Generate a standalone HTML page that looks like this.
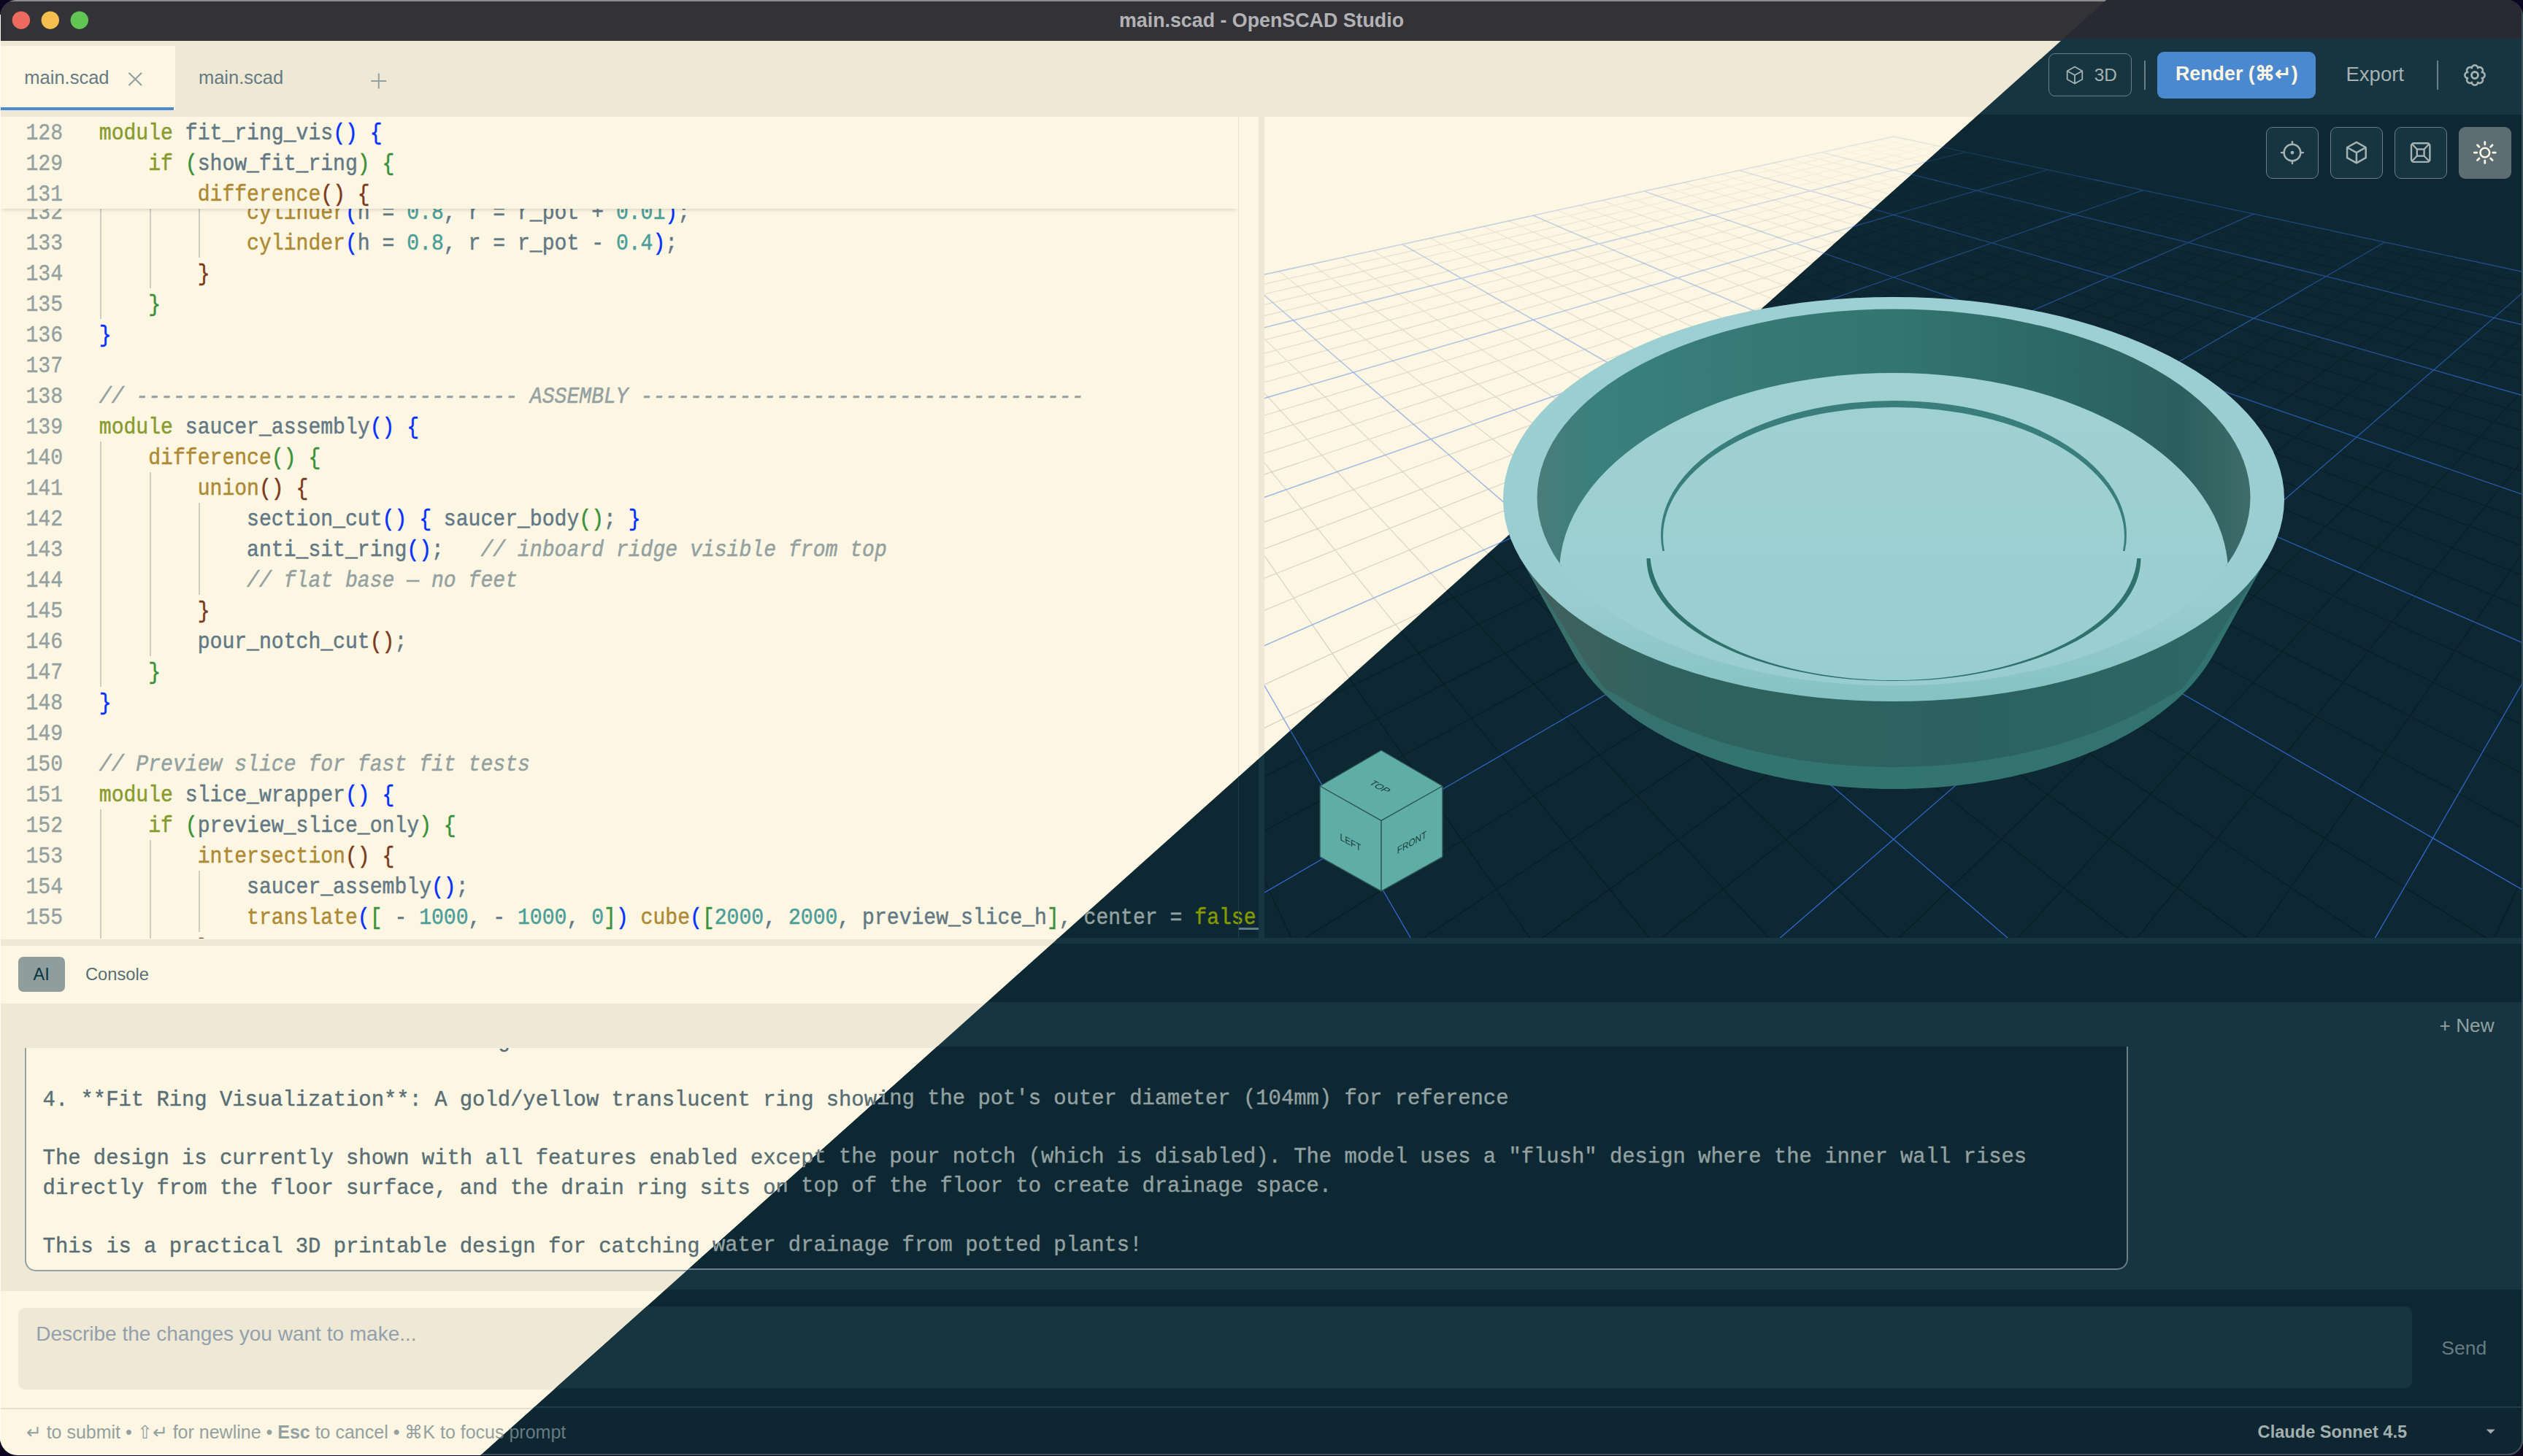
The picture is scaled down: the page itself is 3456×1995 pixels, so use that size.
<!DOCTYPE html><html><head><meta charset="utf-8"><style>
body{margin:0;width:3456px;height:1995px;background:#0c0620;overflow:hidden;position:relative}
.win{position:absolute;left:0;top:0;width:3456px;height:1993.5px;overflow:hidden;border-radius:22px 22px 21px 24px}
.ln{position:absolute;left:0;width:86px;text-align:right;font:400 28.1px/42px "Liberation Mono",monospace;white-space:pre;transform:translateY(3.5px) scaleY(1.13);transform-origin:0 28.5px;-webkit-text-stroke:0.35px currentColor}
.cl{position:absolute;left:135.8px;font:400 28.1px/42px "Liberation Mono",monospace;white-space:pre;transform:translateY(3.5px) scaleY(1.13);transform-origin:0 28.5px;-webkit-text-stroke:0.45px currentColor}
i{font-style:normal}
.light .ln{color:#93a1a1}.light .cl{color:#627985}.light .kw{color:#889b2e}.light .id{color:#627985}.light .fn{color:#ad8a33}.light .num{color:#4b9e99}.light .com{color:#93a1a1;font-style:italic}.light .op{color:#627985}.light .cst{color:#889b2e}.light .b0{color:#0431fa}.light .b1{color:#3a9139}.light .b2{color:#7b3a1c}.dark .ln{color:#586e75}.dark .cl{color:#93a1a1}.dark .kw{color:#889b2e}.dark .id{color:#93a1a1}.dark .fn{color:#ad8a33}.dark .num{color:#4b9e99}.dark .com{color:#657b83;font-style:italic}.dark .op{color:#93a1a1}.dark .cst{color:#859900}.dark .b0{color:#0431fa}.dark .b1{color:#319331}.dark .b2{color:#7b3814}</style></head><body><div class="win light"><div style="position:absolute;left:0px;top:0px;width:3456.0px;height:55.5px;background:#333337;"></div><div style="position:absolute;left:0px;top:0px;width:3456.0px;height:2.0px;background:#8d8d90;"></div><svg width="3456" height="1995" viewBox="0 0 3456 1995" style="position:absolute;left:0;top:0;overflow:visible"><circle cx="28.9" cy="27.7" r="12.2" fill="#ed6a5e"/><circle cx="68.8" cy="27.7" r="12.2" fill="#f4bf4f"/><circle cx="108.8" cy="27.7" r="12.2" fill="#61c554"/></svg><div style="position:absolute;left:0;width:3456px;top:12.7px;text-align:center;font:700 26.8px/30.8px 'Liberation Sans',sans-serif;color:#b2b2b6">main.scad - OpenSCAD Studio</div><div style="position:absolute;left:0px;top:55.5px;width:3456.0px;height:104.5px;background:#eee8d5;"></div><div style="position:absolute;left:0px;top:63.3px;width:239.7px;height:87.7px;background:#fdf6e3;"></div><div style="position:absolute;left:0px;top:147px;width:238.0px;height:4.0px;background:#4a8ad2;"></div><div style="position:absolute;left:33.3px;top:92.3px;font:400 25.5px/29.3px 'Liberation Sans',sans-serif;color:#657b83;white-space:pre;">main.scad</div><div style="position:absolute;left:271.9px;top:92.3px;font:400 25.5px/29.3px 'Liberation Sans',sans-serif;color:#657b83;white-space:pre;">main.scad</div><svg width="3456" height="1995" viewBox="0 0 3456 1995" style="position:absolute;left:0;top:0;overflow:visible"><path d="M176.5 99.8L194 117M194 99.8L176.5 117" stroke="#93a1a1" stroke-width="2.2"/><path d="M508.29999999999995 111H529.3M518.8 100.5V121.5" stroke="#93a1a1" stroke-width="2"/></svg><div style="position:absolute;left:2806.2px;top:73.2px;width:114.2px;height:59.2px;background:transparent;box-sizing:border-box;border:1.6px solid #93a1a1;border-radius:9px"></div><svg width="3456" height="1995" viewBox="0 0 3456 1995" style="position:absolute;left:0;top:0;overflow:visible"><path d="M2842.0 91.5L2852.3 97.2L2852.3 108.8L2842.0 114.5L2831.7 108.8L2831.7 97.2ZM2831.7 97.2L2842.0 103.0L2852.3 97.2M2842.0 103.0L2842.0 114.5" fill="none" stroke="#586e75" stroke-width="1.8" stroke-linejoin="round"/></svg><div style="position:absolute;left:2868.8px;top:89.1px;font:400 24.4px/28.0px 'Liberation Sans',sans-serif;color:#586e75;white-space:pre;">3D</div><div style="position:absolute;left:2937.2px;top:83.3px;width:2.0px;height:39.4px;background:#93a1a1;"></div><div style="position:absolute;left:2955.2px;top:71.2px;width:216.8px;height:63.6px;background:#4a89d0;border-radius:9px"></div><div style="position:absolute;left:2980px;top:86.3px;font:700 26.8px/30.8px 'Liberation Sans',sans-serif;color:#fdf6e3;white-space:pre;">Render (⌘↵)</div><div style="position:absolute;left:3213.5px;top:85.7px;font:400 27.5px/31.6px 'Liberation Sans',sans-serif;color:#586e75;white-space:pre;">Export</div><div style="position:absolute;left:3338px;top:83px;width:2.0px;height:39.6px;background:#93a1a1;"></div><svg width="3456" height="1995" viewBox="0 0 3456 1995" style="position:absolute;left:0;top:0;overflow:visible"><path d="M3403.60 103.00L3403.57 103.53L3403.47 104.06L3403.31 104.57L3403.08 105.07L3402.79 105.54L3402.43 105.98L3402.00 106.38L3401.49 106.73L3400.87 107.01L3399.79 107.06L3400.52 107.85L3400.77 108.49L3400.88 109.09L3400.90 109.68L3400.84 110.24L3400.71 110.78L3400.52 111.30L3400.27 111.77L3399.97 112.22L3399.62 112.62L3399.22 112.97L3398.77 113.27L3398.30 113.52L3397.78 113.71L3397.24 113.84L3396.68 113.90L3396.09 113.88L3395.49 113.77L3394.85 113.52L3394.06 112.79L3394.01 113.87L3393.73 114.49L3393.38 115.00L3392.98 115.43L3392.54 115.79L3392.07 116.08L3391.57 116.31L3391.06 116.47L3390.53 116.57L3390.00 116.60L3389.47 116.57L3388.94 116.47L3388.43 116.31L3387.93 116.08L3387.46 115.79L3387.02 115.43L3386.62 115.00L3386.27 114.49L3385.99 113.87L3385.94 112.79L3385.15 113.52L3384.51 113.77L3383.91 113.88L3383.32 113.90L3382.76 113.84L3382.22 113.71L3381.70 113.52L3381.23 113.27L3380.78 112.97L3380.38 112.62L3380.03 112.22L3379.73 111.77L3379.48 111.30L3379.29 110.78L3379.16 110.24L3379.10 109.68L3379.12 109.09L3379.23 108.49L3379.48 107.85L3380.21 107.06L3379.13 107.01L3378.51 106.73L3378.00 106.38L3377.57 105.98L3377.21 105.54L3376.92 105.07L3376.69 104.57L3376.53 104.06L3376.43 103.53L3376.40 103.00L3376.43 102.47L3376.53 101.94L3376.69 101.43L3376.92 100.93L3377.21 100.46L3377.57 100.02L3378.00 99.62L3378.51 99.27L3379.13 98.99L3380.21 98.94L3379.48 98.15L3379.23 97.51L3379.12 96.91L3379.10 96.32L3379.16 95.76L3379.29 95.22L3379.48 94.70L3379.73 94.23L3380.03 93.78L3380.38 93.38L3380.78 93.03L3381.23 92.73L3381.70 92.48L3382.22 92.29L3382.76 92.16L3383.32 92.10L3383.91 92.12L3384.51 92.23L3385.15 92.48L3385.94 93.21L3385.99 92.13L3386.27 91.51L3386.62 91.00L3387.02 90.57L3387.46 90.21L3387.93 89.92L3388.43 89.69L3388.94 89.53L3389.47 89.43L3390.00 89.40L3390.53 89.43L3391.06 89.53L3391.57 89.69L3392.07 89.92L3392.54 90.21L3392.98 90.57L3393.38 91.00L3393.73 91.51L3394.01 92.13L3394.06 93.21L3394.85 92.48L3395.49 92.23L3396.09 92.12L3396.68 92.10L3397.24 92.16L3397.78 92.29L3398.30 92.48L3398.77 92.73L3399.22 93.03L3399.62 93.38L3399.97 93.78L3400.27 94.23L3400.52 94.70L3400.71 95.22L3400.84 95.76L3400.90 96.32L3400.88 96.91L3400.77 97.51L3400.52 98.15L3399.79 98.94L3400.87 98.99L3401.49 99.27L3402.00 99.62L3402.43 100.02L3402.79 100.46L3403.08 100.93L3403.31 101.43L3403.47 101.94L3403.57 102.47Z" fill="none" stroke="#586e75" stroke-width="2.6" stroke-linejoin="round"/><circle cx="3390" cy="103" r="4.5" fill="none" stroke="#586e75" stroke-width="2.8"/></svg><div style="position:absolute;left:0px;top:160px;width:1724.0px;height:1128.0px;background:#fdf6e3;"></div><div style="position:absolute;left:0;top:160px;width:1721px;height:1126px;overflow:hidden"><div style="position:absolute;left:0;top:-160px;width:1696px;height:1995px"><div style="position:absolute;left:137.3px;top:143px;width:2px;height:294px;background:#cfccc1"></div><div style="position:absolute;left:204.8px;top:185px;width:2px;height:210px;background:#cfccc1"></div><div style="position:absolute;left:272.2px;top:269px;width:2px;height:84px;background:#cfccc1"></div><div style="position:absolute;left:137.3px;top:605px;width:2px;height:336px;background:#cfccc1"></div><div style="position:absolute;left:204.8px;top:647px;width:2px;height:252px;background:#cfccc1"></div><div style="position:absolute;left:272.2px;top:689px;width:2px;height:126px;background:#cfccc1"></div><div style="position:absolute;left:137.3px;top:1109px;width:2px;height:210px;background:#cfccc1"></div><div style="position:absolute;left:204.8px;top:1151px;width:2px;height:168px;background:#cfccc1"></div><div style="position:absolute;left:272.2px;top:1193px;width:2px;height:84px;background:#cfccc1"></div><div class="ln" style="top:269px">132</div><div class="cl" style="top:269px">            <i class="fn">cylinder</i><i class="b0">(</i><i class="id">h</i> <i class="op">=</i> <i class="num">0.8</i><i class="op">,</i> <i class="id">r</i> <i class="op">=</i> <i class="id">r_pot</i> <i class="op">+</i> <i class="num">0.01</i><i class="b0">)</i><i class="op">;</i></div><div class="ln" style="top:311px">133</div><div class="cl" style="top:311px">            <i class="fn">cylinder</i><i class="b0">(</i><i class="id">h</i> <i class="op">=</i> <i class="num">0.8</i><i class="op">,</i> <i class="id">r</i> <i class="op">=</i> <i class="id">r_pot</i> <i class="op">-</i> <i class="num">0.4</i><i class="b0">)</i><i class="op">;</i></div><div class="ln" style="top:353px">134</div><div class="cl" style="top:353px">        <i class="b2">}</i></div><div class="ln" style="top:395px">135</div><div class="cl" style="top:395px">    <i class="b1">}</i></div><div class="ln" style="top:437px">136</div><div class="cl" style="top:437px"><i class="b0">}</i></div><div class="ln" style="top:479px">137</div><div class="cl" style="top:479px"></div><div class="ln" style="top:521px">138</div><div class="cl" style="top:521px"><i class="com">// ------------------------------- ASSEMBLY ------------------------------------</i></div><div class="ln" style="top:563px">139</div><div class="cl" style="top:563px"><i class="kw">module</i> <i class="id">saucer_assembly</i><i class="b0">(</i><i class="b0">)</i> <i class="b0">{</i></div><div class="ln" style="top:605px">140</div><div class="cl" style="top:605px">    <i class="fn">difference</i><i class="b1">(</i><i class="b1">)</i> <i class="b1">{</i></div><div class="ln" style="top:647px">141</div><div class="cl" style="top:647px">        <i class="fn">union</i><i class="b2">(</i><i class="b2">)</i> <i class="b2">{</i></div><div class="ln" style="top:689px">142</div><div class="cl" style="top:689px">            <i class="id">section_cut</i><i class="b0">(</i><i class="b0">)</i> <i class="b0">{</i> <i class="id">saucer_body</i><i class="b1">(</i><i class="b1">)</i><i class="op">;</i> <i class="b0">}</i></div><div class="ln" style="top:731px">143</div><div class="cl" style="top:731px">            <i class="id">anti_sit_ring</i><i class="b0">(</i><i class="b0">)</i><i class="op">;</i>   <i class="com">// inboard ridge visible from top</i></div><div class="ln" style="top:773px">144</div><div class="cl" style="top:773px">            <i class="com">// flat base — no feet</i></div><div class="ln" style="top:815px">145</div><div class="cl" style="top:815px">        <i class="b2">}</i></div><div class="ln" style="top:857px">146</div><div class="cl" style="top:857px">        <i class="id">pour_notch_cut</i><i class="b2">(</i><i class="b2">)</i><i class="op">;</i></div><div class="ln" style="top:899px">147</div><div class="cl" style="top:899px">    <i class="b1">}</i></div><div class="ln" style="top:941px">148</div><div class="cl" style="top:941px"><i class="b0">}</i></div><div class="ln" style="top:983px">149</div><div class="cl" style="top:983px"></div><div class="ln" style="top:1025px">150</div><div class="cl" style="top:1025px"><i class="com">// Preview slice for fast fit tests</i></div><div class="ln" style="top:1067px">151</div><div class="cl" style="top:1067px"><i class="kw">module</i> <i class="id">slice_wrapper</i><i class="b0">(</i><i class="b0">)</i> <i class="b0">{</i></div><div class="ln" style="top:1109px">152</div><div class="cl" style="top:1109px">    <i class="kw">if</i> <i class="b1">(</i><i class="id">preview_slice_only</i><i class="b1">)</i> <i class="b1">{</i></div><div class="ln" style="top:1151px">153</div><div class="cl" style="top:1151px">        <i class="fn">intersection</i><i class="b2">(</i><i class="b2">)</i> <i class="b2">{</i></div><div class="ln" style="top:1193px">154</div><div class="cl" style="top:1193px">            <i class="id">saucer_assembly</i><i class="b0">(</i><i class="b0">)</i><i class="op">;</i></div><div class="ln" style="top:1235px">155</div><div class="cl" style="top:1235px">            <i class="fn">translate</i><i class="b0">(</i><i class="b1">[</i> <i class="op">-</i> <i class="num">1000</i><i class="op">,</i> <i class="op">-</i> <i class="num">1000</i><i class="op">,</i> <i class="num">0</i><i class="b1">]</i><i class="b0">)</i> <i class="fn">cube</i><i class="b0">(</i><i class="b1">[</i><i class="num">2000</i><i class="op">,</i> <i class="num">2000</i><i class="op">,</i> <i class="id">preview_slice_h</i><i class="b1">]</i><i class="op">,</i> <i class="id">center</i> <i class="op">=</i> <i class="cst">false</i><i class="b0">)</i><i class="op">;</i></div><div class="ln" style="top:1277px">156</div><div class="cl" style="top:1277px">        <i class="b2">}</i></div><div style="position:absolute;left:0;top:160px;width:1696px;height:126px;background:#fdf6e3;box-shadow:0 5px 5px -3px rgba(0,0,0,0.13)"></div><div class="ln" style="top:160px">128</div><div class="cl" style="top:160px"><i class="kw">module</i> <i class="id">fit_ring_vis</i><i class="b0">(</i><i class="b0">)</i> <i class="b0">{</i></div><div class="ln" style="top:202px">129</div><div class="cl" style="top:202px">    <i class="kw">if</i> <i class="b1">(</i><i class="id">show_fit_ring</i><i class="b1">)</i> <i class="b1">{</i></div><div class="ln" style="top:244px">131</div><div class="cl" style="top:244px">        <i class="fn">difference</i><i class="b2">(</i><i class="b2">)</i> <i class="b2">{</i></div></div></div><div style="position:absolute;left:1695.8px;top:160px;width:1.4px;height:1126.0px;background:#e9e2cf;"></div><div style="position:absolute;left:1697px;top:1270.5px;width:27.0px;height:3.1px;background:#93a1a1;"></div><div style="position:absolute;left:1724px;top:160px;width:8.0px;height:1128.0px;background:#eee8d5;"></div><div style="position:absolute;left:1732px;top:160px;width:1724.0px;height:1127.0px;background:#fdf6e3;"></div><svg class="grid" width="1724" height="1125" viewBox="1732 160 1724 1125" style="position:absolute;left:1732px;top:160px"><path d="M6721.1 1173.6L7542.4 1364.7M-1537.2 1192.2L-2360.2 1387.2M6863.5 1244.2L7758.1 1458.2M-1679.9 1263.5L-2576.4 1481.8M6402.0 1208.8L7200.0 1411.0M7200.0 1411.0L8281.5 1685.1M-1217.6 1226.0L-2017.1 1432.1M-2017.1 1432.1L-3101.0 1711.4M6530.8 1283.4L7400.7 1510.5M7400.7 1510.5L8603.2 1824.6M-1346.6 1301.2L-2218.2 1532.6M-2218.2 1532.6L-3423.6 1852.5M5964.1 1175.3L6674.6 1366.6M6674.6 1366.6L7628.9 1623.7M7628.9 1623.7L8978.3 1987.2M-779.0 1190.5L-1490.7 1385.2M-1490.7 1385.2L-2446.9 1646.9M-2446.9 1646.9L-3799.7 2017.1M6065.7 1246.0L6836.3 1460.3M6836.3 1460.3L7890.7 1753.5M7890.7 1753.5L9421.2 2179.1M-880.8 1261.7L-1652.7 1479.7M-1652.7 1479.7L-2709.3 1778.1M-2709.3 1778.1L-4243.9 2211.4M5625.1 1210.6L6305.9 1413.1M6305.9 1413.1L7228.7 1687.5M7228.7 1687.5L8550.1 2080.5M8550.1 2080.5L10599.8 2690.1M-439.5 1224.3L-1121.4 1430.0M-1121.4 1430.0L-2045.9 1708.9M-2045.9 1708.9L-3370.5 2108.6M-3370.5 2108.6L-5426.4 2728.9M5710.8 1285.2L6449.2 1512.7M6449.2 1512.7L7470.0 1827.2M7470.0 1827.2L8973.5 2290.4M8973.5 2290.4L11408.1 3040.5M-525.4 1299.4L-1264.9 1530.4M-1264.9 1530.4L-2287.7 1849.9M-2287.7 1849.9L-3794.9 2320.7M-3794.9 2320.7L-6237.8 3083.9M5206.9 1177.0L5806.6 1368.6M5806.6 1368.6L6612.1 1626.0M6612.1 1626.0L7751.2 1990.0M7751.2 1990.0L9485.2 2544.2M9485.2 2544.2L12445.2 3490.1M-20.8 1188.8L-621.4 1383.2M-621.4 1383.2L-1428.1 1644.5M-1428.1 1644.5L-2569.6 2014.2M-2569.6 2014.2L-4308.2 2577.3M-4308.2 2577.3L-7279.1 3539.5M5267.8 1247.8L5914.3 1462.4M5914.3 1462.4L6799.0 1756.0M6799.0 1756.0L8083.2 2182.3M8083.2 2182.3L10116.5 2857.2M10116.5 2857.2L12026.4 3491.2M-81.8 1259.9L-729.2 1477.6M-729.2 1477.6L-1615.4 1775.5M-1615.4 1775.5L-2902.4 2208.3M-2902.4 2208.3L-4941.5 2893.9M-4941.5 2893.9L-6858.5 3538.5M4848.0 1212.3L5411.7 1415.1M5411.7 1415.1L6175.7 1689.9M6175.7 1689.9L7269.8 2083.5M7269.8 2083.5L8967.0 2694.0M8967.0 2694.0L11188.7 3493.2M338.4 1222.5L-225.9 1428.0M-225.9 1428.0L-991.1 1706.5M-991.1 1706.5L-2087.2 2105.5M-2087.2 2105.5L-3788.5 2724.9M-3788.5 2724.9L-6017.6 3536.4M4890.7 1287.1L5497.5 1514.9M5497.5 1514.9L6336.4 1829.8M6336.4 1829.8L7572.0 2293.7M7572.0 2293.7L9573.1 3045.0M9573.1 3045.0L10769.8 3494.3M295.6 1297.5L-311.9 1528.2M-311.9 1528.2L-1152.0 1847.2M-1152.0 1847.2L-2390.1 2317.4M-2390.1 2317.4L-4396.5 3079.4M-4396.5 3079.4L-5597.2 3535.3M4449.6 1178.7L4938.5 1370.6M4938.5 1370.6L5595.1 1628.4M5595.1 1628.4L6523.7 1992.9M6523.7 1992.9L7937.4 2547.9M7937.4 2547.9L10350.8 3495.3M737.2 1187.0L247.8 1381.3M247.8 1381.3L-409.6 1642.2M-409.6 1642.2L-1339.7 2011.3M-1339.7 2011.3L-2756.4 2573.6M-2756.4 2573.6L-5176.8 3534.2M4469.7 1249.6L4992.2 1464.5M4992.2 1464.5L5707.1 1758.6M5707.1 1758.6L6744.9 2185.5M6744.9 2185.5L8388.1 2861.4M8388.1 2861.4L9931.8 3496.4M717.0 1258.1L194.0 1475.5M194.0 1475.5L-521.8 1773.0M-521.8 1773.0L-1561.3 2205.1M-1561.3 2205.1L-3208.2 2889.7M-3208.2 2889.7L-4756.4 3533.2M4070.8 1214.1L4517.3 1417.2M4517.3 1417.2L5122.5 1692.4M5122.5 1692.4L5989.1 2086.5M5989.1 2086.5L7333.6 2698.0M7333.6 2698.0L9093.8 3498.5M1116.2 1220.8L669.4 1425.9M669.4 1425.9L63.6 1704.1M63.6 1704.1L-804.3 2102.5M-804.3 2102.5L-2151.3 2720.9M-2151.3 2720.9L-3915.8 3531.1M4070.5 1288.9L4545.7 1517.1M4545.7 1517.1L5202.6 1832.5M5202.6 1832.5L6170.2 2297.1M6170.2 2297.1L7737.4 3049.5M7737.4 3049.5L8674.7 3499.5M1116.5 1295.6L641.0 1526.0M641.0 1526.0L-16.6 1844.6M-16.6 1844.6L-985.7 2314.1M-985.7 2314.1L-2556.0 3074.8M-2556.0 3074.8L-3495.6 3530.0M3692.2 1180.4L4070.2 1372.6M4070.2 1372.6L4577.9 1630.7M4577.9 1630.7L5295.9 1995.8M5295.9 1995.8L6389.1 2551.6M6389.1 2551.6L8255.5 3500.6M1495.0 1185.3L1116.8 1379.3M1116.8 1379.3L608.7 1639.9M608.7 1639.9L-110.2 2008.5M-110.2 2008.5L-1205.0 2569.9M-1205.0 2569.9L-3075.4 3529.0M3671.5 1251.4L4069.8 1466.6M4069.8 1466.6L4614.9 1761.1M4614.9 1761.1L5406.2 2188.6M5406.2 2188.6L6659.2 2865.6M6659.2 2865.6L7836.3 3501.6M1515.7 1256.3L1117.1 1473.4M1117.1 1473.4L571.6 1770.5M571.6 1770.5L-220.6 2201.9M-220.6 2201.9L-1475.6 2885.4M-1475.6 2885.4L-2655.3 3527.9M3293.5 1215.8L3622.7 1419.2M3622.7 1419.2L4069.0 1694.8M4069.0 1694.8L4708.1 2089.6M4708.1 2089.6L5699.7 2701.9M5699.7 2701.9L6997.9 3503.7M1893.9 1219.0L1564.5 1423.9M1564.5 1423.9L1118.0 1701.6M1118.0 1701.6L478.2 2099.5M478.2 2099.5L-514.6 2717.0M-514.6 2717.0L-1815.1 3525.8M3250.1 1290.8L3593.6 1519.3M3593.6 1519.3L4068.4 1835.1M4068.4 1835.1L4768.0 2300.4M4768.0 2300.4L5901.0 3054.1M5901.0 3054.1L6578.6 3504.8M1937.3 1293.8L1593.6 1523.8M1593.6 1523.8L1118.5 1842.0M1118.5 1842.0L418.3 2310.7M418.3 2310.7L-716.2 3070.3M-716.2 3070.3L-1395.0 3524.8M2934.7 1182.1L3201.8 1374.5M3201.8 1374.5L3560.5 1633.1M3560.5 1633.1L4067.8 1998.7M4067.8 1998.7L4840.3 2555.4M4840.3 2555.4L6159.3 3505.8M2252.8 1183.6L1985.6 1377.3M1985.6 1377.3L1626.7 1637.5M1626.7 1637.5L1119.0 2005.6M1119.0 2005.6L345.8 2566.2M345.8 2566.2L-975.0 3523.7M2873.2 1253.2L3147.3 1468.7M3147.3 1468.7L3522.5 1763.6M3522.5 1763.6L4067.1 2191.8M4067.1 2191.8L4929.6 2869.8M4929.6 2869.8L5739.9 3506.9M2314.3 1254.5L2040.1 1471.2M2040.1 1471.2L1664.7 1767.9M1664.7 1767.9L1119.7 2198.8M1119.7 2198.8L256.4 2881.2M256.4 2881.2L-555.1 3522.7M2516.0 1217.6L2728.0 1421.2M2728.0 1421.2L3015.3 1697.2M3015.3 1697.2L3426.7 2092.6M3426.7 2092.6L4065.1 2705.9M4065.1 2705.9L4901.1 3509.0M2671.5 1217.2L2459.5 1421.8M2459.5 1421.8L2172.1 1699.2M2172.1 1699.2L1760.4 2096.5M1760.4 2096.5L1121.6 2713.0M1121.6 2713.0L284.8 3520.6M2429.6 1292.7L2641.3 1521.4M2641.3 1521.4L2934.1 1837.7M2934.1 1837.7L3365.3 2303.7M3365.3 2303.7L4063.8 3058.6M4063.8 3058.6L4481.6 3510.1M2757.9 1291.9L2546.1 1521.7M2546.1 1521.7L2253.3 1839.3M2253.3 1839.3L1821.9 2307.4M1821.9 2307.4L1122.8 3065.8M1122.8 3065.8L704.6 3519.5M2177.0 1183.8L2333.1 1376.5M2333.1 1376.5L2542.8 1635.4M2542.8 1635.4L2839.4 2001.5M2839.4 2001.5L3291.0 2559.1M3291.0 2559.1L4062.1 3511.1M3010.4 1181.9L2854.3 1375.3M2854.3 1375.3L2644.6 1635.2M2644.6 1635.2L2347.9 2002.7M2347.9 2002.7L1896.1 2562.4M1896.1 2562.4L1124.4 3518.5M2074.7 1255.0L2224.6 1470.8M2224.6 1470.8L2429.8 1766.2M2429.8 1766.2L2727.6 2195.0M2727.6 2195.0L3199.3 2874.0M3199.3 2874.0L3642.5 3512.2M3112.7 1252.7L2962.8 1469.1M2962.8 1469.1L2757.6 1765.4M2757.6 1765.4L2459.7 2195.6M2459.7 2195.6L1987.7 2877.0M1987.7 2877.0L1544.2 3517.4M1738.4 1219.4L1833.0 1423.3M1833.0 1423.3L1961.3 1699.7M1961.3 1699.7L2145.0 2095.6M2145.0 2095.6L2430.1 2709.9M2430.1 2709.9L2803.3 3514.3M3448.9 1215.5L3354.3 1419.8M3354.3 1419.8L3226.0 1696.8M3226.0 1696.8L3042.3 2093.5M3042.3 2093.5L2757.1 2709.1M2757.1 2709.1L2383.7 3515.3M1609.0 1294.5L1688.9 1523.6M1688.9 1523.6L1799.4 1840.4M1799.4 1840.4L1962.2 2307.1M1962.2 2307.1L2225.9 3063.1M2225.9 3063.1L2383.7 3515.3M3578.3 1290.1L3498.4 1519.5M3498.4 1519.5L3387.8 1836.7M3387.8 1836.7L3225.0 2304.1M3225.0 2304.1L2961.2 3061.3M2961.2 3061.3L2803.3 3514.3M1419.3 1185.5L1464.4 1378.5M1464.4 1378.5L1524.9 1637.7M1524.9 1637.7L1610.6 2004.4M1610.6 2004.4L1741.1 2562.8M1741.1 2562.8L1964.0 3516.4M3768.0 1180.2L3722.8 1373.4M3722.8 1373.4L3662.2 1632.8M3662.2 1632.8L3576.5 1999.8M3576.5 1999.8L3445.9 2558.7M3445.9 2558.7L3222.9 3513.2M1276.1 1256.8L1301.7 1472.9M1301.7 1472.9L1336.8 1768.7M1336.8 1768.7L1387.8 2198.1M1387.8 2198.1L1468.4 2878.3M1468.4 2878.3L1544.2 3517.4M3911.0 1250.9L3885.4 1467.0M3885.4 1467.0L3850.2 1762.9M3850.2 1762.9L3799.2 2192.4M3799.2 2192.4L3718.5 2872.8M3718.5 2872.8L3642.5 3512.2M960.7 1221.1L937.9 1425.3M937.9 1425.3L907.1 1702.1M907.1 1702.1L862.9 2098.6M862.9 2098.6L794.4 2713.8M794.4 2713.8L704.6 3519.5M4226.3 1213.7L4248.9 1417.8M4248.9 1417.8L4279.7 1694.3M4279.7 1694.3L4323.7 2090.5M4323.7 2090.5L4392.1 2705.1M4392.1 2705.1L4481.6 3510.1M788.2 1296.4L736.2 1525.8M736.2 1525.8L664.5 1843.0M664.5 1843.0L558.7 2310.4M558.7 2310.4L387.3 3067.6M387.3 3067.6L284.8 3520.6M4398.6 1288.2L4450.5 1517.3M4450.5 1517.3L4522.1 1834.1M4522.1 1834.1L4627.7 2300.7M4627.7 2300.7L4798.8 3056.8M4798.8 3056.8L4901.1 3509.0M661.4 1187.2L595.4 1380.5M595.4 1380.5L506.9 1640.1M506.9 1640.1L381.6 2007.3M381.6 2007.3L190.8 2566.5M190.8 2566.5L-135.1 3521.6M4525.4 1178.5L4591.2 1371.4M4591.2 1371.4L4679.6 1630.5M4679.6 1630.5L4804.7 1996.9M4804.7 1996.9L4995.2 2555.0M4995.2 2555.0L5320.5 3507.9" stroke="#d3cdbf" stroke-opacity="0.95" stroke-width="1.35" fill="none"/><path d="M5466.6 829.2L5918.8 929.0M5918.8 929.0L6475.8 1051.9M6475.8 1051.9L7178.8 1207.1M-280.8 842.0L-733.6 943.8M-733.6 943.8L-1291.5 1069.3M-1291.5 1069.3L-1995.8 1227.8M5521.0 867.1L5998.7 975.3M5998.7 975.3L6592.5 1109.8M6592.5 1109.8L7350.6 1281.5M-335.2 880.1L-813.6 990.5M-813.6 990.5L-1408.4 1127.8M-1408.4 1127.8L-2167.9 1303.1M5579.8 908.0L6085.8 1025.7M6085.8 1025.7L6721.1 1173.6M-394.1 921.3L-900.9 1041.4M-900.9 1041.4L-1537.2 1192.2M5209.1 848.4L5643.6 952.4M5643.6 952.4L6181.2 1081.0M6181.2 1081.0L6863.5 1244.2M-22.9 860.0L-458.0 966.0M-458.0 966.0L-996.4 1097.1M-996.4 1097.1L-1679.9 1263.5M4908.9 830.5L5303.2 930.4M5303.2 930.4L5789.0 1053.5M5789.0 1053.5L6402.0 1208.8M277.6 840.7L-117.2 942.5M-117.2 942.5L-603.6 1067.8M-603.6 1067.8L-1217.6 1226.0M4941.5 868.3L5356.4 976.7M5356.4 976.7L5872.3 1111.4M5872.3 1111.4L6530.8 1283.4M244.9 878.8L-170.5 989.1M-170.5 989.1L-687.0 1126.2M-687.0 1126.2L-1346.6 1301.2M4976.7 909.3L5414.5 1027.2M5414.5 1027.2L5964.1 1175.3M209.7 919.9L-228.6 1039.9M-228.6 1039.9L-779.0 1190.5M4640.7 849.7L5014.9 953.8M5014.9 953.8L5478.0 1082.5M5478.0 1082.5L6065.7 1246.0M546.0 858.8L171.4 964.6M171.4 964.6L-292.3 1095.5M-292.3 1095.5L-880.8 1261.7M4351.2 831.7L4687.6 931.8M4687.6 931.8L5102.0 1055.0M5102.0 1055.0L5625.1 1210.6M835.8 839.5L499.0 941.1M499.0 941.1L84.2 1066.3M84.2 1066.3L-439.5 1224.3M4361.9 869.6L4714.1 978.1M4714.1 978.1L5151.9 1113.0M5151.9 1113.0L5710.8 1285.2M825.0 877.5L472.5 987.6M472.5 987.6L34.2 1124.5M34.2 1124.5L-525.4 1299.4M4373.6 910.7L4743.0 1028.7M4743.0 1028.7L5206.9 1177.0M813.3 918.6L443.5 1038.4M443.5 1038.4L-20.8 1188.8M4072.2 850.9L4386.2 955.2M4386.2 955.2L4774.7 1084.1M4774.7 1084.1L5267.8 1247.8M1115.0 857.5L800.7 963.2M800.7 963.2L411.8 1093.9M411.8 1093.9L-81.8 1259.9M3793.3 832.9L4071.9 933.1M4071.9 933.1L4415.0 1056.6M4415.0 1056.6L4848.0 1212.3M1394.0 838.3L1115.2 939.7M1115.2 939.7L771.9 1064.7M771.9 1064.7L338.4 1222.5M3782.3 870.9L4071.7 979.6M4071.7 979.6L4431.4 1114.6M4431.4 1114.6L4890.7 1287.1M1405.0 876.2L1115.4 986.2M1115.4 986.2L755.4 1122.9M755.4 1122.9L295.6 1297.5M3770.3 912.0L4071.5 1030.2M4071.5 1030.2L4449.6 1178.7M1417.0 917.2L1115.6 1036.9M1115.6 1036.9L737.2 1187.0M3503.6 852.2L3757.4 956.6M3757.4 956.6L4071.3 1085.7M4071.3 1085.7L4469.7 1249.6M1683.8 856.2L1429.9 961.8M1429.9 961.8L1115.8 1092.3M1115.8 1092.3L717.0 1258.1M3235.5 834.2L3456.1 934.5M3456.1 934.5L3727.8 1058.1M3727.8 1058.1L4070.8 1214.1M1952.1 837.0L1731.4 938.3M1731.4 938.3L1459.5 1063.2M1459.5 1063.2L1116.2 1220.8M3202.6 872.2L3429.2 981.0M3429.2 981.0L3710.9 1116.3M3710.9 1116.3L4070.5 1288.9M1984.9 874.9L1758.2 984.7M1758.2 984.7L1476.4 1121.3M1476.4 1121.3L1116.5 1295.6M3167.0 913.3L3399.9 1031.7M3399.9 1031.7L3692.2 1180.4M2020.5 915.9L1787.6 1035.3M1787.6 1035.3L1495.0 1185.3M2935.0 853.5L3128.4 958.0M3128.4 958.0L3367.8 1087.3M3367.8 1087.3L3671.5 1251.4M2252.6 855.0L2059.1 960.4M2059.1 960.4L1819.6 1090.8M1819.6 1090.8L1515.7 1256.3M2677.5 835.4L2840.2 935.9M2840.2 935.9L3040.5 1059.6M3040.5 1059.6L3293.5 1215.8M2510.1 835.8L2347.4 937.0M2347.4 937.0L2147.0 1061.6M2147.0 1061.6L1893.9 1219.0M2622.8 873.5L2786.6 982.4M2786.6 982.4L2990.2 1117.9M2990.2 1117.9L3250.1 1290.8M2564.8 873.6L2401.0 983.3M2401.0 983.3L2197.3 1119.7M2197.3 1119.7L1937.3 1293.8M2563.6 914.7L2728.1 1033.2M2728.1 1033.2L2934.7 1182.1M2624.0 914.6L2459.4 1033.8M2459.4 1033.8L2252.8 1183.6M2366.3 854.7L2499.4 959.4M2499.4 959.4L2664.1 1088.9M2664.1 1088.9L2873.2 1253.2M2821.3 853.7L2688.1 959.0M2688.1 959.0L2523.4 1089.2M2523.4 1089.2L2314.3 1254.5M2119.5 836.6L2224.2 937.3M2224.2 937.3L2353.2 1061.2M2353.2 1061.2L2516.0 1217.6M3068.1 834.5L2963.4 935.6M2963.4 935.6L2834.4 1060.1M2834.4 1060.1L2671.5 1217.2M2042.9 874.8L2143.9 983.9M2143.9 983.9L2269.4 1119.5M2269.4 1119.5L2429.6 1292.7M3144.6 872.3L3043.6 981.9M3043.6 981.9L2918.1 1118.0M2918.1 1118.0L2757.9 1291.9M1960.2 916.0L2056.3 1034.7M2056.3 1034.7L2177.0 1183.8M3227.3 913.2L3131.2 1032.3M3131.2 1032.3L3010.4 1181.9M1797.6 856.0L1870.3 960.8M1870.3 960.8L1960.4 1090.4M1960.4 1090.4L2074.7 1255.0M3389.9 852.4L3317.1 957.5M3317.1 957.5L3227.1 1087.6M3227.1 1087.6L3112.7 1252.7M1561.4 837.9L1608.1 938.6M1608.1 938.6L1665.7 1062.7M1665.7 1062.7L1738.4 1219.4M3626.0 833.3L3579.2 934.2M3579.2 934.2L3521.6 1058.6M3521.6 1058.6L3448.9 1215.5M1463.0 876.1L1501.1 985.3M1501.1 985.3L1548.5 1121.1M1548.5 1121.1L1609.0 1294.5M3724.3 871.1L3686.2 980.4M3686.2 980.4L3638.8 1116.4M3638.8 1116.4L3578.3 1290.1M1356.6 917.4L1384.4 1036.3M1384.4 1036.3L1419.3 1185.5M3830.7 911.9L3802.9 1030.8M3802.9 1030.8L3768.0 1180.2M1228.7 857.2L1241.2 962.2M1241.2 962.2L1256.6 1092.0M1256.6 1092.0L1276.1 1256.8M3958.5 851.2L3946.0 956.1M3946.0 956.1L3930.6 1086.0M3930.6 1086.0L3911.0 1250.9M1003.2 839.1L992.0 940.0M992.0 940.0L978.2 1064.3M978.2 1064.3L960.7 1221.1M4183.8 832.1L4195.0 932.9M4195.0 932.9L4208.8 1057.0M4208.8 1057.0L4226.3 1213.7M883.0 877.4L858.3 986.8M858.3 986.8L827.5 1122.7M827.5 1122.7L788.2 1296.4M4304.0 869.8L4328.7 979.0M4328.7 979.0L4359.4 1114.8M4359.4 1114.8L4398.6 1288.2M753.0 918.7L712.4 1037.8M712.4 1037.8L661.4 1187.2M4433.9 910.5L4474.4 1029.3M4474.4 1029.3L4525.4 1178.5" stroke="#d3cdbf" stroke-opacity="0.86" stroke-width="1.35" fill="none"/><path d="M4777.0 677.0L5092.1 746.6M5092.1 746.6L5466.6 829.2M409.7 686.7L94.2 757.6M94.2 757.6L-280.8 842.0M4521.1 640.6L4799.9 703.7M4799.9 703.7L5128.3 778.1M5128.3 778.1L5521.0 867.1M665.7 649.0L386.7 713.4M386.7 713.4L57.9 789.3M57.9 789.3L-335.2 880.1M4535.0 664.8L4824.4 732.2M4824.4 732.2L5167.2 812.0M5167.2 812.0L5579.8 908.0M651.8 673.4L362.2 742.0M362.2 742.0L19.0 823.4M19.0 823.4L-394.1 921.3M4293.8 629.4L4549.8 690.7M4549.8 690.7L4850.6 762.7M4850.6 762.7L5209.1 848.4M893.3 636.9L637.0 699.3M637.0 699.3L335.9 772.6M335.9 772.6L-22.9 860.0M4307.6 678.1L4582.4 747.7M4582.4 747.7L4908.9 830.5M879.5 685.6L604.4 756.5M604.4 756.5L277.6 840.7M4073.0 641.5L4315.1 704.8M4315.1 704.8L4600.4 779.3M4600.4 779.3L4941.5 868.3M1114.2 648.0L871.9 712.4M871.9 712.4L586.3 788.2M586.3 788.2L244.9 878.8M4072.9 665.9L4323.2 733.3M4323.2 733.3L4619.8 813.2M4619.8 813.2L4976.7 909.3M1114.3 672.4L863.8 740.9M863.8 740.9L566.9 822.2M566.9 822.2L209.7 919.9M3852.3 630.4L4072.8 691.7M4072.8 691.7L4331.9 763.8M4331.9 763.8L4640.7 849.7M1335.0 635.9L1114.4 698.3M1114.4 698.3L855.1 771.5M855.1 771.5L546.0 858.8M3838.1 679.1L4072.6 748.8M4072.6 748.8L4351.2 831.7M1349.2 684.6L1114.6 755.4M1114.6 755.4L835.8 839.5M3624.8 642.5L3830.3 705.9M3830.3 705.9L4072.4 780.5M4072.4 780.5L4361.9 869.6M1562.6 647.1L1357.0 711.3M1357.0 711.3L1114.7 787.0M1114.7 787.0L825.0 877.5M3610.7 666.9L3822.0 734.4M3822.0 734.4L4072.3 814.4M4072.3 814.4L4373.6 910.7M1576.7 671.4L1365.3 739.8M1365.3 739.8L1114.8 820.9M1114.8 820.9L813.3 918.6M3410.8 631.4L3595.7 692.8M3595.7 692.8L3813.1 764.9M3813.1 764.9L4072.2 850.9M1776.8 635.0L1591.7 697.2M1591.7 697.2L1374.2 770.3M1374.2 770.3L1115.0 857.5M3368.6 680.1L3562.7 750.0M3562.7 750.0L3793.3 832.9M1818.9 683.6L1624.7 754.3M1624.7 754.3L1394.0 838.3M3176.6 643.5L3345.5 706.9M3345.5 706.9L3544.4 781.6M3544.4 781.6L3782.3 870.9M2011.0 646.1L1842.1 710.2M1842.1 710.2L1643.0 785.8M1643.0 785.8L1405.0 876.2M3148.5 667.9L3320.7 735.5M3320.7 735.5L3524.8 815.6M3524.8 815.6L3770.3 912.0M2039.1 670.3L1866.8 738.7M1866.8 738.7L1662.6 819.7M1662.6 819.7L1417.0 917.2M2969.2 632.4L3118.7 693.8M3118.7 693.8L3294.3 766.1M3294.3 766.1L3503.6 852.2M2218.4 634.0L2068.9 696.2M2068.9 696.2L1893.2 769.2M1893.2 769.2L1683.8 856.2M2899.1 681.2L3052.8 751.1M3052.8 751.1L3235.5 834.2M2288.6 682.5L2134.8 753.1M2134.8 753.1L1952.1 837.0M2728.3 644.5L2860.5 708.0M2860.5 708.0L3016.3 782.8M3016.3 782.8L3202.6 872.2M2459.3 645.1L2327.1 709.2M2327.1 709.2L2171.3 784.7M2171.3 784.7L1984.9 874.9M2686.3 668.9L2819.4 736.6M2819.4 736.6L2977.2 816.8M2977.2 816.8L3167.0 913.3M2501.4 669.3L2368.2 737.6M2368.2 737.6L2210.4 818.5M2210.4 818.5L2020.5 915.9M2527.6 633.3L2641.5 694.9M2641.5 694.9L2775.4 767.2M2775.4 767.2L2935.0 853.5M2660.1 633.0L2546.1 695.1M2546.1 695.1L2412.2 768.0M2412.2 768.0L2252.6 855.0M2429.5 682.2L2542.8 752.2M2542.8 752.2L2677.5 835.4M2758.2 681.5L2644.8 752.0M2644.8 752.0L2510.1 835.8M2280.0 645.5L2375.6 709.1M2375.6 709.1L2488.2 784.0M2488.2 784.0L2622.8 873.5M2907.6 644.1L2812.0 708.1M2812.0 708.1L2699.4 783.5M2699.4 783.5L2564.8 873.6M2224.0 669.9L2318.1 737.7M2318.1 737.7L2429.5 818.0M2429.5 818.0L2563.6 914.7M2963.6 668.3L2869.6 736.5M2869.6 736.5L2758.1 817.3M2758.1 817.3L2624.0 914.6M2085.9 634.3L2164.4 695.9M2164.4 695.9L2256.5 768.4M2256.5 768.4L2366.3 854.7M3101.7 632.1L3023.2 694.1M3023.2 694.1L2931.1 766.9M2931.1 766.9L2821.3 853.7M1959.8 683.2L2032.8 753.4M2032.8 753.4L2119.5 836.6M3227.7 680.5L3154.8 750.9M3154.8 750.9L3068.1 834.5M1831.7 646.5L1890.6 710.1M1890.6 710.1L1960.0 785.1M1960.0 785.1L2042.9 874.8M3355.9 643.1L3297.0 707.0M3297.0 707.0L3227.6 782.3M3227.6 782.3L3144.6 872.3M1761.6 670.9L1816.6 738.8M1816.6 738.8L1881.8 819.2M1881.8 819.2L1960.2 916.0M3425.9 667.3L3370.9 735.4M3370.9 735.4L3305.7 816.1M3305.7 816.1L3227.3 913.2M1644.2 635.3L1687.1 697.0M1687.1 697.0L1737.5 769.5M1737.5 769.5L1797.6 856.0M3543.2 631.1L3500.3 693.0M3500.3 693.0L3450.0 765.7M3450.0 765.7L3389.9 852.4M1490.1 684.3L1522.7 754.5M1522.7 754.5L1561.4 837.9M3697.3 679.4L3664.7 749.7M3664.7 749.7L3626.0 833.3M1383.3 647.5L1405.5 711.2M1405.5 711.2L1431.7 786.3M1431.7 786.3L1463.0 876.1M3804.1 642.1L3781.8 706.0M3781.8 706.0L3755.6 781.2M3755.6 781.2L3724.3 871.1M1299.3 672.0L1315.1 739.9M1315.1 739.9L1334.0 820.5M1334.0 820.5L1356.6 917.4M3888.0 666.3L3872.1 734.3M3872.1 734.3L3853.3 814.9M3853.3 814.9L3830.7 911.9M1202.5 636.2L1209.8 698.0M1209.8 698.0L1218.5 770.7M1218.5 770.7L1228.7 857.2M3984.7 630.1L3977.4 692.0M3977.4 692.0L3968.8 764.6M3968.8 764.6L3958.5 851.2M1020.4 685.3L1012.6 755.6M1012.6 755.6L1003.2 839.1M4166.7 678.4L4174.5 748.6M4174.5 748.6L4183.8 832.1M934.8 648.4L920.4 712.3M920.4 712.3L903.4 787.5M903.4 787.5L883.0 877.4M4252.2 641.2L4266.7 704.9M4266.7 704.9L4283.6 780.0M4283.6 780.0L4304.0 869.8M836.8 673.0L813.6 741.0M813.6 741.0L786.1 821.7M786.1 821.7L753.0 918.7M4350.2 665.3L4373.3 733.2M4373.3 733.2L4400.8 813.7M4400.8 813.7L4433.9 910.5" stroke="#d3cdbf" stroke-opacity="0.77" stroke-width="1.35" fill="none"/><path d="M4073.4 521.8L4275.9 566.5M4275.9 566.5L4508.0 617.7M4508.0 617.7L4777.0 677.0M1113.8 528.3L911.2 573.8M911.2 573.8L678.8 626.1M678.8 626.1L409.7 686.7M3890.9 497.8L4073.4 539.1M4073.4 539.1L4281.5 586.3M4281.5 586.3L4521.1 640.6M1296.4 503.5L1113.8 545.6M1113.8 545.6L905.5 593.7M905.5 593.7L665.7 649.0M3886.2 513.9L4073.3 557.4M4073.3 557.4L4287.5 607.2M4287.5 607.2L4535.0 664.8M1301.1 519.5L1113.9 563.9M1113.9 563.9L899.6 614.7M899.6 614.7L651.8 673.4M3881.3 530.8L4073.2 576.7M4073.2 576.7L4293.8 629.4M1306.0 536.4L1114.0 583.2M1114.0 583.2L893.3 636.9M3694.1 522.6L3870.6 567.4M3870.6 567.4L4073.1 618.7M4073.1 618.7L4307.6 678.1M1493.3 527.4L1316.7 573.0M1316.7 573.0L1114.1 625.2M1114.1 625.2L879.5 685.6M3525.5 498.6L3684.1 540.0M3684.1 540.0L3864.9 587.2M3864.9 587.2L4073.0 641.5M1661.9 502.7L1503.4 544.8M1503.4 544.8L1322.5 592.8M1322.5 592.8L1114.2 648.0M3511.6 514.7L3673.5 558.3M3673.5 558.3L3858.7 608.2M3858.7 608.2L4072.9 665.9M1675.9 518.7L1513.9 563.0M1513.9 563.0L1328.6 613.7M1328.6 613.7L1114.3 672.4M3497.0 531.6L3662.3 577.6M3662.3 577.6L3852.3 630.4M1690.5 535.6L1525.1 582.3M1525.1 582.3L1335.0 635.9M3314.7 523.5L3465.3 568.3M3465.3 568.3L3638.0 619.6M3638.0 619.6L3838.1 679.1M1872.8 526.6L1722.2 572.1M1722.2 572.1L1549.4 624.2M1549.4 624.2L1349.2 684.6M3160.2 499.4L3294.7 540.8M3294.7 540.8L3448.2 588.1M3448.2 588.1L3624.8 642.5M2027.4 501.9L1892.8 543.9M1892.8 543.9L1739.3 591.9M1739.3 591.9L1562.6 647.1M3137.0 515.5L3273.6 559.2M3273.6 559.2L3430.0 609.1M3430.0 609.1L3610.7 666.9M2050.6 517.9L1913.9 562.1M1913.9 562.1L1757.5 612.8M1757.5 612.8L1576.7 671.4M3112.7 532.5L3251.4 578.5M3251.4 578.5L3410.8 631.4M2074.9 534.7L1936.2 581.4M1936.2 581.4L1776.8 635.0M2935.3 524.3L3060.0 569.1M3060.0 569.1L3203.0 620.6M3203.0 620.6L3368.6 680.1M2252.3 525.8L2127.6 571.2M2127.6 571.2L1984.6 623.2M1984.6 623.2L1818.9 683.6M2794.8 500.2L2905.4 541.7M2905.4 541.7L3031.4 589.0M3031.4 589.0L3176.6 643.5M2392.9 501.1L2282.3 543.1M2282.3 543.1L2156.2 590.9M2156.2 590.9L2011.0 646.1M2762.4 516.3L2873.8 560.0M2873.8 560.0L3001.2 610.1M3001.2 610.1L3148.5 667.9M2425.2 517.1L2313.9 561.3M2313.9 561.3L2186.4 611.9M2186.4 611.9L2039.1 670.3M2728.4 533.3L2840.4 579.4M2840.4 579.4L2969.2 632.4M2459.3 533.9L2347.2 580.5M2347.2 580.5L2218.4 634.0M2555.9 525.1L2654.6 570.0M2654.6 570.0L2767.9 621.5M2767.9 621.5L2899.1 681.2M2631.8 524.9L2533.0 570.3M2533.0 570.3L2419.8 622.3M2419.8 622.3L2288.6 682.5M2429.4 501.0L2516.0 542.5M2516.0 542.5L2614.7 589.9M2614.7 589.9L2728.3 644.5M2758.3 500.3L2671.7 542.2M2671.7 542.2L2573.0 590.0M2573.0 590.0L2459.3 645.1M2387.8 517.1L2473.9 560.9M2473.9 560.9L2572.4 611.0M2572.4 611.0L2686.3 668.9M2799.9 516.2L2713.8 560.4M2713.8 560.4L2615.3 610.9M2615.3 610.9L2501.4 669.3M2344.0 534.1L2429.4 580.3M2429.4 580.3L2527.6 633.3M2843.7 533.0L2758.2 579.6M2758.2 579.6L2660.1 633.0M2176.4 525.9L2249.2 570.9M2249.2 570.9L2332.7 622.5M2332.7 622.5L2429.5 682.2M3011.2 524.1L2938.4 569.4M2938.4 569.4L2854.9 621.3M2854.9 621.3L2758.2 681.5M2064.0 501.8L2126.5 543.4M2126.5 543.4L2197.9 590.9M2197.9 590.9L2280.0 645.5M3123.7 499.5L3061.1 541.3M3061.1 541.3L2989.8 589.1M2989.8 589.1L2907.6 644.1M2013.1 518.0L2073.9 561.8M2073.9 561.8L2143.5 611.9M2143.5 611.9L2224.0 669.9M3174.5 515.4L3113.7 559.5M3113.7 559.5L3044.1 610.0M3044.1 610.0L2963.6 668.3M1959.6 535.0L2018.4 581.2M2018.4 581.2L2085.9 634.3M3228.0 532.2L3169.2 578.7M3169.2 578.7L3101.7 632.1M1796.9 526.8L1843.8 571.8M1843.8 571.8L1897.6 623.4M1897.6 623.4L1959.8 683.2M3390.6 523.3L3343.7 568.5M3343.7 568.5L3290.0 620.4M3290.0 620.4L3227.7 680.5M1698.5 502.6L1737.1 544.2M1737.1 544.2L1781.0 591.8M1781.0 591.8L1831.7 646.5M3489.0 498.7L3450.5 540.5M3450.5 540.5L3406.5 588.2M3406.5 588.2L3355.9 643.1M1638.4 518.8L1673.9 562.7M1673.9 562.7L1714.6 612.9M1714.6 612.9L1761.6 670.9M3549.1 514.6L3513.6 558.6M3513.6 558.6L3472.9 609.0M3472.9 609.0L3425.9 667.3M1575.2 535.8L1607.3 582.1M1607.3 582.1L1644.2 635.3M3612.3 531.4L3580.1 577.8M3580.1 577.8L3543.2 631.1M1417.4 527.6L1438.3 572.7M1438.3 572.7L1462.3 624.4M1462.3 624.4L1490.1 684.3M3770.0 522.5L3749.0 567.6M3749.0 567.6L3725.0 619.4M3725.0 619.4L3697.3 679.4M1333.0 503.4L1347.6 545.1M1347.6 545.1L1364.2 592.7M1364.2 592.7L1383.3 647.5M3854.3 497.9L3839.8 539.6M3839.8 539.6L3823.2 587.3M3823.2 587.3L3804.1 642.1M1263.7 519.6L1273.9 563.5M1273.9 563.5L1285.7 613.8M1285.7 613.8L1299.3 672.0M3923.6 513.8L3913.4 557.8M3913.4 557.8L3901.6 608.1M3901.6 608.1L3888.0 666.3M1190.7 536.7L1196.2 583.0M1196.2 583.0L1202.5 636.2M3996.5 530.5L3991.0 576.9M3991.0 576.9L3984.7 630.1M1037.9 528.4L1032.8 573.6M1032.8 573.6L1027.1 625.3M1027.1 625.3L1020.4 685.3M4149.3 521.6L4154.3 566.7M4154.3 566.7L4160.1 618.5M4160.1 618.5L4166.7 678.4M958.0 545.9L947.2 593.6M947.2 593.6L934.8 648.4M4229.1 538.8L4239.8 586.4M4239.8 586.4L4252.2 641.2M873.9 564.4L856.7 614.8M856.7 614.8L836.8 673.0M4313.2 556.9L4330.3 607.1M4330.3 607.1L4350.2 665.3" stroke="#d3cdbf" stroke-opacity="0.67" stroke-width="1.35" fill="none"/><path d="M3596.5 416.6L3737.4 447.7M3737.4 447.7L3895.3 482.5M3895.3 482.5L4073.4 521.8M1591.0 420.9L1450.0 452.6M1450.0 452.6L1292.0 488.2M1292.0 488.2L1113.8 528.3M3585.9 428.7L3729.6 461.3M3729.6 461.3L3890.9 497.8M1601.5 433.0L1457.9 466.2M1457.9 466.2L1296.4 503.5M3444.1 411.0L3575.0 441.4M3575.0 441.4L3721.3 475.5M3721.3 475.5L3886.2 513.9M1743.4 414.7L1612.5 445.7M1612.5 445.7L1466.1 480.4M1466.1 480.4L1301.1 519.5M3430.4 422.9L3563.5 454.7M3563.5 454.7L3712.7 490.4M3712.7 490.4L3881.3 530.8M1757.1 426.6L1624.0 459.0M1624.0 459.0L1474.7 495.3M1474.7 495.3L1306.0 536.4M3278.2 417.2L3401.1 448.4M3401.1 448.4L3538.8 483.3M3538.8 483.3L3694.1 522.6M1909.4 420.2L1786.4 451.9M1786.4 451.9L1648.7 487.4M1648.7 487.4L1493.3 527.4M3260.7 429.4L3385.4 462.0M3385.4 462.0L3525.5 498.6M1926.9 432.3L1802.1 465.5M1802.1 465.5L1661.9 502.7M3129.2 411.7L3242.4 442.2M3242.4 442.2L3369.0 476.3M3369.0 476.3L3511.6 514.7M2058.4 414.0L1945.2 445.0M1945.2 445.0L1818.5 479.7M1818.5 479.7L1675.9 518.7M3108.7 423.6L3223.3 455.5M3223.3 455.5L3351.8 491.2M3351.8 491.2L3497.0 531.6M2079.0 425.9L1964.3 458.2M1964.3 458.2L1835.8 494.5M1835.8 494.5L1690.5 535.6M2959.9 417.9L3064.8 449.1M3064.8 449.1L3182.2 484.1M3182.2 484.1L3314.7 523.5M2227.8 419.5L2122.9 451.2M2122.9 451.2L2005.4 486.6M2005.4 486.6L1872.8 526.6M2935.4 430.1L3041.3 462.8M3041.3 462.8L3160.2 499.4M2252.3 431.6L2146.4 464.7M2146.4 464.7L2027.4 501.9M2814.3 412.4L2909.8 442.9M2909.8 442.9L3016.7 477.0M3016.7 477.0L3137.0 515.5M2373.4 413.3L2277.9 444.3M2277.9 444.3L2171.0 478.9M2171.0 478.9L2050.6 517.9M2786.9 424.3L2883.0 456.2M2883.0 456.2L2990.9 492.0M2990.9 492.0L3112.7 532.5M2400.8 425.2L2304.6 457.5M2304.6 457.5L2196.8 493.8M2196.8 493.8L2074.9 534.7M2641.6 418.6L2728.4 449.8M2728.4 449.8L2825.6 484.8M2825.6 484.8L2935.3 524.3M2546.1 418.8L2459.3 450.4M2459.3 450.4L2362.0 485.8M2362.0 485.8L2252.3 525.8M2610.1 430.8L2697.1 463.5M2697.1 463.5L2794.8 500.2M2577.6 430.9L2490.6 464.0M2490.6 464.0L2392.9 501.1M2499.4 413.1L2577.2 443.6M2577.2 443.6L2664.3 477.8M2664.3 477.8L2762.4 516.3M2688.3 412.6L2610.5 443.5M2610.5 443.5L2523.4 478.1M2523.4 478.1L2425.2 517.1M2465.1 425.0L2542.8 457.0M2542.8 457.0L2629.9 492.8M2629.9 492.8L2728.4 533.3M2722.6 424.5L2644.9 456.7M2644.9 456.7L2557.7 493.0M2557.7 493.0L2459.3 533.9M2323.3 419.3L2392.0 450.6M2392.0 450.6L2469.0 485.6M2469.0 485.6L2555.9 525.1M2864.4 418.1L2795.7 449.7M2795.7 449.7L2718.7 485.1M2718.7 485.1L2631.8 524.9M2284.8 431.6L2352.9 464.3M2352.9 464.3L2429.4 501.0M2902.9 430.2L2834.8 463.2M2834.8 463.2L2758.3 500.3M2184.4 413.7L2244.6 444.3M2244.6 444.3L2311.9 478.6M2311.9 478.6L2387.8 517.1M3003.3 412.0L2943.1 442.8M2943.1 442.8L2875.7 477.3M2875.7 477.3L2799.9 516.2M2143.3 425.7L2202.5 457.7M2202.5 457.7L2269.0 493.6M2269.0 493.6L2344.0 534.1M3044.3 423.8L2985.1 456.0M2985.1 456.0L2918.7 492.2M2918.7 492.2L2843.7 533.0M2004.9 420.0L2055.6 451.3M2055.6 451.3L2112.4 486.4M2112.4 486.4L2176.4 525.9M3182.7 417.4L3132.0 449.0M3132.0 449.0L3075.3 484.3M3075.3 484.3L3011.2 524.1M1959.4 432.3L2008.7 465.0M2008.7 465.0L2064.0 501.8M3228.2 429.5L3178.9 462.5M3178.9 462.5L3123.7 499.5M1869.4 414.4L1911.9 445.1M1911.9 445.1L1959.5 479.3M1959.5 479.3L2013.1 518.0M3318.2 411.3L3275.7 442.1M3275.7 442.1L3228.1 476.6M3228.1 476.6L3174.5 515.4M1821.5 426.4L1862.3 458.5M1862.3 458.5L1908.0 494.4M1908.0 494.4L1959.6 535.0M3366.1 423.1L3325.3 455.3M3325.3 455.3L3279.6 491.4M3279.6 491.4L3228.0 532.2M1686.5 420.7L1719.2 452.0M1719.2 452.0L1755.7 487.2M1755.7 487.2L1796.9 526.8M3501.0 416.8L3468.4 448.2M3468.4 448.2L3431.8 483.5M3431.8 483.5L3390.6 523.3M1634.1 433.0L1664.4 465.8M1664.4 465.8L1698.5 502.6M3553.4 428.8L3523.1 461.7M3523.1 461.7L3489.0 498.7M1554.4 415.1L1579.3 445.8M1579.3 445.8L1607.1 480.1M1607.1 480.1L1638.4 518.8M3633.1 410.6L3608.2 441.4M3608.2 441.4L3580.4 475.8M3580.4 475.8L3549.1 514.6M1499.7 427.1L1521.9 459.2M1521.9 459.2L1546.9 495.2M1546.9 495.2L1575.2 535.8M3687.8 422.4L3665.5 454.5M3665.5 454.5L3640.5 490.6M3640.5 490.6L3612.3 531.4M1382.7 452.8L1399.0 487.9M1399.0 487.9L1417.4 527.6M3804.7 447.5L3788.4 482.7M3788.4 482.7L3770.0 522.5M1320.1 466.5L1333.0 503.4M3867.2 461.0L3854.3 497.9M1254.6 480.9L1263.7 519.6M3932.7 475.0L3923.6 513.8M1185.9 496.0L1190.7 536.7M4001.4 489.8L3996.5 530.5" stroke="#d3cdbf" stroke-opacity="0.58" stroke-width="1.35" fill="none"/><path d="M3251.8 340.5L3355.6 363.4M3355.6 363.4L3469.9 388.6M3469.9 388.6L3596.5 416.6M1935.8 343.3L1832.0 366.7M1832.0 366.7L1717.7 392.4M1717.7 392.4L1591.0 420.9M3236.3 349.5L3341.3 373.3M3341.3 373.3L3457.3 399.6M3457.3 399.6L3585.9 428.7M1951.3 352.3L1846.3 376.5M1846.3 376.5L1730.3 403.3M1730.3 403.3L1601.5 433.0M3220.2 358.9L3326.5 383.6M3326.5 383.6L3444.1 411.0M1967.5 361.6L1861.1 386.8M1861.1 386.8L1743.4 414.7M3105.8 345.3L3203.4 368.6M3203.4 368.6L3311.1 394.4M3311.1 394.4L3430.4 422.9M2081.9 347.5L1984.2 371.3M1984.2 371.3L1876.5 397.5M1876.5 397.5L1757.1 426.6M2977.7 341.1L3068.1 364.0M3068.1 364.0L3167.8 389.3M3167.8 389.3L3278.2 417.2M2210.0 342.8L2119.5 366.1M2119.5 366.1L2019.8 391.8M2019.8 391.8L1909.4 420.2M2957.0 350.1L3048.2 373.9M3048.2 373.9L3148.9 400.2M3148.9 400.2L3260.7 429.4M2230.7 351.7L2139.5 375.9M2139.5 375.9L2038.7 402.7M2038.7 402.7L1926.9 432.3M2935.5 359.5L3027.5 384.3M3027.5 384.3L3129.2 411.7M2252.2 361.0L2160.2 386.2M2160.2 386.2L2058.4 414.0M2829.1 345.9L2913.1 369.2M2913.1 369.2L3005.9 395.0M3005.9 395.0L3108.7 423.6M2358.6 346.9L2274.5 370.6M2274.5 370.6L2181.8 396.8M2181.8 396.8L2079.0 425.9M2703.5 341.7L2780.7 364.6M2780.7 364.6L2865.7 389.9M2865.7 389.9L2959.9 417.9M2484.2 342.2L2407.0 365.4M2407.0 365.4L2321.9 391.1M2321.9 391.1L2227.8 419.5M2677.7 350.7L2755.1 374.6M2755.1 374.6L2840.6 400.9M2840.6 400.9L2935.4 430.1M2510.1 351.1L2432.6 375.3M2432.6 375.3L2347.1 402.0M2347.1 402.0L2252.3 431.6M2650.8 360.1L2728.4 384.9M2728.4 384.9L2814.3 412.4M2536.9 360.4L2459.3 385.5M2459.3 385.5L2373.4 413.3M2552.3 346.5L2622.9 369.9M2622.9 369.9L2700.7 395.7M2700.7 395.7L2786.9 424.3M2635.4 346.3L2564.8 370.0M2564.8 370.0L2487.0 396.2M2487.0 396.2L2400.8 425.2M2429.4 342.3L2493.2 365.3M2493.2 365.3L2563.6 390.6M2563.6 390.6L2641.6 418.6M2758.4 341.6L2694.5 364.8M2694.5 364.8L2624.1 390.5M2624.1 390.5L2546.1 418.8M2398.3 351.3L2461.9 375.2M2461.9 375.2L2532.2 401.6M2532.2 401.6L2610.1 430.8M2789.4 350.5L2725.8 374.6M2725.8 374.6L2655.5 401.3M2655.5 401.3L2577.6 430.9M2366.1 360.7L2429.4 385.6M2429.4 385.6L2499.4 413.1M2821.6 359.7L2758.3 384.9M2758.3 384.9L2688.3 412.6M2275.6 347.1L2332.6 370.5M2332.6 370.5L2395.5 396.4M2395.5 396.4L2465.1 425.0M2912.1 345.7L2855.1 369.4M2855.1 369.4L2792.2 395.5M2792.2 395.5L2722.6 424.5M2155.2 342.9L2205.8 365.9M2205.8 365.9L2261.5 391.2M2261.5 391.2L2323.3 419.3M3032.5 341.0L2981.9 364.2M2981.9 364.2L2926.2 389.8M2926.2 389.8L2864.4 418.1M2119.0 351.9L2168.8 375.9M2168.8 375.9L2223.8 402.3M2223.8 402.3L2284.8 431.6M3068.7 349.9L3018.9 374.0M3018.9 374.0L2963.9 400.6M2963.9 400.6L2902.9 430.2M2081.4 361.3L2130.3 386.2M2130.3 386.2L2184.4 413.7M3106.3 359.1L3057.4 384.2M3057.4 384.2L3003.3 412.0M1998.9 347.7L2042.3 371.1M2042.3 371.1L2090.2 397.0M2090.2 397.0L2143.3 425.7M3188.8 345.1L3145.3 368.7M3145.3 368.7L3097.4 394.8M3097.4 394.8L3044.3 423.8M1881.0 343.5L1918.3 366.5M1918.3 366.5L1959.4 391.9M1959.4 391.9L2004.9 420.0M3306.6 340.4L3269.3 363.6M3269.3 363.6L3228.2 389.1M3228.2 389.1L3182.7 417.4M1839.6 352.5L1875.6 376.5M1875.6 376.5L1915.3 402.9M1915.3 402.9L1959.4 432.3M3348.0 349.3L3312.0 373.4M3312.0 373.4L3272.3 400.0M3272.3 400.0L3228.2 429.5M1796.6 362.0L1831.2 386.9M1831.2 386.9L1869.4 414.4M3390.9 358.5L3356.4 383.6M3356.4 383.6L3318.2 411.3M1752.0 371.8L1785.0 397.7M1785.0 397.7L1821.5 426.4M3435.6 368.1L3402.6 394.2M3402.6 394.2L3366.1 423.1M1657.2 392.5L1686.5 420.7M3530.3 388.5L3501.0 416.8M1606.9 403.6L1634.1 433.0M3580.6 399.3L3553.4 428.8" stroke="#d3cdbf" stroke-opacity="0.49" stroke-width="1.35" fill="none"/><path d="M3070.7 300.5L3157.2 319.6M3157.2 319.6L3251.8 340.5M2117.0 302.6L2030.4 322.1M2030.4 322.1L1935.8 343.3M2973.2 289.9L3053.3 308.1M3053.3 308.1L3140.7 327.9M3140.7 327.9L3236.3 349.5M2214.5 291.6L2134.3 310.1M2134.3 310.1L2047.0 330.2M2047.0 330.2L1951.3 352.3M2954.7 297.1L3035.4 315.9M3035.4 315.9L3123.6 336.4M3123.6 336.4L3220.2 358.9M2233.0 298.7L2152.3 317.8M2152.3 317.8L2064.1 338.7M2064.1 338.7L1967.5 361.6M2935.5 304.5L3016.9 324.0M3016.9 324.0L3105.8 345.3M2252.2 306.0L2170.8 325.8M2170.8 325.8L2081.9 347.5M2819.7 301.1L2895.2 320.2M2895.2 320.2L2977.7 341.1M2368.0 302.0L2292.5 321.5M2292.5 321.5L2210.0 342.8M2728.5 290.4L2798.1 308.6M2798.1 308.6L2874.0 328.4M2874.0 328.4L2957.0 350.1M2459.3 291.0L2389.6 309.5M2389.6 309.5L2313.7 329.7M2313.7 329.7L2230.7 351.7M2705.8 297.6L2775.7 316.5M2775.7 316.5L2851.9 337.0M2851.9 337.0L2935.5 359.5M2481.9 298.1L2412.0 317.2M2412.0 317.2L2335.8 338.1M2335.8 338.1L2252.2 361.0M2682.4 305.1L2752.5 324.6M2752.5 324.6L2829.1 345.9M2505.3 305.5L2435.2 325.3M2435.2 325.3L2358.6 346.9M2568.8 301.6L2633.2 320.8M2633.2 320.8L2703.5 341.7M2619.0 301.5L2554.6 320.9M2554.6 320.9L2484.2 342.2M2483.7 291.0L2542.8 309.2M2542.8 309.2L2607.2 329.0M2607.2 329.0L2677.7 350.7M2704.0 290.5L2644.9 309.0M2644.9 309.0L2580.5 329.1M2580.5 329.1L2510.1 351.1M2457.0 298.2L2515.9 317.0M2515.9 317.0L2580.3 337.6M2580.3 337.6L2650.8 360.1M2730.7 297.6L2671.8 316.7M2671.8 316.7L2607.4 337.5M2607.4 337.5L2536.9 360.4M2429.3 305.6L2488.1 325.1M2488.1 325.1L2552.3 346.5M2758.4 304.9L2699.6 324.7M2699.6 324.7L2635.4 346.3M2317.8 302.1L2371.1 321.3M2371.1 321.3L2429.4 342.3M2869.9 301.0L2816.6 320.4M2816.6 320.4L2758.4 341.6M2239.0 291.5L2287.5 309.7M2287.5 309.7L2340.4 329.6M2340.4 329.6L2398.3 351.3M2948.7 290.0L2900.2 308.4M2900.2 308.4L2847.3 328.5M2847.3 328.5L2789.4 350.5M2208.1 298.7L2256.2 317.6M2256.2 317.6L2308.6 338.2M2308.6 338.2L2366.1 360.7M2979.6 297.1L2931.5 316.1M2931.5 316.1L2879.1 336.9M2879.1 336.9L2821.6 359.7M2176.2 306.2L2223.7 325.7M2223.7 325.7L2275.6 347.1M3011.5 304.4L2964.0 324.1M2964.0 324.1L2912.1 345.7M2066.8 302.7L2109.0 321.9M2109.0 321.9L2155.2 342.9M3120.8 300.4L3078.6 319.8M3078.6 319.8L3032.5 341.0M2032.2 310.3L2073.6 330.2M2073.6 330.2L2119.0 351.9M3155.4 307.9L3114.0 327.9M3114.0 327.9L3068.7 349.9M1996.4 318.1L2036.9 338.8M2036.9 338.8L2081.4 361.3M3191.3 315.6L3150.7 336.3M3150.7 336.3L3106.3 359.1M1959.3 326.3L1998.9 347.7M3228.3 323.5L3188.8 345.1" stroke="#d3cdbf" stroke-opacity="0.40" stroke-width="1.35" fill="none"/><path d="M2849.9 251.8L2917.8 266.8M2917.8 266.8L2991.1 283.0M2991.1 283.0L3070.7 300.5M2337.8 252.9L2269.9 268.2M2269.9 268.2L2196.6 284.7M2196.6 284.7L2117.0 302.6M2831.2 257.8L2899.4 273.2M2899.4 273.2L2973.2 289.9M2356.5 258.8L2288.3 274.5M2288.3 274.5L2214.5 291.6M2748.6 249.1L2812.0 263.9M2812.0 263.9L2880.4 279.8M2880.4 279.8L2954.7 297.1M2439.2 249.8L2375.8 264.8M2375.8 264.8L2307.3 281.1M2307.3 281.1L2233.0 298.7M2728.5 255.0L2792.1 270.2M2792.1 270.2L2860.9 286.7M2860.9 286.7L2935.5 304.5M2459.2 255.6L2395.7 271.1M2395.7 271.1L2326.8 287.8M2326.8 287.8L2252.2 306.0M2627.3 252.3L2686.4 267.3M2686.4 267.3L2750.4 283.5M2750.4 283.5L2819.7 301.1M2560.5 252.4L2501.3 267.7M2501.3 267.7L2437.4 284.2M2437.4 284.2L2368.0 302.0M2605.2 258.3L2664.4 273.7M2664.4 273.7L2728.5 290.4M2582.6 258.3L2523.4 274.0M2523.4 274.0L2459.3 291.0M2527.6 249.6L2582.4 264.4M2582.4 264.4L2641.6 280.3M2641.6 280.3L2705.8 297.6M2660.2 249.3L2605.3 264.3M2605.3 264.3L2546.1 280.6M2546.1 280.6L2481.9 298.1M2504.1 255.5L2558.9 270.7M2558.9 270.7L2618.1 287.2M2618.1 287.2L2682.4 305.1M2683.6 255.1L2628.8 270.6M2628.8 270.6L2569.6 287.3M2569.6 287.3L2505.3 305.5M2404.6 252.8L2455.0 267.8M2455.0 267.8L2509.6 284.0M2509.6 284.0L2568.8 301.6M2783.1 252.0L2732.7 267.2M2732.7 267.2L2678.1 283.6M2678.1 283.6L2619.0 301.5M2379.1 258.7L2429.3 274.2M2429.3 274.2L2483.7 291.0M2808.6 257.8L2758.4 273.5M2758.4 273.5L2704.0 290.5M2306.5 250.1L2352.8 264.9M2352.8 264.9L2402.8 280.9M2402.8 280.9L2457.0 298.2M2881.2 248.9L2834.9 263.8M2834.9 263.8L2784.9 280.0M2784.9 280.0L2730.7 297.6M2279.7 256.0L2325.7 271.2M2325.7 271.2L2375.4 287.7M2375.4 287.7L2429.3 305.6M2908.0 254.6L2862.0 270.1M2862.0 270.1L2812.3 286.8M2812.3 286.8L2758.4 304.9M2223.7 268.3L2268.8 284.5M2268.8 284.5L2317.8 302.1M2964.0 266.7L2918.9 283.1M2918.9 283.1L2869.9 301.0M2194.3 274.7L2239.0 291.5M2993.4 273.0L2948.7 290.0M2164.0 281.4L2208.1 298.7M3023.7 279.5L2979.6 297.1M2132.6 288.2L2176.2 306.2M3055.0 286.3L3011.5 304.4" stroke="#d3cdbf" stroke-opacity="0.30" stroke-width="1.35" fill="none"/><path d="M2673.9 213.0L2728.5 225.0M2728.5 225.0L2787.0 237.9M2787.0 237.9L2849.9 251.8M2513.8 213.3L2459.2 225.6M2459.2 225.6L2400.7 238.8M2400.7 238.8L2337.8 252.9M2654.7 217.8L2709.4 230.2M2709.4 230.2L2768.1 243.5M2768.1 243.5L2831.2 257.8M2533.0 218.0L2478.3 230.7M2478.3 230.7L2419.6 244.2M2419.6 244.2L2356.5 258.8M2583.9 210.8L2635.0 222.7M2635.0 222.7L2689.8 235.5M2689.8 235.5L2748.6 249.1M2603.8 210.8L2552.7 222.9M2552.7 222.9L2498.0 235.9M2498.0 235.9L2439.2 249.8M2563.6 215.6L2614.7 227.8M2614.7 227.8L2669.5 240.9M2669.5 240.9L2728.5 255.0M2624.1 215.4L2573.0 227.9M2573.0 227.9L2518.2 241.2M2518.2 241.2L2459.2 255.6M2473.8 213.4L2521.4 225.5M2521.4 225.5L2572.4 238.4M2572.4 238.4L2627.3 252.3M2714.0 212.9L2666.4 225.2M2666.4 225.2L2615.3 238.3M2615.3 238.3L2560.5 252.4M2451.9 218.2L2499.3 230.6M2499.3 230.6L2550.3 243.9M2550.3 243.9L2605.2 258.3M2735.9 217.6L2688.4 230.2M2688.4 230.2L2637.4 243.7M2637.4 243.7L2582.6 258.3M2429.3 223.2L2476.7 235.9M2476.7 235.9L2527.6 249.6M2758.4 222.5L2711.1 235.4M2711.1 235.4L2660.2 249.3M2406.1 228.2L2453.3 241.4M2453.3 241.4L2504.1 255.5M2781.6 227.4L2734.4 240.8M2734.4 240.8L2683.6 255.1M2357.8 238.9L2404.6 252.8M2829.9 237.8L2783.1 252.0M2332.5 244.4L2379.1 258.7M2855.2 243.3L2808.6 257.8" stroke="#d3cdbf" stroke-opacity="0.21" stroke-width="1.35" fill="none"/><path d="M2575.1 191.2L2622.9 201.7M2622.9 201.7L2673.9 213.0M2612.6 191.1L2564.8 201.8M2564.8 201.8L2513.8 213.3M2555.9 195.4L2603.7 206.2M2603.7 206.2L2654.7 217.8M2631.9 195.2L2584.1 206.3M2584.1 206.3L2533.0 218.0M2536.2 199.7L2583.9 210.8M2651.6 199.5L2603.8 210.8M2515.9 204.2L2563.6 215.6M2671.8 203.8L2624.1 215.4" stroke="#d3cdbf" stroke-opacity="0.12" stroke-width="1.35" fill="none"/><path d="M6286.1 1141.7L7022.2 1322.9M7022.2 1322.9L8002.4 1564.1M-1101.5 1158.3L-1838.9 1343.0M-1838.9 1343.0L-2821.3 1589.0M5547.9 1143.4L6179.0 1324.8M6179.0 1324.8L7019.5 1566.4M7019.5 1566.4L8194.2 1904.0M8194.2 1904.0L9951.9 2409.2M-362.2 1156.7L-994.3 1341.1M-994.3 1341.1L-1836.3 1586.7M-1836.3 1586.7L-3013.6 1930.2M-3013.6 1930.2L-4776.3 2444.4M4809.5 1145.0L5335.7 1326.7M5335.7 1326.7L6036.3 1568.6M6036.3 1568.6L7015.7 1906.8M7015.7 1906.8L8481.2 2412.8M8481.2 2412.8L10914.5 3252.9M10914.5 3252.9L11607.6 3492.2M376.9 1155.0L-149.8 1339.1M-149.8 1339.1L-851.5 1584.4M-851.5 1584.4L-1832.5 1927.4M-1832.5 1927.4L-3301.4 2440.9M-3301.4 2440.9L-5742.3 3294.2M-5742.3 3294.2L-6438.0 3537.4M4071.1 1146.7L4492.2 1328.6M4492.2 1328.6L5053.0 1570.9M5053.0 1570.9L5836.9 1909.5M5836.9 1909.5L7010.0 2416.3M7010.0 2416.3L8957.9 3257.7M8957.9 3257.7L9512.8 3497.4M1116.0 1153.3L694.5 1337.2M694.5 1337.2L133.1 1582.2M133.1 1582.2L-651.8 1924.7M-651.8 1924.7L-1827.0 2437.4M-1827.0 2437.4L-3779.6 3289.3M-3779.6 3289.3L-4336.1 3532.1M3332.5 1148.4L3648.5 1330.5M3648.5 1330.5L4069.4 1573.1M4069.4 1573.1L4657.8 1912.3M4657.8 1912.3L5538.3 2419.8M5538.3 2419.8L7000.6 3262.6M7000.6 3262.6L7417.1 3502.7M1854.9 1151.7L1538.7 1335.3M1538.7 1335.3L1117.5 1579.9M1117.5 1579.9L528.6 1921.9M528.6 1921.9L-353.0 2433.9M-353.0 2433.9L-1817.7 3284.5M-1817.7 3284.5L-2235.1 3526.9M2593.8 1150.0L2804.7 1332.4M2804.7 1332.4L3085.7 1575.4M3085.7 1575.4L3478.4 1915.0M3478.4 1915.0L4066.2 2423.3M4066.2 2423.3L5042.4 3267.5M5042.4 3267.5L5320.5 3507.9M2593.8 1150.0L2382.8 1333.4M2382.8 1333.4L2101.7 1577.7M2101.7 1577.7L1708.8 1919.1M1708.8 1919.1L1120.6 2430.3M1120.6 2430.3L143.4 3279.6M143.4 3279.6L-135.1 3521.6M1854.9 1151.7L1960.8 1334.4M1960.8 1334.4L2101.7 1577.7M2101.7 1577.7L2298.7 1917.8M2298.7 1917.8L2593.6 2426.8M2593.6 2426.8L3083.4 3272.3M3083.4 3272.3L3222.9 3513.2M3332.5 1148.4L3226.6 1331.5M3226.6 1331.5L3085.7 1575.4M3085.7 1575.4L2888.6 1916.4M2888.6 1916.4L2593.6 2426.8M2593.6 2426.8L2103.6 3274.7M2103.6 3274.7L1964.0 3516.4M1116.0 1153.3L1116.7 1336.3M1116.7 1336.3L1117.5 1579.9M1117.5 1579.9L1118.7 1920.5M1118.7 1920.5L1120.6 2430.3M1120.6 2430.3L1123.6 3277.2M1123.6 3277.2L1124.4 3518.5M4071.1 1146.7L4070.4 1329.6M4070.4 1329.6L4069.4 1573.1M4069.4 1573.1L4068.1 1913.6M4068.1 1913.6L4066.2 2423.3M4066.2 2423.3L4063.0 3269.9M4063.0 3269.9L4062.1 3511.1" stroke="#88a9e0" stroke-opacity="1.00" stroke-width="1.6" fill="none"/><path d="M5845.3 886.5L6369.5 999.2M6369.5 999.2L7024.2 1140.0M-660.0 900.9L-1185.0 1016.1M-1185.0 1016.1L-1840.9 1160.0M5254.3 887.8L5713.1 1000.7M5713.1 1000.7L6286.1 1141.7M-68.2 899.6L-527.6 1014.6M-527.6 1014.6L-1101.5 1158.3M4663.2 889.1L5056.5 1002.1M5056.5 1002.1L5547.9 1143.4M523.5 898.3L129.7 1013.2M129.7 1013.2L-362.2 1156.7M4072.0 890.4L4399.9 1003.6M4399.9 1003.6L4809.5 1145.0M1115.1 897.0L786.9 1011.7M786.9 1011.7L376.9 1155.0M3480.8 891.7L3743.2 1005.1M3743.2 1005.1L4071.1 1146.7M1706.6 895.7L1444.0 1010.2M1444.0 1010.2L1116.0 1153.3M2889.5 893.0L3086.4 1006.5M3086.4 1006.5L3332.5 1148.4M2298.1 894.3L2101.1 1008.8M2101.1 1008.8L1854.9 1151.7M2298.1 894.3L2429.6 1008.0M2429.6 1008.0L2593.8 1150.0M2889.5 893.0L2758.0 1007.3M2758.0 1007.3L2593.8 1150.0M1706.6 895.7L1772.6 1009.5M1772.6 1009.5L1854.9 1151.7M3480.8 891.7L3414.8 1005.8M3414.8 1005.8L3332.5 1148.4M1115.1 897.0L1115.5 1011.0M1115.5 1011.0L1116.0 1153.3M4072.0 890.4L4071.6 1004.3M4071.6 1004.3L4071.1 1146.7" stroke="#88a9e0" stroke-opacity="0.91" stroke-width="1.6" fill="none"/><path d="M4755.4 652.0L5058.3 717.2M5058.3 717.2L5416.1 794.1M5416.1 794.1L5845.3 886.5M431.2 661.5L128.0 728.0M128.0 728.0L-230.2 806.6M-230.2 806.6L-660.0 900.9M4300.4 653.0L4565.5 718.3M4565.5 718.3L4878.7 795.3M4878.7 795.3L5254.3 887.8M886.6 660.5L621.3 727.0M621.3 727.0L307.8 805.4M307.8 805.4L-68.2 899.6M3845.4 654.0L4072.7 719.3M4072.7 719.3L4341.2 796.5M4341.2 796.5L4663.2 889.1M1341.9 659.5L1114.5 725.9M1114.5 725.9L845.8 804.3M845.8 804.3L523.5 898.3M3390.3 655.0L3579.8 720.4M3579.8 720.4L3803.6 797.7M3803.6 797.7L4072.0 890.4M1797.2 658.5L1607.6 724.8M1607.6 724.8L1383.7 803.1M1383.7 803.1L1115.1 897.0M2935.2 656.0L3086.8 721.5M3086.8 721.5L3265.9 798.9M3265.9 798.9L3480.8 891.7M2252.4 657.5L2100.8 723.7M2100.8 723.7L1921.6 801.9M1921.6 801.9L1706.6 895.7M2480.0 657.0L2593.8 722.6M2593.8 722.6L2728.2 800.1M2728.2 800.1L2889.5 893.0M2707.6 656.5L2593.8 722.6M2593.8 722.6L2459.4 800.7M2459.4 800.7L2298.1 894.3M2024.8 658.0L2100.8 723.7M2100.8 723.7L2190.5 801.3M2190.5 801.3L2298.1 894.3M3162.8 655.5L3086.8 721.5M3086.8 721.5L2997.1 799.5M2997.1 799.5L2889.5 893.0M1569.6 659.0L1607.6 724.8M1607.6 724.8L1652.6 802.5M1652.6 802.5L1706.6 895.7M3617.9 654.5L3579.8 720.4M3579.8 720.4L3534.8 798.3M3534.8 798.3L3480.8 891.7M1114.2 660.0L1114.5 725.9M1114.5 725.9L1114.8 803.7M1114.8 803.7L1115.1 897.0M4072.9 653.5L4072.7 719.3M4072.7 719.3L4072.4 797.1M4072.4 797.1L4072.0 890.4" stroke="#88a9e0" stroke-opacity="0.82" stroke-width="1.6" fill="none"/><path d="M4073.5 505.3L4270.6 547.7M4270.6 547.7L4495.7 596.2M4495.7 596.2L4755.4 652.0M1113.7 511.8L916.5 555.1M916.5 555.1L691.2 604.5M691.2 604.5L431.2 661.5M3703.6 506.1L3876.1 548.6M3876.1 548.6L4073.1 597.1M4073.1 597.1L4300.4 653.0M1483.8 511.0L1311.2 554.2M1311.2 554.2L1114.0 603.6M1114.0 603.6L886.6 660.5M3333.7 506.9L3481.6 549.4M3481.6 549.4L3650.5 598.0M3650.5 598.0L3845.4 654.0M1853.8 510.2L1705.9 553.3M1705.9 553.3L1536.9 602.6M1536.9 602.6L1341.9 659.5M2963.8 507.8L3087.1 550.3M3087.1 550.3L3227.9 598.9M3227.9 598.9L3390.3 655.0M2223.9 509.4L2100.6 552.5M2100.6 552.5L1959.7 601.7M1959.7 601.7L1797.2 658.5M2593.8 508.6L2692.5 551.2M2692.5 551.2L2805.2 599.9M2805.2 599.9L2935.2 656.0M2593.8 508.6L2495.2 551.6M2495.2 551.6L2382.5 600.8M2382.5 600.8L2252.4 657.5M2223.9 509.4L2297.9 552.0M2297.9 552.0L2382.5 600.8M2382.5 600.8L2480.0 657.0M2963.8 507.8L2889.8 550.7M2889.8 550.7L2805.2 599.9M2805.2 599.9L2707.6 656.5M1853.8 510.2L1903.2 552.9M1903.2 552.9L1959.7 601.7M1959.7 601.7L2024.8 658.0M3333.7 506.9L3284.3 549.9M3284.3 549.9L3227.9 598.9M3227.9 598.9L3162.8 655.5M1483.8 511.0L1508.6 553.8M1508.6 553.8L1536.9 602.6M1536.9 602.6L1569.6 659.0M3703.6 506.1L3678.8 549.0M3678.8 549.0L3650.5 598.0M3650.5 598.0L3617.9 654.5M1113.7 511.8L1113.9 554.6M1113.9 554.6L1114.0 603.6M1114.0 603.6L1114.2 660.0M4073.5 505.3L4073.3 548.2M4073.3 548.2L4073.1 597.1M4073.1 597.1L4072.9 653.5" stroke="#88a9e0" stroke-opacity="0.73" stroke-width="1.6" fill="none"/><path d="M3744.9 434.7L3899.6 467.9M3899.6 467.9L4073.5 505.3M1442.5 439.7L1287.8 473.6M1287.8 473.6L1113.7 511.8M3416.1 435.4L3551.4 468.7M3551.4 468.7L3703.6 506.1M1771.5 438.9L1636.1 472.8M1636.1 472.8L1483.8 511.0M3087.2 436.1L3203.2 469.4M3203.2 469.4L3333.7 506.9M2100.4 438.2L1984.4 472.1M1984.4 472.1L1853.8 510.2M2758.3 436.8L2855.0 470.2M2855.0 470.2L2963.8 507.8M2429.4 437.5L2332.7 471.3M2332.7 471.3L2223.9 509.4M2429.4 437.5L2506.8 471.0M2506.8 471.0L2593.8 508.6M2758.3 436.8L2680.9 470.6M2680.9 470.6L2593.8 508.6M2100.4 438.2L2158.5 471.7M2158.5 471.7L2223.9 509.4M3087.2 436.1L3029.1 469.8M3029.1 469.8L2963.8 507.8M1771.5 438.9L1810.2 472.5M1810.2 472.5L1853.8 510.2M3416.1 435.4L3377.3 469.1M3377.3 469.1L3333.7 506.9M1442.5 439.7L1461.9 473.2M1461.9 473.2L1483.8 511.0M3744.9 434.7L3725.5 468.3M3725.5 468.3L3703.6 506.1" stroke="#88a9e0" stroke-opacity="0.64" stroke-width="1.6" fill="none"/><path d="M3369.3 353.8L3482.0 378.1M3482.0 378.1L3606.6 404.9M3606.6 404.9L3744.9 434.7M1818.3 357.2L1705.6 381.9M1705.6 381.9L1580.9 409.3M1580.9 409.3L1442.5 439.7M3087.3 354.5L3186.0 378.7M3186.0 378.7L3295.0 405.6M3295.0 405.6L3416.1 435.4M2100.3 356.6L2001.7 381.3M2001.7 381.3L1892.6 408.6M1892.6 408.6L1771.5 438.9M2805.3 355.1L2889.9 379.4M2889.9 379.4L2983.4 406.2M2983.4 406.2L3087.2 436.1M2382.4 356.0L2297.8 380.7M2297.8 380.7L2204.3 407.9M2204.3 407.9L2100.4 438.2M2523.4 355.7L2593.9 380.0M2593.9 380.0L2671.8 406.9M2671.8 406.9L2758.3 436.8M2664.4 355.4L2593.9 380.0M2593.9 380.0L2515.9 407.3M2515.9 407.3L2429.4 437.5M2241.4 356.3L2297.8 380.7M2297.8 380.7L2360.1 407.6M2360.1 407.6L2429.4 437.5M2946.3 354.8L2889.9 379.4M2889.9 379.4L2827.6 406.6M2827.6 406.6L2758.3 436.8M1959.3 356.9L2001.7 381.3M2001.7 381.3L2048.5 408.3M2048.5 408.3L2100.4 438.2M3228.3 354.2L3186.0 378.7M3186.0 378.7L3139.2 405.9M3139.2 405.9L3087.2 436.1M1705.6 381.9L1736.8 408.9M1736.8 408.9L1771.5 438.9M3482.0 378.1L3450.8 405.2M3450.8 405.2L3416.1 435.4" stroke="#88a9e0" stroke-opacity="0.56" stroke-width="1.6" fill="none"/><path d="M3087.4 293.2L3173.2 311.7M3173.2 311.7L3266.8 331.8M3266.8 331.8L3369.3 353.8M2100.3 295.3L2014.5 314.2M2014.5 314.2L1920.8 334.7M1920.8 334.7L1818.3 357.2M2840.6 293.8L2915.7 312.2M2915.7 312.2L2997.6 332.4M2997.6 332.4L3087.3 354.5M2347.1 294.8L2272.0 313.6M2272.0 313.6L2190.1 334.1M2190.1 334.1L2100.3 356.6M2593.9 294.3L2658.2 312.8M2658.2 312.8L2728.5 333.0M2728.5 333.0L2805.3 355.1M2593.9 294.3L2529.5 313.1M2529.5 313.1L2459.3 333.6M2459.3 333.6L2382.4 356.0M2347.1 294.8L2400.7 313.3M2400.7 313.3L2459.3 333.6M2459.3 333.6L2523.4 355.7M2840.6 293.8L2787.0 312.5M2787.0 312.5L2728.5 333.0M2728.5 333.0L2664.4 355.4M2100.3 295.3L2143.2 313.9M2143.2 313.9L2190.1 334.1M2190.1 334.1L2241.4 356.3M3087.4 293.2L3044.5 312.0M3044.5 312.0L2997.6 332.4M2997.6 332.4L2946.3 354.8M1920.8 334.7L1959.3 356.9M3266.8 331.8L3228.3 354.2" stroke="#88a9e0" stroke-opacity="0.47" stroke-width="1.6" fill="none"/><path d="M2868.1 246.0L2935.6 260.6M2935.6 260.6L3008.5 276.2M3008.5 276.2L3087.4 293.2M2319.6 247.2L2252.1 262.0M2252.1 262.0L2179.2 278.0M2179.2 278.0L2100.3 295.3M2648.7 246.5L2707.8 261.1M2707.8 261.1L2771.6 276.7M2771.6 276.7L2840.6 293.8M2539.0 246.8L2480.0 261.5M2480.0 261.5L2416.2 277.5M2416.2 277.5L2347.1 294.8M2429.3 247.0L2480.0 261.5M2480.0 261.5L2534.6 277.3M2534.6 277.3L2593.9 294.3M2758.4 246.3L2707.8 261.1M2707.8 261.1L2653.1 277.0M2653.1 277.0L2593.9 294.3M2252.1 262.0L2297.7 277.8M2297.7 277.8L2347.1 294.8M2935.6 260.6L2890.0 276.5M2890.0 276.5L2840.6 293.8" stroke="#88a9e0" stroke-opacity="0.38" stroke-width="1.6" fill="none"/><path d="M2747.1 220.0L2805.4 232.6M2805.4 232.6L2868.1 246.0M2440.7 220.7L2382.3 233.5M2382.3 233.5L2319.6 247.2M2542.8 220.5L2593.9 233.0M2593.9 233.0L2648.7 246.5M2644.9 220.2L2593.9 233.0M2593.9 233.0L2539.0 246.8M2382.3 233.5L2429.3 247.0M2805.4 232.6L2758.4 246.3" stroke="#88a9e0" stroke-opacity="0.29" stroke-width="1.6" fill="none"/><path d="M2593.9 187.1L2641.7 197.3M2641.7 197.3L2692.6 208.3M2692.6 208.3L2747.1 220.0M2593.9 187.1L2546.1 197.5M2546.1 197.5L2495.1 208.7M2495.1 208.7L2440.7 220.7M2495.1 208.7L2542.8 220.5M2692.6 208.3L2644.9 220.2" stroke="#88a9e0" stroke-opacity="0.20" stroke-width="1.6" fill="none"/></svg><div style="position:absolute;left:3104.2px;top:173.5px;width:71.5px;height:71.0px;background:#eee8d5;box-sizing:border-box;border:1.6px solid #93a1a1;border-radius:9px"></div><div style="position:absolute;left:3192.2px;top:173.5px;width:71.5px;height:71.0px;background:#eee8d5;box-sizing:border-box;border:1.6px solid #93a1a1;border-radius:9px"></div><div style="position:absolute;left:3280.3px;top:173.5px;width:71.5px;height:71.0px;background:#eee8d5;box-sizing:border-box;border:1.6px solid #93a1a1;border-radius:9px"></div><div style="position:absolute;left:3368.0px;top:173.5px;width:71.9px;height:71.0px;background:#5c6e74;border-radius:9px"></div><svg width="3456" height="1995" viewBox="0 0 3456 1995" style="position:absolute;left:0;top:0;overflow:visible"><circle cx="3139.95" cy="209.1" r="11.4" fill="none" stroke="#586e75" stroke-width="2.4"/><circle cx="3139.95" cy="209.1" r="2.4" fill="#586e75"/><path d="M3139.95 194.1V198.1M3139.95 220.1V224.1M3124.95 209.1H3128.95M3150.95 209.1H3154.95" stroke="#586e75" stroke-width="2.4" stroke-linecap="round"/><path d="M3227.9 194.9L3240.7 202.0L3240.7 216.2L3227.9 223.3L3215.1 216.2L3215.1 202.0ZM3215.1 202.0L3227.9 209.1L3240.7 202.0M3227.9 209.1L3227.9 223.3" fill="none" stroke="#586e75" stroke-width="2.5" stroke-linejoin="round"/><rect x="3303.0" y="196.29999999999998" width="25.4" height="25.6" rx="3.5" fill="none" stroke="#586e75" stroke-width="2.4"/><rect x="3310.7999999999997" y="204.5" width="9.8" height="9.2" fill="none" stroke="#586e75" stroke-width="2.4"/><path d="M3303.7 197.1L3310.7999999999997 204.5M3327.7 197.1L3320.6 204.5M3303.7 221.1L3310.7999999999997 213.7M3327.7 221.1L3320.6 213.7" stroke="#586e75" stroke-width="2.2"/><circle cx="3403.8" cy="209.1" r="6.4" fill="none" stroke="#fdf6e3" stroke-width="2.6"/><path d="M3414.8 209.1L3418.3 209.1M3411.6 216.9L3414.1 219.4M3403.8 220.1L3403.8 223.6M3396.0 216.9L3393.5 219.4M3392.8 209.1L3389.3 209.1M3396.0 201.3L3393.5 198.8M3403.8 198.1L3403.8 194.6M3411.6 201.3L3414.1 198.8" stroke="#fdf6e3" stroke-width="2.8" stroke-linecap="round"/></svg><div style="position:absolute;left:0px;top:1286.6px;width:3456.0px;height:9.2px;background:#eee8d5;"></div><div style="position:absolute;left:0px;top:1295.8px;width:3456.0px;height:79.2px;background:#fdf6e3;"></div><div style="position:absolute;left:25px;top:1311px;width:63.8px;height:47.8px;background:#8f9d9d;border-radius:7px"></div><div style="position:absolute;left:45.6px;top:1322.0px;font:400 23.5px/27.0px 'Liberation Sans',sans-serif;color:#073642;white-space:pre;">AI</div><div style="position:absolute;left:117px;top:1321.9px;font:400 23.7px/27.2px 'Liberation Sans',sans-serif;color:#586e75;white-space:pre;">Console</div><div style="position:absolute;left:0px;top:1375px;width:3456.0px;height:394.0px;background:#eee8d5;"></div><div style="position:absolute;left:3341.6px;top:1389.8px;font:400 26.2px/30.1px 'Liberation Sans',sans-serif;color:#93a1a1;white-space:pre;">+ New</div><div style="position:absolute;left:0;top:1436px;width:3456px;height:333px;overflow:hidden"><div style="position:absolute;left:33.5px;top:-300px;width:2881px;height:605.7px;box-sizing:border-box;background:#fdf6e3;border:2px solid #93a1a1;border-radius:15px"></div><div style="position:absolute;left:58.6px;top:-28.5px;font:400 28.85px/40.2px 'Liberation Mono',monospace;color:#586e75;white-space:pre;-webkit-text-stroke:0.4px currentColor">                                    g</div><div style="position:absolute;left:58.6px;top:11.7px;font:400 28.85px/40.2px 'Liberation Mono',monospace;color:#586e75;white-space:pre;-webkit-text-stroke:0.4px currentColor"></div><div style="position:absolute;left:58.6px;top:51.9px;font:400 28.85px/40.2px 'Liberation Mono',monospace;color:#586e75;white-space:pre;-webkit-text-stroke:0.4px currentColor">4. **Fit Ring Visualization**: A gold/yellow translucent ring showing the pot&#x27;s outer diameter (104mm) for reference</div><div style="position:absolute;left:58.6px;top:92.1px;font:400 28.85px/40.2px 'Liberation Mono',monospace;color:#586e75;white-space:pre;-webkit-text-stroke:0.4px currentColor"></div><div style="position:absolute;left:58.6px;top:132.3px;font:400 28.85px/40.2px 'Liberation Mono',monospace;color:#586e75;white-space:pre;-webkit-text-stroke:0.4px currentColor">The design is currently shown with all features enabled except the pour notch (which is disabled). The model uses a &quot;flush&quot; design where the inner wall rises</div><div style="position:absolute;left:58.6px;top:172.5px;font:400 28.85px/40.2px 'Liberation Mono',monospace;color:#586e75;white-space:pre;-webkit-text-stroke:0.4px currentColor">directly from the floor surface, and the drain ring sits on top of the floor to create drainage space.</div><div style="position:absolute;left:58.6px;top:212.7px;font:400 28.85px/40.2px 'Liberation Mono',monospace;color:#586e75;white-space:pre;-webkit-text-stroke:0.4px currentColor"></div><div style="position:absolute;left:58.6px;top:252.9px;font:400 28.85px/40.2px 'Liberation Mono',monospace;color:#586e75;white-space:pre;-webkit-text-stroke:0.4px currentColor">This is a practical 3D printable design for catching water drainage from potted plants!</div></div><div style="position:absolute;left:0px;top:1769px;width:3456.0px;height:161.0px;background:#fdf6e3;"></div><div style="position:absolute;left:25px;top:1792px;width:3279.0px;height:112.0px;background:#eee8d5;border-radius:10px"></div><div style="position:absolute;left:49.2px;top:1812.1px;font:400 28px/32.2px 'Liberation Sans',sans-serif;color:#93a0ad;white-space:pre;">Describe the changes you want to make...</div><div style="position:absolute;left:3344.3px;top:1831.8px;font:400 26.5px/30.4px 'Liberation Sans',sans-serif;color:#93a1a1;white-space:pre;">Send</div><div style="position:absolute;left:0px;top:1930px;width:3456.0px;height:65.0px;background:#fdf6e3;"></div><div style="position:absolute;left:0px;top:1929px;width:3456.0px;height:2.0px;background:#e7e0cc;"></div><div style="position:absolute;left:35.7px;top:1948.4px;font:400 25px/28.7px 'Liberation Sans',sans-serif;color:#93a1a1;white-space:pre;">↵ to submit • ⇧↵ for newline • <b style="font-weight:700">Esc</b> to cancel • ⌘K to focus prompt</div><div style="position:absolute;left:3092.6px;top:1948.9px;font:700 23.6px/27.1px 'Liberation Sans',sans-serif;color:#657b83;white-space:pre;">Claude Sonnet 4.5</div><svg width="3456" height="1995" viewBox="0 0 3456 1995" style="position:absolute;left:0;top:0;overflow:visible"><path d="M3405.7 1958.5L3417.7 1958.5L3411.7 1964.5Z" fill="#a9a9a9"/></svg><div style="position:absolute;left:0px;top:20px;width:1.0px;height:1955.0px;background:#fefcf5;"></div></div><div class="win dark" style="clip-path:polygon(2885.5px 0,3456px 0,3456px 1995px,657px 1995px)"><div style="position:absolute;left:0px;top:0px;width:3456.0px;height:53.0px;background:#282933;"></div><div style="position:absolute;left:0px;top:0px;width:3456.0px;height:2.0px;background:#282933;"></div><svg width="3456" height="1995" viewBox="0 0 3456 1995" style="position:absolute;left:0;top:0;overflow:visible"><circle cx="28.9" cy="27.7" r="12.2" fill="#ed6a5e"/><circle cx="68.8" cy="27.7" r="12.2" fill="#f4bf4f"/><circle cx="108.8" cy="27.7" r="12.2" fill="#61c554"/></svg><div style="position:absolute;left:0;width:3456px;top:12.7px;text-align:center;font:700 26.8px/30.8px 'Liberation Sans',sans-serif;color:#b2b2b6">main.scad - OpenSCAD Studio</div><div style="position:absolute;left:0px;top:53px;width:3456.0px;height:104.0px;background:#173541;"></div><div style="position:absolute;left:0px;top:63.3px;width:239.7px;height:87.7px;background:#0e2833;"></div><div style="position:absolute;left:0px;top:147px;width:238.0px;height:4.0px;background:#4a8ad2;"></div><div style="position:absolute;left:33.3px;top:92.3px;font:400 25.5px/29.3px 'Liberation Sans',sans-serif;color:#93a1a1;white-space:pre;">main.scad</div><div style="position:absolute;left:271.9px;top:92.3px;font:400 25.5px/29.3px 'Liberation Sans',sans-serif;color:#93a1a1;white-space:pre;">main.scad</div><svg width="3456" height="1995" viewBox="0 0 3456 1995" style="position:absolute;left:0;top:0;overflow:visible"><path d="M176.5 99.8L194 117M194 99.8L176.5 117" stroke="#657b83" stroke-width="2.2"/><path d="M508.29999999999995 111H529.3M518.8 100.5V121.5" stroke="#657b83" stroke-width="2"/></svg><div style="position:absolute;left:2806.2px;top:73.2px;width:114.2px;height:59.2px;background:transparent;box-sizing:border-box;border:1.6px solid #6a7e84;border-radius:9px"></div><svg width="3456" height="1995" viewBox="0 0 3456 1995" style="position:absolute;left:0;top:0;overflow:visible"><path d="M2842.0 91.5L2852.3 97.2L2852.3 108.8L2842.0 114.5L2831.7 108.8L2831.7 97.2ZM2831.7 97.2L2842.0 103.0L2852.3 97.2M2842.0 103.0L2842.0 114.5" fill="none" stroke="#a5b2b2" stroke-width="1.8" stroke-linejoin="round"/></svg><div style="position:absolute;left:2868.8px;top:89.1px;font:400 24.4px/28.0px 'Liberation Sans',sans-serif;color:#a5b2b2;white-space:pre;">3D</div><div style="position:absolute;left:2937.2px;top:83.3px;width:2.0px;height:39.4px;background:#6a7e84;"></div><div style="position:absolute;left:2955.2px;top:71.2px;width:216.8px;height:63.6px;background:#4a89d0;border-radius:9px"></div><div style="position:absolute;left:2980px;top:86.3px;font:700 26.8px/30.8px 'Liberation Sans',sans-serif;color:#fdf6e3;white-space:pre;">Render (⌘↵)</div><div style="position:absolute;left:3213.5px;top:85.7px;font:400 27.5px/31.6px 'Liberation Sans',sans-serif;color:#a5b2b2;white-space:pre;">Export</div><div style="position:absolute;left:3338px;top:83px;width:2.0px;height:39.6px;background:#6a7e84;"></div><svg width="3456" height="1995" viewBox="0 0 3456 1995" style="position:absolute;left:0;top:0;overflow:visible"><path d="M3403.60 103.00L3403.57 103.53L3403.47 104.06L3403.31 104.57L3403.08 105.07L3402.79 105.54L3402.43 105.98L3402.00 106.38L3401.49 106.73L3400.87 107.01L3399.79 107.06L3400.52 107.85L3400.77 108.49L3400.88 109.09L3400.90 109.68L3400.84 110.24L3400.71 110.78L3400.52 111.30L3400.27 111.77L3399.97 112.22L3399.62 112.62L3399.22 112.97L3398.77 113.27L3398.30 113.52L3397.78 113.71L3397.24 113.84L3396.68 113.90L3396.09 113.88L3395.49 113.77L3394.85 113.52L3394.06 112.79L3394.01 113.87L3393.73 114.49L3393.38 115.00L3392.98 115.43L3392.54 115.79L3392.07 116.08L3391.57 116.31L3391.06 116.47L3390.53 116.57L3390.00 116.60L3389.47 116.57L3388.94 116.47L3388.43 116.31L3387.93 116.08L3387.46 115.79L3387.02 115.43L3386.62 115.00L3386.27 114.49L3385.99 113.87L3385.94 112.79L3385.15 113.52L3384.51 113.77L3383.91 113.88L3383.32 113.90L3382.76 113.84L3382.22 113.71L3381.70 113.52L3381.23 113.27L3380.78 112.97L3380.38 112.62L3380.03 112.22L3379.73 111.77L3379.48 111.30L3379.29 110.78L3379.16 110.24L3379.10 109.68L3379.12 109.09L3379.23 108.49L3379.48 107.85L3380.21 107.06L3379.13 107.01L3378.51 106.73L3378.00 106.38L3377.57 105.98L3377.21 105.54L3376.92 105.07L3376.69 104.57L3376.53 104.06L3376.43 103.53L3376.40 103.00L3376.43 102.47L3376.53 101.94L3376.69 101.43L3376.92 100.93L3377.21 100.46L3377.57 100.02L3378.00 99.62L3378.51 99.27L3379.13 98.99L3380.21 98.94L3379.48 98.15L3379.23 97.51L3379.12 96.91L3379.10 96.32L3379.16 95.76L3379.29 95.22L3379.48 94.70L3379.73 94.23L3380.03 93.78L3380.38 93.38L3380.78 93.03L3381.23 92.73L3381.70 92.48L3382.22 92.29L3382.76 92.16L3383.32 92.10L3383.91 92.12L3384.51 92.23L3385.15 92.48L3385.94 93.21L3385.99 92.13L3386.27 91.51L3386.62 91.00L3387.02 90.57L3387.46 90.21L3387.93 89.92L3388.43 89.69L3388.94 89.53L3389.47 89.43L3390.00 89.40L3390.53 89.43L3391.06 89.53L3391.57 89.69L3392.07 89.92L3392.54 90.21L3392.98 90.57L3393.38 91.00L3393.73 91.51L3394.01 92.13L3394.06 93.21L3394.85 92.48L3395.49 92.23L3396.09 92.12L3396.68 92.10L3397.24 92.16L3397.78 92.29L3398.30 92.48L3398.77 92.73L3399.22 93.03L3399.62 93.38L3399.97 93.78L3400.27 94.23L3400.52 94.70L3400.71 95.22L3400.84 95.76L3400.90 96.32L3400.88 96.91L3400.77 97.51L3400.52 98.15L3399.79 98.94L3400.87 98.99L3401.49 99.27L3402.00 99.62L3402.43 100.02L3402.79 100.46L3403.08 100.93L3403.31 101.43L3403.47 101.94L3403.57 102.47Z" fill="none" stroke="#a5b2b2" stroke-width="2.6" stroke-linejoin="round"/><circle cx="3390" cy="103" r="4.5" fill="none" stroke="#a5b2b2" stroke-width="2.8"/></svg><div style="position:absolute;left:0px;top:157px;width:1724.0px;height:1131.0px;background:#0e2833;"></div><div style="position:absolute;left:0;top:157px;width:1721px;height:1129px;overflow:hidden"><div style="position:absolute;left:0;top:-157px;width:1696px;height:1995px"><div style="position:absolute;left:137.3px;top:143px;width:2px;height:294px;background:#24404a"></div><div style="position:absolute;left:204.8px;top:185px;width:2px;height:210px;background:#24404a"></div><div style="position:absolute;left:272.2px;top:269px;width:2px;height:84px;background:#24404a"></div><div style="position:absolute;left:137.3px;top:605px;width:2px;height:336px;background:#24404a"></div><div style="position:absolute;left:204.8px;top:647px;width:2px;height:252px;background:#24404a"></div><div style="position:absolute;left:272.2px;top:689px;width:2px;height:126px;background:#24404a"></div><div style="position:absolute;left:137.3px;top:1109px;width:2px;height:210px;background:#24404a"></div><div style="position:absolute;left:204.8px;top:1151px;width:2px;height:168px;background:#24404a"></div><div style="position:absolute;left:272.2px;top:1193px;width:2px;height:84px;background:#24404a"></div><div class="ln" style="top:269px">132</div><div class="cl" style="top:269px">            <i class="fn">cylinder</i><i class="b0">(</i><i class="id">h</i> <i class="op">=</i> <i class="num">0.8</i><i class="op">,</i> <i class="id">r</i> <i class="op">=</i> <i class="id">r_pot</i> <i class="op">+</i> <i class="num">0.01</i><i class="b0">)</i><i class="op">;</i></div><div class="ln" style="top:311px">133</div><div class="cl" style="top:311px">            <i class="fn">cylinder</i><i class="b0">(</i><i class="id">h</i> <i class="op">=</i> <i class="num">0.8</i><i class="op">,</i> <i class="id">r</i> <i class="op">=</i> <i class="id">r_pot</i> <i class="op">-</i> <i class="num">0.4</i><i class="b0">)</i><i class="op">;</i></div><div class="ln" style="top:353px">134</div><div class="cl" style="top:353px">        <i class="b2">}</i></div><div class="ln" style="top:395px">135</div><div class="cl" style="top:395px">    <i class="b1">}</i></div><div class="ln" style="top:437px">136</div><div class="cl" style="top:437px"><i class="b0">}</i></div><div class="ln" style="top:479px">137</div><div class="cl" style="top:479px"></div><div class="ln" style="top:521px">138</div><div class="cl" style="top:521px"><i class="com">// ------------------------------- ASSEMBLY ------------------------------------</i></div><div class="ln" style="top:563px">139</div><div class="cl" style="top:563px"><i class="kw">module</i> <i class="id">saucer_assembly</i><i class="b0">(</i><i class="b0">)</i> <i class="b0">{</i></div><div class="ln" style="top:605px">140</div><div class="cl" style="top:605px">    <i class="fn">difference</i><i class="b1">(</i><i class="b1">)</i> <i class="b1">{</i></div><div class="ln" style="top:647px">141</div><div class="cl" style="top:647px">        <i class="fn">union</i><i class="b2">(</i><i class="b2">)</i> <i class="b2">{</i></div><div class="ln" style="top:689px">142</div><div class="cl" style="top:689px">            <i class="id">section_cut</i><i class="b0">(</i><i class="b0">)</i> <i class="b0">{</i> <i class="id">saucer_body</i><i class="b1">(</i><i class="b1">)</i><i class="op">;</i> <i class="b0">}</i></div><div class="ln" style="top:731px">143</div><div class="cl" style="top:731px">            <i class="id">anti_sit_ring</i><i class="b0">(</i><i class="b0">)</i><i class="op">;</i>   <i class="com">// inboard ridge visible from top</i></div><div class="ln" style="top:773px">144</div><div class="cl" style="top:773px">            <i class="com">// flat base — no feet</i></div><div class="ln" style="top:815px">145</div><div class="cl" style="top:815px">        <i class="b2">}</i></div><div class="ln" style="top:857px">146</div><div class="cl" style="top:857px">        <i class="id">pour_notch_cut</i><i class="b2">(</i><i class="b2">)</i><i class="op">;</i></div><div class="ln" style="top:899px">147</div><div class="cl" style="top:899px">    <i class="b1">}</i></div><div class="ln" style="top:941px">148</div><div class="cl" style="top:941px"><i class="b0">}</i></div><div class="ln" style="top:983px">149</div><div class="cl" style="top:983px"></div><div class="ln" style="top:1025px">150</div><div class="cl" style="top:1025px"><i class="com">// Preview slice for fast fit tests</i></div><div class="ln" style="top:1067px">151</div><div class="cl" style="top:1067px"><i class="kw">module</i> <i class="id">slice_wrapper</i><i class="b0">(</i><i class="b0">)</i> <i class="b0">{</i></div><div class="ln" style="top:1109px">152</div><div class="cl" style="top:1109px">    <i class="kw">if</i> <i class="b1">(</i><i class="id">preview_slice_only</i><i class="b1">)</i> <i class="b1">{</i></div><div class="ln" style="top:1151px">153</div><div class="cl" style="top:1151px">        <i class="fn">intersection</i><i class="b2">(</i><i class="b2">)</i> <i class="b2">{</i></div><div class="ln" style="top:1193px">154</div><div class="cl" style="top:1193px">            <i class="id">saucer_assembly</i><i class="b0">(</i><i class="b0">)</i><i class="op">;</i></div><div class="ln" style="top:1235px">155</div><div class="cl" style="top:1235px">            <i class="fn">translate</i><i class="b0">(</i><i class="b1">[</i> <i class="op">-</i> <i class="num">1000</i><i class="op">,</i> <i class="op">-</i> <i class="num">1000</i><i class="op">,</i> <i class="num">0</i><i class="b1">]</i><i class="b0">)</i> <i class="fn">cube</i><i class="b0">(</i><i class="b1">[</i><i class="num">2000</i><i class="op">,</i> <i class="num">2000</i><i class="op">,</i> <i class="id">preview_slice_h</i><i class="b1">]</i><i class="op">,</i> <i class="id">center</i> <i class="op">=</i> <i class="cst">false</i><i class="b0">)</i><i class="op">;</i></div><div class="ln" style="top:1277px">156</div><div class="cl" style="top:1277px">        <i class="b2">}</i></div><div style="position:absolute;left:0;top:160px;width:1696px;height:126px;background:#0e2833;box-shadow:0 5px 5px -3px rgba(0,0,0,0.4)"></div><div class="ln" style="top:160px">128</div><div class="cl" style="top:160px"><i class="kw">module</i> <i class="id">fit_ring_vis</i><i class="b0">(</i><i class="b0">)</i> <i class="b0">{</i></div><div class="ln" style="top:202px">129</div><div class="cl" style="top:202px">    <i class="kw">if</i> <i class="b1">(</i><i class="id">show_fit_ring</i><i class="b1">)</i> <i class="b1">{</i></div><div class="ln" style="top:244px">131</div><div class="cl" style="top:244px">        <i class="fn">difference</i><i class="b2">(</i><i class="b2">)</i> <i class="b2">{</i></div></div></div><div style="position:absolute;left:1695.8px;top:157px;width:1.4px;height:1129.0px;background:#1d3b46;"></div><div style="position:absolute;left:1697px;top:1270.5px;width:27.0px;height:3.1px;background:#657b83;"></div><div style="position:absolute;left:1724px;top:157px;width:8.0px;height:1131.0px;background:#173541;"></div><div style="position:absolute;left:1732px;top:157px;width:1724.0px;height:1130.0px;background:#0e2833;"></div><svg class="grid" width="1724" height="1128" viewBox="1732 157 1724 1128" style="position:absolute;left:1732px;top:157px"><path d="M6721.1 1173.6L7542.4 1364.7M-1537.2 1192.2L-2360.2 1387.2M6863.5 1244.2L7758.1 1458.2M-1679.9 1263.5L-2576.4 1481.8M6402.0 1208.8L7200.0 1411.0M7200.0 1411.0L8281.5 1685.1M-1217.6 1226.0L-2017.1 1432.1M-2017.1 1432.1L-3101.0 1711.4M6530.8 1283.4L7400.7 1510.5M7400.7 1510.5L8603.2 1824.6M-1346.6 1301.2L-2218.2 1532.6M-2218.2 1532.6L-3423.6 1852.5M5964.1 1175.3L6674.6 1366.6M6674.6 1366.6L7628.9 1623.7M7628.9 1623.7L8978.3 1987.2M-779.0 1190.5L-1490.7 1385.2M-1490.7 1385.2L-2446.9 1646.9M-2446.9 1646.9L-3799.7 2017.1M6065.7 1246.0L6836.3 1460.3M6836.3 1460.3L7890.7 1753.5M7890.7 1753.5L9421.2 2179.1M-880.8 1261.7L-1652.7 1479.7M-1652.7 1479.7L-2709.3 1778.1M-2709.3 1778.1L-4243.9 2211.4M5625.1 1210.6L6305.9 1413.1M6305.9 1413.1L7228.7 1687.5M7228.7 1687.5L8550.1 2080.5M8550.1 2080.5L10599.8 2690.1M-439.5 1224.3L-1121.4 1430.0M-1121.4 1430.0L-2045.9 1708.9M-2045.9 1708.9L-3370.5 2108.6M-3370.5 2108.6L-5426.4 2728.9M5710.8 1285.2L6449.2 1512.7M6449.2 1512.7L7470.0 1827.2M7470.0 1827.2L8973.5 2290.4M8973.5 2290.4L11408.1 3040.5M-525.4 1299.4L-1264.9 1530.4M-1264.9 1530.4L-2287.7 1849.9M-2287.7 1849.9L-3794.9 2320.7M-3794.9 2320.7L-6237.8 3083.9M5206.9 1177.0L5806.6 1368.6M5806.6 1368.6L6612.1 1626.0M6612.1 1626.0L7751.2 1990.0M7751.2 1990.0L9485.2 2544.2M9485.2 2544.2L12445.2 3490.1M-20.8 1188.8L-621.4 1383.2M-621.4 1383.2L-1428.1 1644.5M-1428.1 1644.5L-2569.6 2014.2M-2569.6 2014.2L-4308.2 2577.3M-4308.2 2577.3L-7279.1 3539.5M5267.8 1247.8L5914.3 1462.4M5914.3 1462.4L6799.0 1756.0M6799.0 1756.0L8083.2 2182.3M8083.2 2182.3L10116.5 2857.2M10116.5 2857.2L12026.4 3491.2M-81.8 1259.9L-729.2 1477.6M-729.2 1477.6L-1615.4 1775.5M-1615.4 1775.5L-2902.4 2208.3M-2902.4 2208.3L-4941.5 2893.9M-4941.5 2893.9L-6858.5 3538.5M4848.0 1212.3L5411.7 1415.1M5411.7 1415.1L6175.7 1689.9M6175.7 1689.9L7269.8 2083.5M7269.8 2083.5L8967.0 2694.0M8967.0 2694.0L11188.7 3493.2M338.4 1222.5L-225.9 1428.0M-225.9 1428.0L-991.1 1706.5M-991.1 1706.5L-2087.2 2105.5M-2087.2 2105.5L-3788.5 2724.9M-3788.5 2724.9L-6017.6 3536.4M4890.7 1287.1L5497.5 1514.9M5497.5 1514.9L6336.4 1829.8M6336.4 1829.8L7572.0 2293.7M7572.0 2293.7L9573.1 3045.0M9573.1 3045.0L10769.8 3494.3M295.6 1297.5L-311.9 1528.2M-311.9 1528.2L-1152.0 1847.2M-1152.0 1847.2L-2390.1 2317.4M-2390.1 2317.4L-4396.5 3079.4M-4396.5 3079.4L-5597.2 3535.3M4449.6 1178.7L4938.5 1370.6M4938.5 1370.6L5595.1 1628.4M5595.1 1628.4L6523.7 1992.9M6523.7 1992.9L7937.4 2547.9M7937.4 2547.9L10350.8 3495.3M737.2 1187.0L247.8 1381.3M247.8 1381.3L-409.6 1642.2M-409.6 1642.2L-1339.7 2011.3M-1339.7 2011.3L-2756.4 2573.6M-2756.4 2573.6L-5176.8 3534.2M4469.7 1249.6L4992.2 1464.5M4992.2 1464.5L5707.1 1758.6M5707.1 1758.6L6744.9 2185.5M6744.9 2185.5L8388.1 2861.4M8388.1 2861.4L9931.8 3496.4M717.0 1258.1L194.0 1475.5M194.0 1475.5L-521.8 1773.0M-521.8 1773.0L-1561.3 2205.1M-1561.3 2205.1L-3208.2 2889.7M-3208.2 2889.7L-4756.4 3533.2M4070.8 1214.1L4517.3 1417.2M4517.3 1417.2L5122.5 1692.4M5122.5 1692.4L5989.1 2086.5M5989.1 2086.5L7333.6 2698.0M7333.6 2698.0L9093.8 3498.5M1116.2 1220.8L669.4 1425.9M669.4 1425.9L63.6 1704.1M63.6 1704.1L-804.3 2102.5M-804.3 2102.5L-2151.3 2720.9M-2151.3 2720.9L-3915.8 3531.1M4070.5 1288.9L4545.7 1517.1M4545.7 1517.1L5202.6 1832.5M5202.6 1832.5L6170.2 2297.1M6170.2 2297.1L7737.4 3049.5M7737.4 3049.5L8674.7 3499.5M1116.5 1295.6L641.0 1526.0M641.0 1526.0L-16.6 1844.6M-16.6 1844.6L-985.7 2314.1M-985.7 2314.1L-2556.0 3074.8M-2556.0 3074.8L-3495.6 3530.0M3692.2 1180.4L4070.2 1372.6M4070.2 1372.6L4577.9 1630.7M4577.9 1630.7L5295.9 1995.8M5295.9 1995.8L6389.1 2551.6M6389.1 2551.6L8255.5 3500.6M1495.0 1185.3L1116.8 1379.3M1116.8 1379.3L608.7 1639.9M608.7 1639.9L-110.2 2008.5M-110.2 2008.5L-1205.0 2569.9M-1205.0 2569.9L-3075.4 3529.0M3671.5 1251.4L4069.8 1466.6M4069.8 1466.6L4614.9 1761.1M4614.9 1761.1L5406.2 2188.6M5406.2 2188.6L6659.2 2865.6M6659.2 2865.6L7836.3 3501.6M1515.7 1256.3L1117.1 1473.4M1117.1 1473.4L571.6 1770.5M571.6 1770.5L-220.6 2201.9M-220.6 2201.9L-1475.6 2885.4M-1475.6 2885.4L-2655.3 3527.9M3293.5 1215.8L3622.7 1419.2M3622.7 1419.2L4069.0 1694.8M4069.0 1694.8L4708.1 2089.6M4708.1 2089.6L5699.7 2701.9M5699.7 2701.9L6997.9 3503.7M1893.9 1219.0L1564.5 1423.9M1564.5 1423.9L1118.0 1701.6M1118.0 1701.6L478.2 2099.5M478.2 2099.5L-514.6 2717.0M-514.6 2717.0L-1815.1 3525.8M3250.1 1290.8L3593.6 1519.3M3593.6 1519.3L4068.4 1835.1M4068.4 1835.1L4768.0 2300.4M4768.0 2300.4L5901.0 3054.1M5901.0 3054.1L6578.6 3504.8M1937.3 1293.8L1593.6 1523.8M1593.6 1523.8L1118.5 1842.0M1118.5 1842.0L418.3 2310.7M418.3 2310.7L-716.2 3070.3M-716.2 3070.3L-1395.0 3524.8M2934.7 1182.1L3201.8 1374.5M3201.8 1374.5L3560.5 1633.1M3560.5 1633.1L4067.8 1998.7M4067.8 1998.7L4840.3 2555.4M4840.3 2555.4L6159.3 3505.8M2252.8 1183.6L1985.6 1377.3M1985.6 1377.3L1626.7 1637.5M1626.7 1637.5L1119.0 2005.6M1119.0 2005.6L345.8 2566.2M345.8 2566.2L-975.0 3523.7M2873.2 1253.2L3147.3 1468.7M3147.3 1468.7L3522.5 1763.6M3522.5 1763.6L4067.1 2191.8M4067.1 2191.8L4929.6 2869.8M4929.6 2869.8L5739.9 3506.9M2314.3 1254.5L2040.1 1471.2M2040.1 1471.2L1664.7 1767.9M1664.7 1767.9L1119.7 2198.8M1119.7 2198.8L256.4 2881.2M256.4 2881.2L-555.1 3522.7M2516.0 1217.6L2728.0 1421.2M2728.0 1421.2L3015.3 1697.2M3015.3 1697.2L3426.7 2092.6M3426.7 2092.6L4065.1 2705.9M4065.1 2705.9L4901.1 3509.0M2671.5 1217.2L2459.5 1421.8M2459.5 1421.8L2172.1 1699.2M2172.1 1699.2L1760.4 2096.5M1760.4 2096.5L1121.6 2713.0M1121.6 2713.0L284.8 3520.6M2429.6 1292.7L2641.3 1521.4M2641.3 1521.4L2934.1 1837.7M2934.1 1837.7L3365.3 2303.7M3365.3 2303.7L4063.8 3058.6M4063.8 3058.6L4481.6 3510.1M2757.9 1291.9L2546.1 1521.7M2546.1 1521.7L2253.3 1839.3M2253.3 1839.3L1821.9 2307.4M1821.9 2307.4L1122.8 3065.8M1122.8 3065.8L704.6 3519.5M2177.0 1183.8L2333.1 1376.5M2333.1 1376.5L2542.8 1635.4M2542.8 1635.4L2839.4 2001.5M2839.4 2001.5L3291.0 2559.1M3291.0 2559.1L4062.1 3511.1M3010.4 1181.9L2854.3 1375.3M2854.3 1375.3L2644.6 1635.2M2644.6 1635.2L2347.9 2002.7M2347.9 2002.7L1896.1 2562.4M1896.1 2562.4L1124.4 3518.5M2074.7 1255.0L2224.6 1470.8M2224.6 1470.8L2429.8 1766.2M2429.8 1766.2L2727.6 2195.0M2727.6 2195.0L3199.3 2874.0M3199.3 2874.0L3642.5 3512.2M3112.7 1252.7L2962.8 1469.1M2962.8 1469.1L2757.6 1765.4M2757.6 1765.4L2459.7 2195.6M2459.7 2195.6L1987.7 2877.0M1987.7 2877.0L1544.2 3517.4M1738.4 1219.4L1833.0 1423.3M1833.0 1423.3L1961.3 1699.7M1961.3 1699.7L2145.0 2095.6M2145.0 2095.6L2430.1 2709.9M2430.1 2709.9L2803.3 3514.3M3448.9 1215.5L3354.3 1419.8M3354.3 1419.8L3226.0 1696.8M3226.0 1696.8L3042.3 2093.5M3042.3 2093.5L2757.1 2709.1M2757.1 2709.1L2383.7 3515.3M1609.0 1294.5L1688.9 1523.6M1688.9 1523.6L1799.4 1840.4M1799.4 1840.4L1962.2 2307.1M1962.2 2307.1L2225.9 3063.1M2225.9 3063.1L2383.7 3515.3M3578.3 1290.1L3498.4 1519.5M3498.4 1519.5L3387.8 1836.7M3387.8 1836.7L3225.0 2304.1M3225.0 2304.1L2961.2 3061.3M2961.2 3061.3L2803.3 3514.3M1419.3 1185.5L1464.4 1378.5M1464.4 1378.5L1524.9 1637.7M1524.9 1637.7L1610.6 2004.4M1610.6 2004.4L1741.1 2562.8M1741.1 2562.8L1964.0 3516.4M3768.0 1180.2L3722.8 1373.4M3722.8 1373.4L3662.2 1632.8M3662.2 1632.8L3576.5 1999.8M3576.5 1999.8L3445.9 2558.7M3445.9 2558.7L3222.9 3513.2M1276.1 1256.8L1301.7 1472.9M1301.7 1472.9L1336.8 1768.7M1336.8 1768.7L1387.8 2198.1M1387.8 2198.1L1468.4 2878.3M1468.4 2878.3L1544.2 3517.4M3911.0 1250.9L3885.4 1467.0M3885.4 1467.0L3850.2 1762.9M3850.2 1762.9L3799.2 2192.4M3799.2 2192.4L3718.5 2872.8M3718.5 2872.8L3642.5 3512.2M960.7 1221.1L937.9 1425.3M937.9 1425.3L907.1 1702.1M907.1 1702.1L862.9 2098.6M862.9 2098.6L794.4 2713.8M794.4 2713.8L704.6 3519.5M4226.3 1213.7L4248.9 1417.8M4248.9 1417.8L4279.7 1694.3M4279.7 1694.3L4323.7 2090.5M4323.7 2090.5L4392.1 2705.1M4392.1 2705.1L4481.6 3510.1M788.2 1296.4L736.2 1525.8M736.2 1525.8L664.5 1843.0M664.5 1843.0L558.7 2310.4M558.7 2310.4L387.3 3067.6M387.3 3067.6L284.8 3520.6M4398.6 1288.2L4450.5 1517.3M4450.5 1517.3L4522.1 1834.1M4522.1 1834.1L4627.7 2300.7M4627.7 2300.7L4798.8 3056.8M4798.8 3056.8L4901.1 3509.0M661.4 1187.2L595.4 1380.5M595.4 1380.5L506.9 1640.1M506.9 1640.1L381.6 2007.3M381.6 2007.3L190.8 2566.5M190.8 2566.5L-135.1 3521.6M4525.4 1178.5L4591.2 1371.4M4591.2 1371.4L4679.6 1630.5M4679.6 1630.5L4804.7 1996.9M4804.7 1996.9L4995.2 2555.0M4995.2 2555.0L5320.5 3507.9" stroke="#081a22" stroke-opacity="0.85" stroke-width="1.2" fill="none"/><path d="M5466.6 829.2L5918.8 929.0M5918.8 929.0L6475.8 1051.9M6475.8 1051.9L7178.8 1207.1M-280.8 842.0L-733.6 943.8M-733.6 943.8L-1291.5 1069.3M-1291.5 1069.3L-1995.8 1227.8M5521.0 867.1L5998.7 975.3M5998.7 975.3L6592.5 1109.8M6592.5 1109.8L7350.6 1281.5M-335.2 880.1L-813.6 990.5M-813.6 990.5L-1408.4 1127.8M-1408.4 1127.8L-2167.9 1303.1M5579.8 908.0L6085.8 1025.7M6085.8 1025.7L6721.1 1173.6M-394.1 921.3L-900.9 1041.4M-900.9 1041.4L-1537.2 1192.2M5209.1 848.4L5643.6 952.4M5643.6 952.4L6181.2 1081.0M6181.2 1081.0L6863.5 1244.2M-22.9 860.0L-458.0 966.0M-458.0 966.0L-996.4 1097.1M-996.4 1097.1L-1679.9 1263.5M4908.9 830.5L5303.2 930.4M5303.2 930.4L5789.0 1053.5M5789.0 1053.5L6402.0 1208.8M277.6 840.7L-117.2 942.5M-117.2 942.5L-603.6 1067.8M-603.6 1067.8L-1217.6 1226.0M4941.5 868.3L5356.4 976.7M5356.4 976.7L5872.3 1111.4M5872.3 1111.4L6530.8 1283.4M244.9 878.8L-170.5 989.1M-170.5 989.1L-687.0 1126.2M-687.0 1126.2L-1346.6 1301.2M4976.7 909.3L5414.5 1027.2M5414.5 1027.2L5964.1 1175.3M209.7 919.9L-228.6 1039.9M-228.6 1039.9L-779.0 1190.5M4640.7 849.7L5014.9 953.8M5014.9 953.8L5478.0 1082.5M5478.0 1082.5L6065.7 1246.0M546.0 858.8L171.4 964.6M171.4 964.6L-292.3 1095.5M-292.3 1095.5L-880.8 1261.7M4351.2 831.7L4687.6 931.8M4687.6 931.8L5102.0 1055.0M5102.0 1055.0L5625.1 1210.6M835.8 839.5L499.0 941.1M499.0 941.1L84.2 1066.3M84.2 1066.3L-439.5 1224.3M4361.9 869.6L4714.1 978.1M4714.1 978.1L5151.9 1113.0M5151.9 1113.0L5710.8 1285.2M825.0 877.5L472.5 987.6M472.5 987.6L34.2 1124.5M34.2 1124.5L-525.4 1299.4M4373.6 910.7L4743.0 1028.7M4743.0 1028.7L5206.9 1177.0M813.3 918.6L443.5 1038.4M443.5 1038.4L-20.8 1188.8M4072.2 850.9L4386.2 955.2M4386.2 955.2L4774.7 1084.1M4774.7 1084.1L5267.8 1247.8M1115.0 857.5L800.7 963.2M800.7 963.2L411.8 1093.9M411.8 1093.9L-81.8 1259.9M3793.3 832.9L4071.9 933.1M4071.9 933.1L4415.0 1056.6M4415.0 1056.6L4848.0 1212.3M1394.0 838.3L1115.2 939.7M1115.2 939.7L771.9 1064.7M771.9 1064.7L338.4 1222.5M3782.3 870.9L4071.7 979.6M4071.7 979.6L4431.4 1114.6M4431.4 1114.6L4890.7 1287.1M1405.0 876.2L1115.4 986.2M1115.4 986.2L755.4 1122.9M755.4 1122.9L295.6 1297.5M3770.3 912.0L4071.5 1030.2M4071.5 1030.2L4449.6 1178.7M1417.0 917.2L1115.6 1036.9M1115.6 1036.9L737.2 1187.0M3503.6 852.2L3757.4 956.6M3757.4 956.6L4071.3 1085.7M4071.3 1085.7L4469.7 1249.6M1683.8 856.2L1429.9 961.8M1429.9 961.8L1115.8 1092.3M1115.8 1092.3L717.0 1258.1M3235.5 834.2L3456.1 934.5M3456.1 934.5L3727.8 1058.1M3727.8 1058.1L4070.8 1214.1M1952.1 837.0L1731.4 938.3M1731.4 938.3L1459.5 1063.2M1459.5 1063.2L1116.2 1220.8M3202.6 872.2L3429.2 981.0M3429.2 981.0L3710.9 1116.3M3710.9 1116.3L4070.5 1288.9M1984.9 874.9L1758.2 984.7M1758.2 984.7L1476.4 1121.3M1476.4 1121.3L1116.5 1295.6M3167.0 913.3L3399.9 1031.7M3399.9 1031.7L3692.2 1180.4M2020.5 915.9L1787.6 1035.3M1787.6 1035.3L1495.0 1185.3M2935.0 853.5L3128.4 958.0M3128.4 958.0L3367.8 1087.3M3367.8 1087.3L3671.5 1251.4M2252.6 855.0L2059.1 960.4M2059.1 960.4L1819.6 1090.8M1819.6 1090.8L1515.7 1256.3M2677.5 835.4L2840.2 935.9M2840.2 935.9L3040.5 1059.6M3040.5 1059.6L3293.5 1215.8M2510.1 835.8L2347.4 937.0M2347.4 937.0L2147.0 1061.6M2147.0 1061.6L1893.9 1219.0M2622.8 873.5L2786.6 982.4M2786.6 982.4L2990.2 1117.9M2990.2 1117.9L3250.1 1290.8M2564.8 873.6L2401.0 983.3M2401.0 983.3L2197.3 1119.7M2197.3 1119.7L1937.3 1293.8M2563.6 914.7L2728.1 1033.2M2728.1 1033.2L2934.7 1182.1M2624.0 914.6L2459.4 1033.8M2459.4 1033.8L2252.8 1183.6M2366.3 854.7L2499.4 959.4M2499.4 959.4L2664.1 1088.9M2664.1 1088.9L2873.2 1253.2M2821.3 853.7L2688.1 959.0M2688.1 959.0L2523.4 1089.2M2523.4 1089.2L2314.3 1254.5M2119.5 836.6L2224.2 937.3M2224.2 937.3L2353.2 1061.2M2353.2 1061.2L2516.0 1217.6M3068.1 834.5L2963.4 935.6M2963.4 935.6L2834.4 1060.1M2834.4 1060.1L2671.5 1217.2M2042.9 874.8L2143.9 983.9M2143.9 983.9L2269.4 1119.5M2269.4 1119.5L2429.6 1292.7M3144.6 872.3L3043.6 981.9M3043.6 981.9L2918.1 1118.0M2918.1 1118.0L2757.9 1291.9M1960.2 916.0L2056.3 1034.7M2056.3 1034.7L2177.0 1183.8M3227.3 913.2L3131.2 1032.3M3131.2 1032.3L3010.4 1181.9M1797.6 856.0L1870.3 960.8M1870.3 960.8L1960.4 1090.4M1960.4 1090.4L2074.7 1255.0M3389.9 852.4L3317.1 957.5M3317.1 957.5L3227.1 1087.6M3227.1 1087.6L3112.7 1252.7M1561.4 837.9L1608.1 938.6M1608.1 938.6L1665.7 1062.7M1665.7 1062.7L1738.4 1219.4M3626.0 833.3L3579.2 934.2M3579.2 934.2L3521.6 1058.6M3521.6 1058.6L3448.9 1215.5M1463.0 876.1L1501.1 985.3M1501.1 985.3L1548.5 1121.1M1548.5 1121.1L1609.0 1294.5M3724.3 871.1L3686.2 980.4M3686.2 980.4L3638.8 1116.4M3638.8 1116.4L3578.3 1290.1M1356.6 917.4L1384.4 1036.3M1384.4 1036.3L1419.3 1185.5M3830.7 911.9L3802.9 1030.8M3802.9 1030.8L3768.0 1180.2M1228.7 857.2L1241.2 962.2M1241.2 962.2L1256.6 1092.0M1256.6 1092.0L1276.1 1256.8M3958.5 851.2L3946.0 956.1M3946.0 956.1L3930.6 1086.0M3930.6 1086.0L3911.0 1250.9M1003.2 839.1L992.0 940.0M992.0 940.0L978.2 1064.3M978.2 1064.3L960.7 1221.1M4183.8 832.1L4195.0 932.9M4195.0 932.9L4208.8 1057.0M4208.8 1057.0L4226.3 1213.7M883.0 877.4L858.3 986.8M858.3 986.8L827.5 1122.7M827.5 1122.7L788.2 1296.4M4304.0 869.8L4328.7 979.0M4328.7 979.0L4359.4 1114.8M4359.4 1114.8L4398.6 1288.2M753.0 918.7L712.4 1037.8M712.4 1037.8L661.4 1187.2M4433.9 910.5L4474.4 1029.3M4474.4 1029.3L4525.4 1178.5" stroke="#081a22" stroke-opacity="0.76" stroke-width="1.2" fill="none"/><path d="M4777.0 677.0L5092.1 746.6M5092.1 746.6L5466.6 829.2M409.7 686.7L94.2 757.6M94.2 757.6L-280.8 842.0M4521.1 640.6L4799.9 703.7M4799.9 703.7L5128.3 778.1M5128.3 778.1L5521.0 867.1M665.7 649.0L386.7 713.4M386.7 713.4L57.9 789.3M57.9 789.3L-335.2 880.1M4535.0 664.8L4824.4 732.2M4824.4 732.2L5167.2 812.0M5167.2 812.0L5579.8 908.0M651.8 673.4L362.2 742.0M362.2 742.0L19.0 823.4M19.0 823.4L-394.1 921.3M4293.8 629.4L4549.8 690.7M4549.8 690.7L4850.6 762.7M4850.6 762.7L5209.1 848.4M893.3 636.9L637.0 699.3M637.0 699.3L335.9 772.6M335.9 772.6L-22.9 860.0M4307.6 678.1L4582.4 747.7M4582.4 747.7L4908.9 830.5M879.5 685.6L604.4 756.5M604.4 756.5L277.6 840.7M4073.0 641.5L4315.1 704.8M4315.1 704.8L4600.4 779.3M4600.4 779.3L4941.5 868.3M1114.2 648.0L871.9 712.4M871.9 712.4L586.3 788.2M586.3 788.2L244.9 878.8M4072.9 665.9L4323.2 733.3M4323.2 733.3L4619.8 813.2M4619.8 813.2L4976.7 909.3M1114.3 672.4L863.8 740.9M863.8 740.9L566.9 822.2M566.9 822.2L209.7 919.9M3852.3 630.4L4072.8 691.7M4072.8 691.7L4331.9 763.8M4331.9 763.8L4640.7 849.7M1335.0 635.9L1114.4 698.3M1114.4 698.3L855.1 771.5M855.1 771.5L546.0 858.8M3838.1 679.1L4072.6 748.8M4072.6 748.8L4351.2 831.7M1349.2 684.6L1114.6 755.4M1114.6 755.4L835.8 839.5M3624.8 642.5L3830.3 705.9M3830.3 705.9L4072.4 780.5M4072.4 780.5L4361.9 869.6M1562.6 647.1L1357.0 711.3M1357.0 711.3L1114.7 787.0M1114.7 787.0L825.0 877.5M3610.7 666.9L3822.0 734.4M3822.0 734.4L4072.3 814.4M4072.3 814.4L4373.6 910.7M1576.7 671.4L1365.3 739.8M1365.3 739.8L1114.8 820.9M1114.8 820.9L813.3 918.6M3410.8 631.4L3595.7 692.8M3595.7 692.8L3813.1 764.9M3813.1 764.9L4072.2 850.9M1776.8 635.0L1591.7 697.2M1591.7 697.2L1374.2 770.3M1374.2 770.3L1115.0 857.5M3368.6 680.1L3562.7 750.0M3562.7 750.0L3793.3 832.9M1818.9 683.6L1624.7 754.3M1624.7 754.3L1394.0 838.3M3176.6 643.5L3345.5 706.9M3345.5 706.9L3544.4 781.6M3544.4 781.6L3782.3 870.9M2011.0 646.1L1842.1 710.2M1842.1 710.2L1643.0 785.8M1643.0 785.8L1405.0 876.2M3148.5 667.9L3320.7 735.5M3320.7 735.5L3524.8 815.6M3524.8 815.6L3770.3 912.0M2039.1 670.3L1866.8 738.7M1866.8 738.7L1662.6 819.7M1662.6 819.7L1417.0 917.2M2969.2 632.4L3118.7 693.8M3118.7 693.8L3294.3 766.1M3294.3 766.1L3503.6 852.2M2218.4 634.0L2068.9 696.2M2068.9 696.2L1893.2 769.2M1893.2 769.2L1683.8 856.2M2899.1 681.2L3052.8 751.1M3052.8 751.1L3235.5 834.2M2288.6 682.5L2134.8 753.1M2134.8 753.1L1952.1 837.0M2728.3 644.5L2860.5 708.0M2860.5 708.0L3016.3 782.8M3016.3 782.8L3202.6 872.2M2459.3 645.1L2327.1 709.2M2327.1 709.2L2171.3 784.7M2171.3 784.7L1984.9 874.9M2686.3 668.9L2819.4 736.6M2819.4 736.6L2977.2 816.8M2977.2 816.8L3167.0 913.3M2501.4 669.3L2368.2 737.6M2368.2 737.6L2210.4 818.5M2210.4 818.5L2020.5 915.9M2527.6 633.3L2641.5 694.9M2641.5 694.9L2775.4 767.2M2775.4 767.2L2935.0 853.5M2660.1 633.0L2546.1 695.1M2546.1 695.1L2412.2 768.0M2412.2 768.0L2252.6 855.0M2429.5 682.2L2542.8 752.2M2542.8 752.2L2677.5 835.4M2758.2 681.5L2644.8 752.0M2644.8 752.0L2510.1 835.8M2280.0 645.5L2375.6 709.1M2375.6 709.1L2488.2 784.0M2488.2 784.0L2622.8 873.5M2907.6 644.1L2812.0 708.1M2812.0 708.1L2699.4 783.5M2699.4 783.5L2564.8 873.6M2224.0 669.9L2318.1 737.7M2318.1 737.7L2429.5 818.0M2429.5 818.0L2563.6 914.7M2963.6 668.3L2869.6 736.5M2869.6 736.5L2758.1 817.3M2758.1 817.3L2624.0 914.6M2085.9 634.3L2164.4 695.9M2164.4 695.9L2256.5 768.4M2256.5 768.4L2366.3 854.7M3101.7 632.1L3023.2 694.1M3023.2 694.1L2931.1 766.9M2931.1 766.9L2821.3 853.7M1959.8 683.2L2032.8 753.4M2032.8 753.4L2119.5 836.6M3227.7 680.5L3154.8 750.9M3154.8 750.9L3068.1 834.5M1831.7 646.5L1890.6 710.1M1890.6 710.1L1960.0 785.1M1960.0 785.1L2042.9 874.8M3355.9 643.1L3297.0 707.0M3297.0 707.0L3227.6 782.3M3227.6 782.3L3144.6 872.3M1761.6 670.9L1816.6 738.8M1816.6 738.8L1881.8 819.2M1881.8 819.2L1960.2 916.0M3425.9 667.3L3370.9 735.4M3370.9 735.4L3305.7 816.1M3305.7 816.1L3227.3 913.2M1644.2 635.3L1687.1 697.0M1687.1 697.0L1737.5 769.5M1737.5 769.5L1797.6 856.0M3543.2 631.1L3500.3 693.0M3500.3 693.0L3450.0 765.7M3450.0 765.7L3389.9 852.4M1490.1 684.3L1522.7 754.5M1522.7 754.5L1561.4 837.9M3697.3 679.4L3664.7 749.7M3664.7 749.7L3626.0 833.3M1383.3 647.5L1405.5 711.2M1405.5 711.2L1431.7 786.3M1431.7 786.3L1463.0 876.1M3804.1 642.1L3781.8 706.0M3781.8 706.0L3755.6 781.2M3755.6 781.2L3724.3 871.1M1299.3 672.0L1315.1 739.9M1315.1 739.9L1334.0 820.5M1334.0 820.5L1356.6 917.4M3888.0 666.3L3872.1 734.3M3872.1 734.3L3853.3 814.9M3853.3 814.9L3830.7 911.9M1202.5 636.2L1209.8 698.0M1209.8 698.0L1218.5 770.7M1218.5 770.7L1228.7 857.2M3984.7 630.1L3977.4 692.0M3977.4 692.0L3968.8 764.6M3968.8 764.6L3958.5 851.2M1020.4 685.3L1012.6 755.6M1012.6 755.6L1003.2 839.1M4166.7 678.4L4174.5 748.6M4174.5 748.6L4183.8 832.1M934.8 648.4L920.4 712.3M920.4 712.3L903.4 787.5M903.4 787.5L883.0 877.4M4252.2 641.2L4266.7 704.9M4266.7 704.9L4283.6 780.0M4283.6 780.0L4304.0 869.8M836.8 673.0L813.6 741.0M813.6 741.0L786.1 821.7M786.1 821.7L753.0 918.7M4350.2 665.3L4373.3 733.2M4373.3 733.2L4400.8 813.7M4400.8 813.7L4433.9 910.5" stroke="#081a22" stroke-opacity="0.68" stroke-width="1.2" fill="none"/><path d="M4073.4 521.8L4275.9 566.5M4275.9 566.5L4508.0 617.7M4508.0 617.7L4777.0 677.0M1113.8 528.3L911.2 573.8M911.2 573.8L678.8 626.1M678.8 626.1L409.7 686.7M3890.9 497.8L4073.4 539.1M4073.4 539.1L4281.5 586.3M4281.5 586.3L4521.1 640.6M1296.4 503.5L1113.8 545.6M1113.8 545.6L905.5 593.7M905.5 593.7L665.7 649.0M3886.2 513.9L4073.3 557.4M4073.3 557.4L4287.5 607.2M4287.5 607.2L4535.0 664.8M1301.1 519.5L1113.9 563.9M1113.9 563.9L899.6 614.7M899.6 614.7L651.8 673.4M3881.3 530.8L4073.2 576.7M4073.2 576.7L4293.8 629.4M1306.0 536.4L1114.0 583.2M1114.0 583.2L893.3 636.9M3694.1 522.6L3870.6 567.4M3870.6 567.4L4073.1 618.7M4073.1 618.7L4307.6 678.1M1493.3 527.4L1316.7 573.0M1316.7 573.0L1114.1 625.2M1114.1 625.2L879.5 685.6M3525.5 498.6L3684.1 540.0M3684.1 540.0L3864.9 587.2M3864.9 587.2L4073.0 641.5M1661.9 502.7L1503.4 544.8M1503.4 544.8L1322.5 592.8M1322.5 592.8L1114.2 648.0M3511.6 514.7L3673.5 558.3M3673.5 558.3L3858.7 608.2M3858.7 608.2L4072.9 665.9M1675.9 518.7L1513.9 563.0M1513.9 563.0L1328.6 613.7M1328.6 613.7L1114.3 672.4M3497.0 531.6L3662.3 577.6M3662.3 577.6L3852.3 630.4M1690.5 535.6L1525.1 582.3M1525.1 582.3L1335.0 635.9M3314.7 523.5L3465.3 568.3M3465.3 568.3L3638.0 619.6M3638.0 619.6L3838.1 679.1M1872.8 526.6L1722.2 572.1M1722.2 572.1L1549.4 624.2M1549.4 624.2L1349.2 684.6M3160.2 499.4L3294.7 540.8M3294.7 540.8L3448.2 588.1M3448.2 588.1L3624.8 642.5M2027.4 501.9L1892.8 543.9M1892.8 543.9L1739.3 591.9M1739.3 591.9L1562.6 647.1M3137.0 515.5L3273.6 559.2M3273.6 559.2L3430.0 609.1M3430.0 609.1L3610.7 666.9M2050.6 517.9L1913.9 562.1M1913.9 562.1L1757.5 612.8M1757.5 612.8L1576.7 671.4M3112.7 532.5L3251.4 578.5M3251.4 578.5L3410.8 631.4M2074.9 534.7L1936.2 581.4M1936.2 581.4L1776.8 635.0M2935.3 524.3L3060.0 569.1M3060.0 569.1L3203.0 620.6M3203.0 620.6L3368.6 680.1M2252.3 525.8L2127.6 571.2M2127.6 571.2L1984.6 623.2M1984.6 623.2L1818.9 683.6M2794.8 500.2L2905.4 541.7M2905.4 541.7L3031.4 589.0M3031.4 589.0L3176.6 643.5M2392.9 501.1L2282.3 543.1M2282.3 543.1L2156.2 590.9M2156.2 590.9L2011.0 646.1M2762.4 516.3L2873.8 560.0M2873.8 560.0L3001.2 610.1M3001.2 610.1L3148.5 667.9M2425.2 517.1L2313.9 561.3M2313.9 561.3L2186.4 611.9M2186.4 611.9L2039.1 670.3M2728.4 533.3L2840.4 579.4M2840.4 579.4L2969.2 632.4M2459.3 533.9L2347.2 580.5M2347.2 580.5L2218.4 634.0M2555.9 525.1L2654.6 570.0M2654.6 570.0L2767.9 621.5M2767.9 621.5L2899.1 681.2M2631.8 524.9L2533.0 570.3M2533.0 570.3L2419.8 622.3M2419.8 622.3L2288.6 682.5M2429.4 501.0L2516.0 542.5M2516.0 542.5L2614.7 589.9M2614.7 589.9L2728.3 644.5M2758.3 500.3L2671.7 542.2M2671.7 542.2L2573.0 590.0M2573.0 590.0L2459.3 645.1M2387.8 517.1L2473.9 560.9M2473.9 560.9L2572.4 611.0M2572.4 611.0L2686.3 668.9M2799.9 516.2L2713.8 560.4M2713.8 560.4L2615.3 610.9M2615.3 610.9L2501.4 669.3M2344.0 534.1L2429.4 580.3M2429.4 580.3L2527.6 633.3M2843.7 533.0L2758.2 579.6M2758.2 579.6L2660.1 633.0M2176.4 525.9L2249.2 570.9M2249.2 570.9L2332.7 622.5M2332.7 622.5L2429.5 682.2M3011.2 524.1L2938.4 569.4M2938.4 569.4L2854.9 621.3M2854.9 621.3L2758.2 681.5M2064.0 501.8L2126.5 543.4M2126.5 543.4L2197.9 590.9M2197.9 590.9L2280.0 645.5M3123.7 499.5L3061.1 541.3M3061.1 541.3L2989.8 589.1M2989.8 589.1L2907.6 644.1M2013.1 518.0L2073.9 561.8M2073.9 561.8L2143.5 611.9M2143.5 611.9L2224.0 669.9M3174.5 515.4L3113.7 559.5M3113.7 559.5L3044.1 610.0M3044.1 610.0L2963.6 668.3M1959.6 535.0L2018.4 581.2M2018.4 581.2L2085.9 634.3M3228.0 532.2L3169.2 578.7M3169.2 578.7L3101.7 632.1M1796.9 526.8L1843.8 571.8M1843.8 571.8L1897.6 623.4M1897.6 623.4L1959.8 683.2M3390.6 523.3L3343.7 568.5M3343.7 568.5L3290.0 620.4M3290.0 620.4L3227.7 680.5M1698.5 502.6L1737.1 544.2M1737.1 544.2L1781.0 591.8M1781.0 591.8L1831.7 646.5M3489.0 498.7L3450.5 540.5M3450.5 540.5L3406.5 588.2M3406.5 588.2L3355.9 643.1M1638.4 518.8L1673.9 562.7M1673.9 562.7L1714.6 612.9M1714.6 612.9L1761.6 670.9M3549.1 514.6L3513.6 558.6M3513.6 558.6L3472.9 609.0M3472.9 609.0L3425.9 667.3M1575.2 535.8L1607.3 582.1M1607.3 582.1L1644.2 635.3M3612.3 531.4L3580.1 577.8M3580.1 577.8L3543.2 631.1M1417.4 527.6L1438.3 572.7M1438.3 572.7L1462.3 624.4M1462.3 624.4L1490.1 684.3M3770.0 522.5L3749.0 567.6M3749.0 567.6L3725.0 619.4M3725.0 619.4L3697.3 679.4M1333.0 503.4L1347.6 545.1M1347.6 545.1L1364.2 592.7M1364.2 592.7L1383.3 647.5M3854.3 497.9L3839.8 539.6M3839.8 539.6L3823.2 587.3M3823.2 587.3L3804.1 642.1M1263.7 519.6L1273.9 563.5M1273.9 563.5L1285.7 613.8M1285.7 613.8L1299.3 672.0M3923.6 513.8L3913.4 557.8M3913.4 557.8L3901.6 608.1M3901.6 608.1L3888.0 666.3M1190.7 536.7L1196.2 583.0M1196.2 583.0L1202.5 636.2M3996.5 530.5L3991.0 576.9M3991.0 576.9L3984.7 630.1M1037.9 528.4L1032.8 573.6M1032.8 573.6L1027.1 625.3M1027.1 625.3L1020.4 685.3M4149.3 521.6L4154.3 566.7M4154.3 566.7L4160.1 618.5M4160.1 618.5L4166.7 678.4M958.0 545.9L947.2 593.6M947.2 593.6L934.8 648.4M4229.1 538.8L4239.8 586.4M4239.8 586.4L4252.2 641.2M873.9 564.4L856.7 614.8M856.7 614.8L836.8 673.0M4313.2 556.9L4330.3 607.1M4330.3 607.1L4350.2 665.3" stroke="#081a22" stroke-opacity="0.59" stroke-width="1.2" fill="none"/><path d="M3596.5 416.6L3737.4 447.7M3737.4 447.7L3895.3 482.5M3895.3 482.5L4073.4 521.8M1591.0 420.9L1450.0 452.6M1450.0 452.6L1292.0 488.2M1292.0 488.2L1113.8 528.3M3585.9 428.7L3729.6 461.3M3729.6 461.3L3890.9 497.8M1601.5 433.0L1457.9 466.2M1457.9 466.2L1296.4 503.5M3444.1 411.0L3575.0 441.4M3575.0 441.4L3721.3 475.5M3721.3 475.5L3886.2 513.9M1743.4 414.7L1612.5 445.7M1612.5 445.7L1466.1 480.4M1466.1 480.4L1301.1 519.5M3430.4 422.9L3563.5 454.7M3563.5 454.7L3712.7 490.4M3712.7 490.4L3881.3 530.8M1757.1 426.6L1624.0 459.0M1624.0 459.0L1474.7 495.3M1474.7 495.3L1306.0 536.4M3278.2 417.2L3401.1 448.4M3401.1 448.4L3538.8 483.3M3538.8 483.3L3694.1 522.6M1909.4 420.2L1786.4 451.9M1786.4 451.9L1648.7 487.4M1648.7 487.4L1493.3 527.4M3260.7 429.4L3385.4 462.0M3385.4 462.0L3525.5 498.6M1926.9 432.3L1802.1 465.5M1802.1 465.5L1661.9 502.7M3129.2 411.7L3242.4 442.2M3242.4 442.2L3369.0 476.3M3369.0 476.3L3511.6 514.7M2058.4 414.0L1945.2 445.0M1945.2 445.0L1818.5 479.7M1818.5 479.7L1675.9 518.7M3108.7 423.6L3223.3 455.5M3223.3 455.5L3351.8 491.2M3351.8 491.2L3497.0 531.6M2079.0 425.9L1964.3 458.2M1964.3 458.2L1835.8 494.5M1835.8 494.5L1690.5 535.6M2959.9 417.9L3064.8 449.1M3064.8 449.1L3182.2 484.1M3182.2 484.1L3314.7 523.5M2227.8 419.5L2122.9 451.2M2122.9 451.2L2005.4 486.6M2005.4 486.6L1872.8 526.6M2935.4 430.1L3041.3 462.8M3041.3 462.8L3160.2 499.4M2252.3 431.6L2146.4 464.7M2146.4 464.7L2027.4 501.9M2814.3 412.4L2909.8 442.9M2909.8 442.9L3016.7 477.0M3016.7 477.0L3137.0 515.5M2373.4 413.3L2277.9 444.3M2277.9 444.3L2171.0 478.9M2171.0 478.9L2050.6 517.9M2786.9 424.3L2883.0 456.2M2883.0 456.2L2990.9 492.0M2990.9 492.0L3112.7 532.5M2400.8 425.2L2304.6 457.5M2304.6 457.5L2196.8 493.8M2196.8 493.8L2074.9 534.7M2641.6 418.6L2728.4 449.8M2728.4 449.8L2825.6 484.8M2825.6 484.8L2935.3 524.3M2546.1 418.8L2459.3 450.4M2459.3 450.4L2362.0 485.8M2362.0 485.8L2252.3 525.8M2610.1 430.8L2697.1 463.5M2697.1 463.5L2794.8 500.2M2577.6 430.9L2490.6 464.0M2490.6 464.0L2392.9 501.1M2499.4 413.1L2577.2 443.6M2577.2 443.6L2664.3 477.8M2664.3 477.8L2762.4 516.3M2688.3 412.6L2610.5 443.5M2610.5 443.5L2523.4 478.1M2523.4 478.1L2425.2 517.1M2465.1 425.0L2542.8 457.0M2542.8 457.0L2629.9 492.8M2629.9 492.8L2728.4 533.3M2722.6 424.5L2644.9 456.7M2644.9 456.7L2557.7 493.0M2557.7 493.0L2459.3 533.9M2323.3 419.3L2392.0 450.6M2392.0 450.6L2469.0 485.6M2469.0 485.6L2555.9 525.1M2864.4 418.1L2795.7 449.7M2795.7 449.7L2718.7 485.1M2718.7 485.1L2631.8 524.9M2284.8 431.6L2352.9 464.3M2352.9 464.3L2429.4 501.0M2902.9 430.2L2834.8 463.2M2834.8 463.2L2758.3 500.3M2184.4 413.7L2244.6 444.3M2244.6 444.3L2311.9 478.6M2311.9 478.6L2387.8 517.1M3003.3 412.0L2943.1 442.8M2943.1 442.8L2875.7 477.3M2875.7 477.3L2799.9 516.2M2143.3 425.7L2202.5 457.7M2202.5 457.7L2269.0 493.6M2269.0 493.6L2344.0 534.1M3044.3 423.8L2985.1 456.0M2985.1 456.0L2918.7 492.2M2918.7 492.2L2843.7 533.0M2004.9 420.0L2055.6 451.3M2055.6 451.3L2112.4 486.4M2112.4 486.4L2176.4 525.9M3182.7 417.4L3132.0 449.0M3132.0 449.0L3075.3 484.3M3075.3 484.3L3011.2 524.1M1959.4 432.3L2008.7 465.0M2008.7 465.0L2064.0 501.8M3228.2 429.5L3178.9 462.5M3178.9 462.5L3123.7 499.5M1869.4 414.4L1911.9 445.1M1911.9 445.1L1959.5 479.3M1959.5 479.3L2013.1 518.0M3318.2 411.3L3275.7 442.1M3275.7 442.1L3228.1 476.6M3228.1 476.6L3174.5 515.4M1821.5 426.4L1862.3 458.5M1862.3 458.5L1908.0 494.4M1908.0 494.4L1959.6 535.0M3366.1 423.1L3325.3 455.3M3325.3 455.3L3279.6 491.4M3279.6 491.4L3228.0 532.2M1686.5 420.7L1719.2 452.0M1719.2 452.0L1755.7 487.2M1755.7 487.2L1796.9 526.8M3501.0 416.8L3468.4 448.2M3468.4 448.2L3431.8 483.5M3431.8 483.5L3390.6 523.3M1634.1 433.0L1664.4 465.8M1664.4 465.8L1698.5 502.6M3553.4 428.8L3523.1 461.7M3523.1 461.7L3489.0 498.7M1554.4 415.1L1579.3 445.8M1579.3 445.8L1607.1 480.1M1607.1 480.1L1638.4 518.8M3633.1 410.6L3608.2 441.4M3608.2 441.4L3580.4 475.8M3580.4 475.8L3549.1 514.6M1499.7 427.1L1521.9 459.2M1521.9 459.2L1546.9 495.2M1546.9 495.2L1575.2 535.8M3687.8 422.4L3665.5 454.5M3665.5 454.5L3640.5 490.6M3640.5 490.6L3612.3 531.4M1382.7 452.8L1399.0 487.9M1399.0 487.9L1417.4 527.6M3804.7 447.5L3788.4 482.7M3788.4 482.7L3770.0 522.5M1320.1 466.5L1333.0 503.4M3867.2 461.0L3854.3 497.9M1254.6 480.9L1263.7 519.6M3932.7 475.0L3923.6 513.8M1185.9 496.0L1190.7 536.7M4001.4 489.8L3996.5 530.5" stroke="#081a22" stroke-opacity="0.51" stroke-width="1.2" fill="none"/><path d="M3251.8 340.5L3355.6 363.4M3355.6 363.4L3469.9 388.6M3469.9 388.6L3596.5 416.6M1935.8 343.3L1832.0 366.7M1832.0 366.7L1717.7 392.4M1717.7 392.4L1591.0 420.9M3236.3 349.5L3341.3 373.3M3341.3 373.3L3457.3 399.6M3457.3 399.6L3585.9 428.7M1951.3 352.3L1846.3 376.5M1846.3 376.5L1730.3 403.3M1730.3 403.3L1601.5 433.0M3220.2 358.9L3326.5 383.6M3326.5 383.6L3444.1 411.0M1967.5 361.6L1861.1 386.8M1861.1 386.8L1743.4 414.7M3105.8 345.3L3203.4 368.6M3203.4 368.6L3311.1 394.4M3311.1 394.4L3430.4 422.9M2081.9 347.5L1984.2 371.3M1984.2 371.3L1876.5 397.5M1876.5 397.5L1757.1 426.6M2977.7 341.1L3068.1 364.0M3068.1 364.0L3167.8 389.3M3167.8 389.3L3278.2 417.2M2210.0 342.8L2119.5 366.1M2119.5 366.1L2019.8 391.8M2019.8 391.8L1909.4 420.2M2957.0 350.1L3048.2 373.9M3048.2 373.9L3148.9 400.2M3148.9 400.2L3260.7 429.4M2230.7 351.7L2139.5 375.9M2139.5 375.9L2038.7 402.7M2038.7 402.7L1926.9 432.3M2935.5 359.5L3027.5 384.3M3027.5 384.3L3129.2 411.7M2252.2 361.0L2160.2 386.2M2160.2 386.2L2058.4 414.0M2829.1 345.9L2913.1 369.2M2913.1 369.2L3005.9 395.0M3005.9 395.0L3108.7 423.6M2358.6 346.9L2274.5 370.6M2274.5 370.6L2181.8 396.8M2181.8 396.8L2079.0 425.9M2703.5 341.7L2780.7 364.6M2780.7 364.6L2865.7 389.9M2865.7 389.9L2959.9 417.9M2484.2 342.2L2407.0 365.4M2407.0 365.4L2321.9 391.1M2321.9 391.1L2227.8 419.5M2677.7 350.7L2755.1 374.6M2755.1 374.6L2840.6 400.9M2840.6 400.9L2935.4 430.1M2510.1 351.1L2432.6 375.3M2432.6 375.3L2347.1 402.0M2347.1 402.0L2252.3 431.6M2650.8 360.1L2728.4 384.9M2728.4 384.9L2814.3 412.4M2536.9 360.4L2459.3 385.5M2459.3 385.5L2373.4 413.3M2552.3 346.5L2622.9 369.9M2622.9 369.9L2700.7 395.7M2700.7 395.7L2786.9 424.3M2635.4 346.3L2564.8 370.0M2564.8 370.0L2487.0 396.2M2487.0 396.2L2400.8 425.2M2429.4 342.3L2493.2 365.3M2493.2 365.3L2563.6 390.6M2563.6 390.6L2641.6 418.6M2758.4 341.6L2694.5 364.8M2694.5 364.8L2624.1 390.5M2624.1 390.5L2546.1 418.8M2398.3 351.3L2461.9 375.2M2461.9 375.2L2532.2 401.6M2532.2 401.6L2610.1 430.8M2789.4 350.5L2725.8 374.6M2725.8 374.6L2655.5 401.3M2655.5 401.3L2577.6 430.9M2366.1 360.7L2429.4 385.6M2429.4 385.6L2499.4 413.1M2821.6 359.7L2758.3 384.9M2758.3 384.9L2688.3 412.6M2275.6 347.1L2332.6 370.5M2332.6 370.5L2395.5 396.4M2395.5 396.4L2465.1 425.0M2912.1 345.7L2855.1 369.4M2855.1 369.4L2792.2 395.5M2792.2 395.5L2722.6 424.5M2155.2 342.9L2205.8 365.9M2205.8 365.9L2261.5 391.2M2261.5 391.2L2323.3 419.3M3032.5 341.0L2981.9 364.2M2981.9 364.2L2926.2 389.8M2926.2 389.8L2864.4 418.1M2119.0 351.9L2168.8 375.9M2168.8 375.9L2223.8 402.3M2223.8 402.3L2284.8 431.6M3068.7 349.9L3018.9 374.0M3018.9 374.0L2963.9 400.6M2963.9 400.6L2902.9 430.2M2081.4 361.3L2130.3 386.2M2130.3 386.2L2184.4 413.7M3106.3 359.1L3057.4 384.2M3057.4 384.2L3003.3 412.0M1998.9 347.7L2042.3 371.1M2042.3 371.1L2090.2 397.0M2090.2 397.0L2143.3 425.7M3188.8 345.1L3145.3 368.7M3145.3 368.7L3097.4 394.8M3097.4 394.8L3044.3 423.8M1881.0 343.5L1918.3 366.5M1918.3 366.5L1959.4 391.9M1959.4 391.9L2004.9 420.0M3306.6 340.4L3269.3 363.6M3269.3 363.6L3228.2 389.1M3228.2 389.1L3182.7 417.4M1839.6 352.5L1875.6 376.5M1875.6 376.5L1915.3 402.9M1915.3 402.9L1959.4 432.3M3348.0 349.3L3312.0 373.4M3312.0 373.4L3272.3 400.0M3272.3 400.0L3228.2 429.5M1796.6 362.0L1831.2 386.9M1831.2 386.9L1869.4 414.4M3390.9 358.5L3356.4 383.6M3356.4 383.6L3318.2 411.3M1752.0 371.8L1785.0 397.7M1785.0 397.7L1821.5 426.4M3435.6 368.1L3402.6 394.2M3402.6 394.2L3366.1 423.1M1657.2 392.5L1686.5 420.7M3530.3 388.5L3501.0 416.8M1606.9 403.6L1634.1 433.0M3580.6 399.3L3553.4 428.8" stroke="#081a22" stroke-opacity="0.42" stroke-width="1.2" fill="none"/><path d="M3070.7 300.5L3157.2 319.6M3157.2 319.6L3251.8 340.5M2117.0 302.6L2030.4 322.1M2030.4 322.1L1935.8 343.3M2973.2 289.9L3053.3 308.1M3053.3 308.1L3140.7 327.9M3140.7 327.9L3236.3 349.5M2214.5 291.6L2134.3 310.1M2134.3 310.1L2047.0 330.2M2047.0 330.2L1951.3 352.3M2954.7 297.1L3035.4 315.9M3035.4 315.9L3123.6 336.4M3123.6 336.4L3220.2 358.9M2233.0 298.7L2152.3 317.8M2152.3 317.8L2064.1 338.7M2064.1 338.7L1967.5 361.6M2935.5 304.5L3016.9 324.0M3016.9 324.0L3105.8 345.3M2252.2 306.0L2170.8 325.8M2170.8 325.8L2081.9 347.5M2819.7 301.1L2895.2 320.2M2895.2 320.2L2977.7 341.1M2368.0 302.0L2292.5 321.5M2292.5 321.5L2210.0 342.8M2728.5 290.4L2798.1 308.6M2798.1 308.6L2874.0 328.4M2874.0 328.4L2957.0 350.1M2459.3 291.0L2389.6 309.5M2389.6 309.5L2313.7 329.7M2313.7 329.7L2230.7 351.7M2705.8 297.6L2775.7 316.5M2775.7 316.5L2851.9 337.0M2851.9 337.0L2935.5 359.5M2481.9 298.1L2412.0 317.2M2412.0 317.2L2335.8 338.1M2335.8 338.1L2252.2 361.0M2682.4 305.1L2752.5 324.6M2752.5 324.6L2829.1 345.9M2505.3 305.5L2435.2 325.3M2435.2 325.3L2358.6 346.9M2568.8 301.6L2633.2 320.8M2633.2 320.8L2703.5 341.7M2619.0 301.5L2554.6 320.9M2554.6 320.9L2484.2 342.2M2483.7 291.0L2542.8 309.2M2542.8 309.2L2607.2 329.0M2607.2 329.0L2677.7 350.7M2704.0 290.5L2644.9 309.0M2644.9 309.0L2580.5 329.1M2580.5 329.1L2510.1 351.1M2457.0 298.2L2515.9 317.0M2515.9 317.0L2580.3 337.6M2580.3 337.6L2650.8 360.1M2730.7 297.6L2671.8 316.7M2671.8 316.7L2607.4 337.5M2607.4 337.5L2536.9 360.4M2429.3 305.6L2488.1 325.1M2488.1 325.1L2552.3 346.5M2758.4 304.9L2699.6 324.7M2699.6 324.7L2635.4 346.3M2317.8 302.1L2371.1 321.3M2371.1 321.3L2429.4 342.3M2869.9 301.0L2816.6 320.4M2816.6 320.4L2758.4 341.6M2239.0 291.5L2287.5 309.7M2287.5 309.7L2340.4 329.6M2340.4 329.6L2398.3 351.3M2948.7 290.0L2900.2 308.4M2900.2 308.4L2847.3 328.5M2847.3 328.5L2789.4 350.5M2208.1 298.7L2256.2 317.6M2256.2 317.6L2308.6 338.2M2308.6 338.2L2366.1 360.7M2979.6 297.1L2931.5 316.1M2931.5 316.1L2879.1 336.9M2879.1 336.9L2821.6 359.7M2176.2 306.2L2223.7 325.7M2223.7 325.7L2275.6 347.1M3011.5 304.4L2964.0 324.1M2964.0 324.1L2912.1 345.7M2066.8 302.7L2109.0 321.9M2109.0 321.9L2155.2 342.9M3120.8 300.4L3078.6 319.8M3078.6 319.8L3032.5 341.0M2032.2 310.3L2073.6 330.2M2073.6 330.2L2119.0 351.9M3155.4 307.9L3114.0 327.9M3114.0 327.9L3068.7 349.9M1996.4 318.1L2036.9 338.8M2036.9 338.8L2081.4 361.3M3191.3 315.6L3150.7 336.3M3150.7 336.3L3106.3 359.1M1959.3 326.3L1998.9 347.7M3228.3 323.5L3188.8 345.1" stroke="#081a22" stroke-opacity="0.34" stroke-width="1.2" fill="none"/><path d="M2849.9 251.8L2917.8 266.8M2917.8 266.8L2991.1 283.0M2991.1 283.0L3070.7 300.5M2337.8 252.9L2269.9 268.2M2269.9 268.2L2196.6 284.7M2196.6 284.7L2117.0 302.6M2831.2 257.8L2899.4 273.2M2899.4 273.2L2973.2 289.9M2356.5 258.8L2288.3 274.5M2288.3 274.5L2214.5 291.6M2748.6 249.1L2812.0 263.9M2812.0 263.9L2880.4 279.8M2880.4 279.8L2954.7 297.1M2439.2 249.8L2375.8 264.8M2375.8 264.8L2307.3 281.1M2307.3 281.1L2233.0 298.7M2728.5 255.0L2792.1 270.2M2792.1 270.2L2860.9 286.7M2860.9 286.7L2935.5 304.5M2459.2 255.6L2395.7 271.1M2395.7 271.1L2326.8 287.8M2326.8 287.8L2252.2 306.0M2627.3 252.3L2686.4 267.3M2686.4 267.3L2750.4 283.5M2750.4 283.5L2819.7 301.1M2560.5 252.4L2501.3 267.7M2501.3 267.7L2437.4 284.2M2437.4 284.2L2368.0 302.0M2605.2 258.3L2664.4 273.7M2664.4 273.7L2728.5 290.4M2582.6 258.3L2523.4 274.0M2523.4 274.0L2459.3 291.0M2527.6 249.6L2582.4 264.4M2582.4 264.4L2641.6 280.3M2641.6 280.3L2705.8 297.6M2660.2 249.3L2605.3 264.3M2605.3 264.3L2546.1 280.6M2546.1 280.6L2481.9 298.1M2504.1 255.5L2558.9 270.7M2558.9 270.7L2618.1 287.2M2618.1 287.2L2682.4 305.1M2683.6 255.1L2628.8 270.6M2628.8 270.6L2569.6 287.3M2569.6 287.3L2505.3 305.5M2404.6 252.8L2455.0 267.8M2455.0 267.8L2509.6 284.0M2509.6 284.0L2568.8 301.6M2783.1 252.0L2732.7 267.2M2732.7 267.2L2678.1 283.6M2678.1 283.6L2619.0 301.5M2379.1 258.7L2429.3 274.2M2429.3 274.2L2483.7 291.0M2808.6 257.8L2758.4 273.5M2758.4 273.5L2704.0 290.5M2306.5 250.1L2352.8 264.9M2352.8 264.9L2402.8 280.9M2402.8 280.9L2457.0 298.2M2881.2 248.9L2834.9 263.8M2834.9 263.8L2784.9 280.0M2784.9 280.0L2730.7 297.6M2279.7 256.0L2325.7 271.2M2325.7 271.2L2375.4 287.7M2375.4 287.7L2429.3 305.6M2908.0 254.6L2862.0 270.1M2862.0 270.1L2812.3 286.8M2812.3 286.8L2758.4 304.9M2223.7 268.3L2268.8 284.5M2268.8 284.5L2317.8 302.1M2964.0 266.7L2918.9 283.1M2918.9 283.1L2869.9 301.0M2194.3 274.7L2239.0 291.5M2993.4 273.0L2948.7 290.0M2164.0 281.4L2208.1 298.7M3023.7 279.5L2979.6 297.1M2132.6 288.2L2176.2 306.2M3055.0 286.3L3011.5 304.4" stroke="#081a22" stroke-opacity="0.25" stroke-width="1.2" fill="none"/><path d="M2673.9 213.0L2728.5 225.0M2728.5 225.0L2787.0 237.9M2787.0 237.9L2849.9 251.8M2513.8 213.3L2459.2 225.6M2459.2 225.6L2400.7 238.8M2400.7 238.8L2337.8 252.9M2654.7 217.8L2709.4 230.2M2709.4 230.2L2768.1 243.5M2768.1 243.5L2831.2 257.8M2533.0 218.0L2478.3 230.7M2478.3 230.7L2419.6 244.2M2419.6 244.2L2356.5 258.8M2583.9 210.8L2635.0 222.7M2635.0 222.7L2689.8 235.5M2689.8 235.5L2748.6 249.1M2603.8 210.8L2552.7 222.9M2552.7 222.9L2498.0 235.9M2498.0 235.9L2439.2 249.8M2563.6 215.6L2614.7 227.8M2614.7 227.8L2669.5 240.9M2669.5 240.9L2728.5 255.0M2624.1 215.4L2573.0 227.9M2573.0 227.9L2518.2 241.2M2518.2 241.2L2459.2 255.6M2473.8 213.4L2521.4 225.5M2521.4 225.5L2572.4 238.4M2572.4 238.4L2627.3 252.3M2714.0 212.9L2666.4 225.2M2666.4 225.2L2615.3 238.3M2615.3 238.3L2560.5 252.4M2451.9 218.2L2499.3 230.6M2499.3 230.6L2550.3 243.9M2550.3 243.9L2605.2 258.3M2735.9 217.6L2688.4 230.2M2688.4 230.2L2637.4 243.7M2637.4 243.7L2582.6 258.3M2429.3 223.2L2476.7 235.9M2476.7 235.9L2527.6 249.6M2758.4 222.5L2711.1 235.4M2711.1 235.4L2660.2 249.3M2406.1 228.2L2453.3 241.4M2453.3 241.4L2504.1 255.5M2781.6 227.4L2734.4 240.8M2734.4 240.8L2683.6 255.1M2357.8 238.9L2404.6 252.8M2829.9 237.8L2783.1 252.0M2332.5 244.4L2379.1 258.7M2855.2 243.3L2808.6 257.8" stroke="#081a22" stroke-opacity="0.17" stroke-width="1.2" fill="none"/><path d="M2575.1 191.2L2622.9 201.7M2622.9 201.7L2673.9 213.0M2612.6 191.1L2564.8 201.8M2564.8 201.8L2513.8 213.3M2555.9 195.4L2603.7 206.2M2603.7 206.2L2654.7 217.8M2631.9 195.2L2584.1 206.3M2584.1 206.3L2533.0 218.0M2536.2 199.7L2583.9 210.8M2651.6 199.5L2603.8 210.8M2515.9 204.2L2563.6 215.6M2671.8 203.8L2624.1 215.4" stroke="#081a22" stroke-opacity="0.08" stroke-width="1.2" fill="none"/><path d="M6286.1 1141.7L7022.2 1322.9M7022.2 1322.9L8002.4 1564.1M-1101.5 1158.3L-1838.9 1343.0M-1838.9 1343.0L-2821.3 1589.0M5547.9 1143.4L6179.0 1324.8M6179.0 1324.8L7019.5 1566.4M7019.5 1566.4L8194.2 1904.0M8194.2 1904.0L9951.9 2409.2M-362.2 1156.7L-994.3 1341.1M-994.3 1341.1L-1836.3 1586.7M-1836.3 1586.7L-3013.6 1930.2M-3013.6 1930.2L-4776.3 2444.4M4809.5 1145.0L5335.7 1326.7M5335.7 1326.7L6036.3 1568.6M6036.3 1568.6L7015.7 1906.8M7015.7 1906.8L8481.2 2412.8M8481.2 2412.8L10914.5 3252.9M10914.5 3252.9L11607.6 3492.2M376.9 1155.0L-149.8 1339.1M-149.8 1339.1L-851.5 1584.4M-851.5 1584.4L-1832.5 1927.4M-1832.5 1927.4L-3301.4 2440.9M-3301.4 2440.9L-5742.3 3294.2M-5742.3 3294.2L-6438.0 3537.4M4071.1 1146.7L4492.2 1328.6M4492.2 1328.6L5053.0 1570.9M5053.0 1570.9L5836.9 1909.5M5836.9 1909.5L7010.0 2416.3M7010.0 2416.3L8957.9 3257.7M8957.9 3257.7L9512.8 3497.4M1116.0 1153.3L694.5 1337.2M694.5 1337.2L133.1 1582.2M133.1 1582.2L-651.8 1924.7M-651.8 1924.7L-1827.0 2437.4M-1827.0 2437.4L-3779.6 3289.3M-3779.6 3289.3L-4336.1 3532.1M3332.5 1148.4L3648.5 1330.5M3648.5 1330.5L4069.4 1573.1M4069.4 1573.1L4657.8 1912.3M4657.8 1912.3L5538.3 2419.8M5538.3 2419.8L7000.6 3262.6M7000.6 3262.6L7417.1 3502.7M1854.9 1151.7L1538.7 1335.3M1538.7 1335.3L1117.5 1579.9M1117.5 1579.9L528.6 1921.9M528.6 1921.9L-353.0 2433.9M-353.0 2433.9L-1817.7 3284.5M-1817.7 3284.5L-2235.1 3526.9M2593.8 1150.0L2804.7 1332.4M2804.7 1332.4L3085.7 1575.4M3085.7 1575.4L3478.4 1915.0M3478.4 1915.0L4066.2 2423.3M4066.2 2423.3L5042.4 3267.5M5042.4 3267.5L5320.5 3507.9M2593.8 1150.0L2382.8 1333.4M2382.8 1333.4L2101.7 1577.7M2101.7 1577.7L1708.8 1919.1M1708.8 1919.1L1120.6 2430.3M1120.6 2430.3L143.4 3279.6M143.4 3279.6L-135.1 3521.6M1854.9 1151.7L1960.8 1334.4M1960.8 1334.4L2101.7 1577.7M2101.7 1577.7L2298.7 1917.8M2298.7 1917.8L2593.6 2426.8M2593.6 2426.8L3083.4 3272.3M3083.4 3272.3L3222.9 3513.2M3332.5 1148.4L3226.6 1331.5M3226.6 1331.5L3085.7 1575.4M3085.7 1575.4L2888.6 1916.4M2888.6 1916.4L2593.6 2426.8M2593.6 2426.8L2103.6 3274.7M2103.6 3274.7L1964.0 3516.4M1116.0 1153.3L1116.7 1336.3M1116.7 1336.3L1117.5 1579.9M1117.5 1579.9L1118.7 1920.5M1118.7 1920.5L1120.6 2430.3M1120.6 2430.3L1123.6 3277.2M1123.6 3277.2L1124.4 3518.5M4071.1 1146.7L4070.4 1329.6M4070.4 1329.6L4069.4 1573.1M4069.4 1573.1L4068.1 1913.6M4068.1 1913.6L4066.2 2423.3M4066.2 2423.3L4063.0 3269.9M4063.0 3269.9L4062.1 3511.1" stroke="#3068d0" stroke-opacity="1.00" stroke-width="1.3" fill="none"/><path d="M5845.3 886.5L6369.5 999.2M6369.5 999.2L7024.2 1140.0M-660.0 900.9L-1185.0 1016.1M-1185.0 1016.1L-1840.9 1160.0M5254.3 887.8L5713.1 1000.7M5713.1 1000.7L6286.1 1141.7M-68.2 899.6L-527.6 1014.6M-527.6 1014.6L-1101.5 1158.3M4663.2 889.1L5056.5 1002.1M5056.5 1002.1L5547.9 1143.4M523.5 898.3L129.7 1013.2M129.7 1013.2L-362.2 1156.7M4072.0 890.4L4399.9 1003.6M4399.9 1003.6L4809.5 1145.0M1115.1 897.0L786.9 1011.7M786.9 1011.7L376.9 1155.0M3480.8 891.7L3743.2 1005.1M3743.2 1005.1L4071.1 1146.7M1706.6 895.7L1444.0 1010.2M1444.0 1010.2L1116.0 1153.3M2889.5 893.0L3086.4 1006.5M3086.4 1006.5L3332.5 1148.4M2298.1 894.3L2101.1 1008.8M2101.1 1008.8L1854.9 1151.7M2298.1 894.3L2429.6 1008.0M2429.6 1008.0L2593.8 1150.0M2889.5 893.0L2758.0 1007.3M2758.0 1007.3L2593.8 1150.0M1706.6 895.7L1772.6 1009.5M1772.6 1009.5L1854.9 1151.7M3480.8 891.7L3414.8 1005.8M3414.8 1005.8L3332.5 1148.4M1115.1 897.0L1115.5 1011.0M1115.5 1011.0L1116.0 1153.3M4072.0 890.4L4071.6 1004.3M4071.6 1004.3L4071.1 1146.7" stroke="#3068d0" stroke-opacity="0.92" stroke-width="1.3" fill="none"/><path d="M4755.4 652.0L5058.3 717.2M5058.3 717.2L5416.1 794.1M5416.1 794.1L5845.3 886.5M431.2 661.5L128.0 728.0M128.0 728.0L-230.2 806.6M-230.2 806.6L-660.0 900.9M4300.4 653.0L4565.5 718.3M4565.5 718.3L4878.7 795.3M4878.7 795.3L5254.3 887.8M886.6 660.5L621.3 727.0M621.3 727.0L307.8 805.4M307.8 805.4L-68.2 899.6M3845.4 654.0L4072.7 719.3M4072.7 719.3L4341.2 796.5M4341.2 796.5L4663.2 889.1M1341.9 659.5L1114.5 725.9M1114.5 725.9L845.8 804.3M845.8 804.3L523.5 898.3M3390.3 655.0L3579.8 720.4M3579.8 720.4L3803.6 797.7M3803.6 797.7L4072.0 890.4M1797.2 658.5L1607.6 724.8M1607.6 724.8L1383.7 803.1M1383.7 803.1L1115.1 897.0M2935.2 656.0L3086.8 721.5M3086.8 721.5L3265.9 798.9M3265.9 798.9L3480.8 891.7M2252.4 657.5L2100.8 723.7M2100.8 723.7L1921.6 801.9M1921.6 801.9L1706.6 895.7M2480.0 657.0L2593.8 722.6M2593.8 722.6L2728.2 800.1M2728.2 800.1L2889.5 893.0M2707.6 656.5L2593.8 722.6M2593.8 722.6L2459.4 800.7M2459.4 800.7L2298.1 894.3M2024.8 658.0L2100.8 723.7M2100.8 723.7L2190.5 801.3M2190.5 801.3L2298.1 894.3M3162.8 655.5L3086.8 721.5M3086.8 721.5L2997.1 799.5M2997.1 799.5L2889.5 893.0M1569.6 659.0L1607.6 724.8M1607.6 724.8L1652.6 802.5M1652.6 802.5L1706.6 895.7M3617.9 654.5L3579.8 720.4M3579.8 720.4L3534.8 798.3M3534.8 798.3L3480.8 891.7M1114.2 660.0L1114.5 725.9M1114.5 725.9L1114.8 803.7M1114.8 803.7L1115.1 897.0M4072.9 653.5L4072.7 719.3M4072.7 719.3L4072.4 797.1M4072.4 797.1L4072.0 890.4" stroke="#3068d0" stroke-opacity="0.83" stroke-width="1.3" fill="none"/><path d="M4073.5 505.3L4270.6 547.7M4270.6 547.7L4495.7 596.2M4495.7 596.2L4755.4 652.0M1113.7 511.8L916.5 555.1M916.5 555.1L691.2 604.5M691.2 604.5L431.2 661.5M3703.6 506.1L3876.1 548.6M3876.1 548.6L4073.1 597.1M4073.1 597.1L4300.4 653.0M1483.8 511.0L1311.2 554.2M1311.2 554.2L1114.0 603.6M1114.0 603.6L886.6 660.5M3333.7 506.9L3481.6 549.4M3481.6 549.4L3650.5 598.0M3650.5 598.0L3845.4 654.0M1853.8 510.2L1705.9 553.3M1705.9 553.3L1536.9 602.6M1536.9 602.6L1341.9 659.5M2963.8 507.8L3087.1 550.3M3087.1 550.3L3227.9 598.9M3227.9 598.9L3390.3 655.0M2223.9 509.4L2100.6 552.5M2100.6 552.5L1959.7 601.7M1959.7 601.7L1797.2 658.5M2593.8 508.6L2692.5 551.2M2692.5 551.2L2805.2 599.9M2805.2 599.9L2935.2 656.0M2593.8 508.6L2495.2 551.6M2495.2 551.6L2382.5 600.8M2382.5 600.8L2252.4 657.5M2223.9 509.4L2297.9 552.0M2297.9 552.0L2382.5 600.8M2382.5 600.8L2480.0 657.0M2963.8 507.8L2889.8 550.7M2889.8 550.7L2805.2 599.9M2805.2 599.9L2707.6 656.5M1853.8 510.2L1903.2 552.9M1903.2 552.9L1959.7 601.7M1959.7 601.7L2024.8 658.0M3333.7 506.9L3284.3 549.9M3284.3 549.9L3227.9 598.9M3227.9 598.9L3162.8 655.5M1483.8 511.0L1508.6 553.8M1508.6 553.8L1536.9 602.6M1536.9 602.6L1569.6 659.0M3703.6 506.1L3678.8 549.0M3678.8 549.0L3650.5 598.0M3650.5 598.0L3617.9 654.5M1113.7 511.8L1113.9 554.6M1113.9 554.6L1114.0 603.6M1114.0 603.6L1114.2 660.0M4073.5 505.3L4073.3 548.2M4073.3 548.2L4073.1 597.1M4073.1 597.1L4072.9 653.5" stroke="#3068d0" stroke-opacity="0.75" stroke-width="1.3" fill="none"/><path d="M3744.9 434.7L3899.6 467.9M3899.6 467.9L4073.5 505.3M1442.5 439.7L1287.8 473.6M1287.8 473.6L1113.7 511.8M3416.1 435.4L3551.4 468.7M3551.4 468.7L3703.6 506.1M1771.5 438.9L1636.1 472.8M1636.1 472.8L1483.8 511.0M3087.2 436.1L3203.2 469.4M3203.2 469.4L3333.7 506.9M2100.4 438.2L1984.4 472.1M1984.4 472.1L1853.8 510.2M2758.3 436.8L2855.0 470.2M2855.0 470.2L2963.8 507.8M2429.4 437.5L2332.7 471.3M2332.7 471.3L2223.9 509.4M2429.4 437.5L2506.8 471.0M2506.8 471.0L2593.8 508.6M2758.3 436.8L2680.9 470.6M2680.9 470.6L2593.8 508.6M2100.4 438.2L2158.5 471.7M2158.5 471.7L2223.9 509.4M3087.2 436.1L3029.1 469.8M3029.1 469.8L2963.8 507.8M1771.5 438.9L1810.2 472.5M1810.2 472.5L1853.8 510.2M3416.1 435.4L3377.3 469.1M3377.3 469.1L3333.7 506.9M1442.5 439.7L1461.9 473.2M1461.9 473.2L1483.8 511.0M3744.9 434.7L3725.5 468.3M3725.5 468.3L3703.6 506.1" stroke="#3068d0" stroke-opacity="0.67" stroke-width="1.3" fill="none"/><path d="M3369.3 353.8L3482.0 378.1M3482.0 378.1L3606.6 404.9M3606.6 404.9L3744.9 434.7M1818.3 357.2L1705.6 381.9M1705.6 381.9L1580.9 409.3M1580.9 409.3L1442.5 439.7M3087.3 354.5L3186.0 378.7M3186.0 378.7L3295.0 405.6M3295.0 405.6L3416.1 435.4M2100.3 356.6L2001.7 381.3M2001.7 381.3L1892.6 408.6M1892.6 408.6L1771.5 438.9M2805.3 355.1L2889.9 379.4M2889.9 379.4L2983.4 406.2M2983.4 406.2L3087.2 436.1M2382.4 356.0L2297.8 380.7M2297.8 380.7L2204.3 407.9M2204.3 407.9L2100.4 438.2M2523.4 355.7L2593.9 380.0M2593.9 380.0L2671.8 406.9M2671.8 406.9L2758.3 436.8M2664.4 355.4L2593.9 380.0M2593.9 380.0L2515.9 407.3M2515.9 407.3L2429.4 437.5M2241.4 356.3L2297.8 380.7M2297.8 380.7L2360.1 407.6M2360.1 407.6L2429.4 437.5M2946.3 354.8L2889.9 379.4M2889.9 379.4L2827.6 406.6M2827.6 406.6L2758.3 436.8M1959.3 356.9L2001.7 381.3M2001.7 381.3L2048.5 408.3M2048.5 408.3L2100.4 438.2M3228.3 354.2L3186.0 378.7M3186.0 378.7L3139.2 405.9M3139.2 405.9L3087.2 436.1M1705.6 381.9L1736.8 408.9M1736.8 408.9L1771.5 438.9M3482.0 378.1L3450.8 405.2M3450.8 405.2L3416.1 435.4" stroke="#3068d0" stroke-opacity="0.58" stroke-width="1.3" fill="none"/><path d="M3087.4 293.2L3173.2 311.7M3173.2 311.7L3266.8 331.8M3266.8 331.8L3369.3 353.8M2100.3 295.3L2014.5 314.2M2014.5 314.2L1920.8 334.7M1920.8 334.7L1818.3 357.2M2840.6 293.8L2915.7 312.2M2915.7 312.2L2997.6 332.4M2997.6 332.4L3087.3 354.5M2347.1 294.8L2272.0 313.6M2272.0 313.6L2190.1 334.1M2190.1 334.1L2100.3 356.6M2593.9 294.3L2658.2 312.8M2658.2 312.8L2728.5 333.0M2728.5 333.0L2805.3 355.1M2593.9 294.3L2529.5 313.1M2529.5 313.1L2459.3 333.6M2459.3 333.6L2382.4 356.0M2347.1 294.8L2400.7 313.3M2400.7 313.3L2459.3 333.6M2459.3 333.6L2523.4 355.7M2840.6 293.8L2787.0 312.5M2787.0 312.5L2728.5 333.0M2728.5 333.0L2664.4 355.4M2100.3 295.3L2143.2 313.9M2143.2 313.9L2190.1 334.1M2190.1 334.1L2241.4 356.3M3087.4 293.2L3044.5 312.0M3044.5 312.0L2997.6 332.4M2997.6 332.4L2946.3 354.8M1920.8 334.7L1959.3 356.9M3266.8 331.8L3228.3 354.2" stroke="#3068d0" stroke-opacity="0.50" stroke-width="1.3" fill="none"/><path d="M2868.1 246.0L2935.6 260.6M2935.6 260.6L3008.5 276.2M3008.5 276.2L3087.4 293.2M2319.6 247.2L2252.1 262.0M2252.1 262.0L2179.2 278.0M2179.2 278.0L2100.3 295.3M2648.7 246.5L2707.8 261.1M2707.8 261.1L2771.6 276.7M2771.6 276.7L2840.6 293.8M2539.0 246.8L2480.0 261.5M2480.0 261.5L2416.2 277.5M2416.2 277.5L2347.1 294.8M2429.3 247.0L2480.0 261.5M2480.0 261.5L2534.6 277.3M2534.6 277.3L2593.9 294.3M2758.4 246.3L2707.8 261.1M2707.8 261.1L2653.1 277.0M2653.1 277.0L2593.9 294.3M2252.1 262.0L2297.7 277.8M2297.7 277.8L2347.1 294.8M2935.6 260.6L2890.0 276.5M2890.0 276.5L2840.6 293.8" stroke="#3068d0" stroke-opacity="0.42" stroke-width="1.3" fill="none"/><path d="M2747.1 220.0L2805.4 232.6M2805.4 232.6L2868.1 246.0M2440.7 220.7L2382.3 233.5M2382.3 233.5L2319.6 247.2M2542.8 220.5L2593.9 233.0M2593.9 233.0L2648.7 246.5M2644.9 220.2L2593.9 233.0M2593.9 233.0L2539.0 246.8M2382.3 233.5L2429.3 247.0M2805.4 232.6L2758.4 246.3" stroke="#3068d0" stroke-opacity="0.33" stroke-width="1.3" fill="none"/><path d="M2593.9 187.1L2641.7 197.3M2641.7 197.3L2692.6 208.3M2692.6 208.3L2747.1 220.0M2593.9 187.1L2546.1 197.5M2546.1 197.5L2495.1 208.7M2495.1 208.7L2440.7 220.7M2495.1 208.7L2542.8 220.5M2692.6 208.3L2644.9 220.2" stroke="#3068d0" stroke-opacity="0.25" stroke-width="1.3" fill="none"/></svg><div style="position:absolute;left:3104.2px;top:173.5px;width:71.5px;height:71.0px;background:#173541;box-sizing:border-box;border:1.6px solid #6a7e84;border-radius:9px"></div><div style="position:absolute;left:3192.2px;top:173.5px;width:71.5px;height:71.0px;background:#173541;box-sizing:border-box;border:1.6px solid #6a7e84;border-radius:9px"></div><div style="position:absolute;left:3280.3px;top:173.5px;width:71.5px;height:71.0px;background:#173541;box-sizing:border-box;border:1.6px solid #6a7e84;border-radius:9px"></div><div style="position:absolute;left:3368.0px;top:173.5px;width:71.9px;height:71.0px;background:#5c6e74;border-radius:9px"></div><svg width="3456" height="1995" viewBox="0 0 3456 1995" style="position:absolute;left:0;top:0;overflow:visible"><circle cx="3139.95" cy="209.1" r="11.4" fill="none" stroke="#a5b2b2" stroke-width="2.4"/><circle cx="3139.95" cy="209.1" r="2.4" fill="#a5b2b2"/><path d="M3139.95 194.1V198.1M3139.95 220.1V224.1M3124.95 209.1H3128.95M3150.95 209.1H3154.95" stroke="#a5b2b2" stroke-width="2.4" stroke-linecap="round"/><path d="M3227.9 194.9L3240.7 202.0L3240.7 216.2L3227.9 223.3L3215.1 216.2L3215.1 202.0ZM3215.1 202.0L3227.9 209.1L3240.7 202.0M3227.9 209.1L3227.9 223.3" fill="none" stroke="#a5b2b2" stroke-width="2.5" stroke-linejoin="round"/><rect x="3303.0" y="196.29999999999998" width="25.4" height="25.6" rx="3.5" fill="none" stroke="#a5b2b2" stroke-width="2.4"/><rect x="3310.7999999999997" y="204.5" width="9.8" height="9.2" fill="none" stroke="#a5b2b2" stroke-width="2.4"/><path d="M3303.7 197.1L3310.7999999999997 204.5M3327.7 197.1L3320.6 204.5M3303.7 221.1L3310.7999999999997 213.7M3327.7 221.1L3320.6 213.7" stroke="#a5b2b2" stroke-width="2.2"/><circle cx="3403.8" cy="209.1" r="6.4" fill="none" stroke="#fdf6e3" stroke-width="2.6"/><path d="M3414.8 209.1L3418.3 209.1M3411.6 216.9L3414.1 219.4M3403.8 220.1L3403.8 223.6M3396.0 216.9L3393.5 219.4M3392.8 209.1L3389.3 209.1M3396.0 201.3L3393.5 198.8M3403.8 198.1L3403.8 194.6M3411.6 201.3L3414.1 198.8" stroke="#fdf6e3" stroke-width="2.8" stroke-linecap="round"/></svg><div style="position:absolute;left:0px;top:1285px;width:3456.0px;height:8.0px;background:#173541;"></div><div style="position:absolute;left:0px;top:1293px;width:3456.0px;height:79.5px;background:#0e2833;"></div><div style="position:absolute;left:25px;top:1311px;width:63.8px;height:47.8px;background:#586e75;border-radius:7px"></div><div style="position:absolute;left:45.6px;top:1322.0px;font:400 23.5px/27.0px 'Liberation Sans',sans-serif;color:#fdf6e3;white-space:pre;">AI</div><div style="position:absolute;left:117px;top:1321.9px;font:400 23.7px/27.2px 'Liberation Sans',sans-serif;color:#93a1a1;white-space:pre;">Console</div><div style="position:absolute;left:0px;top:1372.5px;width:3456.0px;height:394.0px;background:#173541;"></div><div style="position:absolute;left:3341.6px;top:1389.8px;font:400 26.2px/30.1px 'Liberation Sans',sans-serif;color:#93a1a1;white-space:pre;">+ New</div><div style="position:absolute;left:0;top:1433.8px;width:3456px;height:332.70000000000005px;overflow:hidden"><div style="position:absolute;left:33.5px;top:-300px;width:2881px;height:606.2px;box-sizing:border-box;background:#0e2833;border:2px solid #6b7f86;border-radius:15px"></div><div style="position:absolute;left:58.6px;top:-28.5px;font:400 28.85px/40.2px 'Liberation Mono',monospace;color:#93a1a1;white-space:pre;-webkit-text-stroke:0.4px currentColor">                                    g</div><div style="position:absolute;left:58.6px;top:11.7px;font:400 28.85px/40.2px 'Liberation Mono',monospace;color:#93a1a1;white-space:pre;-webkit-text-stroke:0.4px currentColor"></div><div style="position:absolute;left:58.6px;top:51.9px;font:400 28.85px/40.2px 'Liberation Mono',monospace;color:#93a1a1;white-space:pre;-webkit-text-stroke:0.4px currentColor">4. **Fit Ring Visualization**: A gold/yellow translucent ring showing the pot&#x27;s outer diameter (104mm) for reference</div><div style="position:absolute;left:58.6px;top:92.1px;font:400 28.85px/40.2px 'Liberation Mono',monospace;color:#93a1a1;white-space:pre;-webkit-text-stroke:0.4px currentColor"></div><div style="position:absolute;left:58.6px;top:132.3px;font:400 28.85px/40.2px 'Liberation Mono',monospace;color:#93a1a1;white-space:pre;-webkit-text-stroke:0.4px currentColor">The design is currently shown with all features enabled except the pour notch (which is disabled). The model uses a &quot;flush&quot; design where the inner wall rises</div><div style="position:absolute;left:58.6px;top:172.5px;font:400 28.85px/40.2px 'Liberation Mono',monospace;color:#93a1a1;white-space:pre;-webkit-text-stroke:0.4px currentColor">directly from the floor surface, and the drain ring sits on top of the floor to create drainage space.</div><div style="position:absolute;left:58.6px;top:212.7px;font:400 28.85px/40.2px 'Liberation Mono',monospace;color:#93a1a1;white-space:pre;-webkit-text-stroke:0.4px currentColor"></div><div style="position:absolute;left:58.6px;top:252.9px;font:400 28.85px/40.2px 'Liberation Mono',monospace;color:#93a1a1;white-space:pre;-webkit-text-stroke:0.4px currentColor">This is a practical 3D printable design for catching water drainage from potted plants!</div></div><div style="position:absolute;left:0px;top:1766.5px;width:3456.0px;height:161.2px;background:#0e2833;"></div><div style="position:absolute;left:25px;top:1789.5px;width:3279.0px;height:112.0px;background:#173541;border-radius:10px"></div><div style="position:absolute;left:49.2px;top:1812.1px;font:400 28px/32.2px 'Liberation Sans',sans-serif;color:#657b83;white-space:pre;">Describe the changes you want to make...</div><div style="position:absolute;left:3344.3px;top:1831.8px;font:400 26.5px/30.4px 'Liberation Sans',sans-serif;color:#657b83;white-space:pre;">Send</div><div style="position:absolute;left:0px;top:1927.7px;width:3456.0px;height:67.3px;background:#0e2631;"></div><div style="position:absolute;left:0px;top:1926.7px;width:3456.0px;height:2.0px;background:#1f3e49;"></div><div style="position:absolute;left:35.7px;top:1948.4px;font:400 25px/28.7px 'Liberation Sans',sans-serif;color:#657b83;white-space:pre;">↵ to submit • ⇧↵ for newline • <b style="font-weight:700">Esc</b> to cancel • ⌘K to focus prompt</div><div style="position:absolute;left:3092.6px;top:1948.9px;font:700 23.6px/27.1px 'Liberation Sans',sans-serif;color:#a3afaf;white-space:pre;">Claude Sonnet 4.5</div><svg width="3456" height="1995" viewBox="0 0 3456 1995" style="position:absolute;left:0;top:0;overflow:visible"><path d="M3405.7 1958.5L3417.7 1958.5L3411.7 1964.5Z" fill="#a9a9a9"/></svg><div style="position:absolute;left:-4px;top:-4px;width:3460px;height:1997.5px;box-sizing:border-box;border:2px solid #3c5159;border-left:0;border-top:0;border-radius:0 0 21px 0"></div></div><div style="position:absolute;left:0;top:0;width:3456px;height:1995px;pointer-events:none"><svg width="3456" height="1995" viewBox="0 0 3456 1995" style="position:absolute;left:0;top:0"><defs><linearGradient id="gw" x1="0" x2="1" y1="0" y2="0"><stop offset="0" stop-color="#44615f"/><stop offset="0.22" stop-color="#2f625f"/><stop offset="0.6" stop-color="#2b625f"/><stop offset="1" stop-color="#2e6865"/></linearGradient><linearGradient id="gf" x1="0" x2="1" y1="0" y2="0"><stop offset="0" stop-color="#3a6e6b"/><stop offset="0.3" stop-color="#32746f"/><stop offset="1" stop-color="#33736f"/></linearGradient><linearGradient id="gi" x1="0" x2="1" y1="0" y2="0"><stop offset="0" stop-color="#4a7c7a"/><stop offset="0.08" stop-color="#3a807c"/><stop offset="0.5" stop-color="#327571"/><stop offset="0.9" stop-color="#2a5f5d"/><stop offset="1" stop-color="#3e6c6b"/></linearGradient><linearGradient id="gfl" x1="0" x2="0" y1="0" y2="1"><stop offset="0" stop-color="#a0d1d3"/><stop offset="0.5" stop-color="#9ccfd1"/><stop offset="1" stop-color="#96ccce"/></linearGradient><linearGradient id="gr" x1="0" x2="0" y1="0" y2="1"><stop offset="0" stop-color="#9dd0d2"/><stop offset="0.75" stop-color="#99cdcf"/><stop offset="1" stop-color="#86c2c3"/></linearGradient><clipPath id="c2"><path d="M2105.5 681.5a488.5 258.0 0 1 0 977.0 0a488.5 258.0 0 1 0 -977.0 0Z"/></clipPath><clipPath id="ciw"><rect x="2000" y="0" width="1200" height="776"/></clipPath><clipPath id="cup"><rect x="2000" y="0" width="1200" height="755.0"/></clipPath><clipPath id="clo"><rect x="2000" y="765.0" width="1200" height="600"/></clipPath></defs><path d="M2059.8 684.0L3128.2 684.0L3128.2 687.6L3128.0 691.3L3127.8 694.9L3127.5 698.5L3127.0 702.1L3126.5 705.8L3125.9 709.4L3125.2 713.0L3124.5 716.6L3123.6 720.2L3122.6 723.8L3121.6 727.4L3120.4 731.0L3119.2 734.5L3117.8 738.1L3116.4 741.7L3114.9 745.2L3113.3 748.7L3111.6 752.3L3109.8 755.8L3108.0 759.3L3033.1 894.9L3031.3 898.2L3029.4 901.5L3027.4 904.8L3025.3 908.1L3023.2 911.3L3021.0 914.6L3018.7 917.8L3016.3 921.0L3013.9 924.2L3011.4 927.4L3008.8 930.5L3006.2 933.7L3003.5 936.8L3000.7 939.9L2997.8 942.9L2994.9 946.0L2991.9 949.0L2988.8 952.0L2985.7 955.0L2982.5 957.9L2979.2 960.9L2975.8 963.8L2972.4 966.6L2969.0 969.5L2965.4 972.3L2961.8 975.1L2958.2 977.9L2954.4 980.6L2950.7 983.4L2946.8 986.0L2942.9 988.7L2938.9 991.3L2934.9 993.9L2930.8 996.5L2926.7 999.0L2922.5 1001.5L2918.2 1004.0L2913.9 1006.4L2909.5 1008.8L2905.1 1011.2L2900.6 1013.6L2896.1 1015.9L2891.5 1018.1L2886.8 1020.4L2882.2 1022.6L2877.4 1024.7L2872.6 1026.9L2867.8 1028.9L2862.9 1031.0L2858.0 1033.0L2853.0 1035.0L2848.0 1036.9L2842.9 1038.8L2837.8 1040.7L2832.7 1042.5L2827.5 1044.3L2822.3 1046.1L2817.0 1047.8L2811.7 1049.5L2806.3 1051.1L2800.9 1052.7L2795.5 1054.2L2790.1 1055.7L2784.6 1057.2L2779.1 1058.6L2773.5 1060.0L2767.9 1061.3L2762.3 1062.6L2756.7 1063.9L2751.0 1065.1L2745.3 1066.3L2739.6 1067.4L2733.8 1068.5L2728.1 1069.5L2722.3 1070.5L2716.5 1071.4L2710.6 1072.3L2704.8 1073.2L2698.9 1074.0L2693.0 1074.8L2687.1 1075.5L2681.1 1076.2L2675.2 1076.8L2669.2 1077.4L2663.3 1078.0L2657.3 1078.5L2651.3 1078.9L2645.3 1079.3L2639.3 1079.7L2633.3 1080.0L2627.2 1080.3L2621.2 1080.5L2615.2 1080.7L2609.1 1080.9L2603.1 1080.9L2597.0 1081.0L2591.0 1081.0L2584.9 1080.9L2578.9 1080.9L2572.8 1080.7L2566.8 1080.5L2560.8 1080.3L2554.7 1080.0L2548.7 1079.7L2542.7 1079.3L2536.7 1078.9L2530.7 1078.5L2524.7 1078.0L2518.8 1077.4L2512.8 1076.8L2506.9 1076.2L2500.9 1075.5L2495.0 1074.8L2489.1 1074.0L2483.2 1073.2L2477.4 1072.3L2471.5 1071.4L2465.7 1070.5L2459.9 1069.5L2454.2 1068.5L2448.4 1067.4L2442.7 1066.3L2437.0 1065.1L2431.3 1063.9L2425.7 1062.6L2420.1 1061.3L2414.5 1060.0L2408.9 1058.6L2403.4 1057.2L2397.9 1055.7L2392.5 1054.2L2387.1 1052.7L2381.7 1051.1L2376.3 1049.5L2371.0 1047.8L2365.7 1046.1L2360.5 1044.3L2355.3 1042.5L2350.2 1040.7L2345.1 1038.8L2340.0 1036.9L2335.0 1035.0L2330.0 1033.0L2325.1 1031.0L2320.2 1028.9L2315.4 1026.9L2310.6 1024.7L2305.8 1022.6L2301.2 1020.4L2296.5 1018.1L2291.9 1015.9L2287.4 1013.6L2282.9 1011.2L2278.5 1008.8L2274.1 1006.4L2269.8 1004.0L2265.5 1001.5L2261.3 999.0L2257.2 996.5L2253.1 993.9L2249.1 991.3L2245.1 988.7L2241.2 986.0L2237.3 983.4L2233.6 980.6L2229.8 977.9L2226.2 975.1L2222.6 972.3L2219.0 969.5L2215.6 966.6L2212.2 963.8L2208.8 960.9L2205.5 957.9L2202.3 955.0L2199.2 952.0L2196.1 949.0L2193.1 946.0L2190.2 942.9L2187.3 939.9L2184.5 936.8L2181.8 933.7L2179.2 930.5L2176.6 927.4L2174.1 924.2L2171.7 921.0L2169.3 917.8L2167.0 914.6L2164.8 911.3L2162.7 908.1L2160.6 904.8L2158.6 901.5L2156.7 898.2L2154.9 894.9L2080.0 759.3L2078.2 755.8L2076.4 752.3L2074.7 748.7L2073.1 745.2L2071.6 741.7L2070.2 738.1L2068.8 734.5L2067.6 731.0L2066.4 727.4L2065.4 723.8L2064.4 720.2L2063.5 716.6L2062.8 713.0L2062.1 709.4L2061.5 705.8L2061.0 702.1L2060.5 698.5L2060.2 694.9L2060.0 691.3L2059.8 687.6Z" fill="url(#gf)"/><path d="M2059.8 684.0L3128.2 684.0L3128.2 687.6L3128.0 691.3L3127.8 694.9L3127.5 698.5L3127.0 702.1L3126.5 705.8L3125.9 709.4L3125.2 713.0L3124.5 716.6L3123.6 720.2L3122.6 723.8L3121.6 727.4L3120.4 731.0L3119.2 734.5L3117.8 738.1L3116.4 741.7L3114.9 745.2L3113.3 748.7L3111.6 752.3L3109.8 755.8L3108.0 759.3L3106.0 762.8L3104.0 766.2L3101.8 769.7L3015.3 908.6L2990.0 943.3L2949.9 966.0L2944.4 969.1L2938.8 972.1L2933.2 975.1L2927.5 978.0L2921.7 980.8L2915.9 983.7L2909.9 986.4L2904.0 989.1L2897.9 991.8L2891.8 994.4L2885.7 997.0L2879.5 999.5L2873.2 1001.9L2866.9 1004.3L2860.5 1006.6L2854.0 1008.9L2847.5 1011.1L2841.0 1013.3L2834.4 1015.4L2827.7 1017.5L2821.0 1019.5L2814.3 1021.4L2807.5 1023.3L2800.7 1025.1L2793.8 1026.9L2786.9 1028.6L2780.0 1030.2L2773.0 1031.8L2766.0 1033.3L2758.9 1034.8L2751.8 1036.2L2744.7 1037.5L2737.5 1038.8L2730.3 1040.0L2723.1 1041.2L2715.9 1042.2L2708.6 1043.3L2701.3 1044.2L2694.0 1045.1L2686.7 1046.0L2679.4 1046.7L2672.0 1047.4L2664.6 1048.1L2657.2 1048.7L2649.8 1049.2L2642.4 1049.6L2635.0 1050.0L2627.5 1050.3L2620.1 1050.6L2612.6 1050.8L2605.2 1050.9L2597.7 1051.0L2590.3 1051.0L2582.8 1050.9L2575.4 1050.8L2567.9 1050.6L2560.5 1050.3L2553.0 1050.0L2545.6 1049.6L2538.2 1049.2L2530.8 1048.7L2523.4 1048.1L2516.0 1047.4L2508.6 1046.7L2501.3 1046.0L2494.0 1045.1L2486.7 1044.2L2479.4 1043.3L2472.1 1042.2L2464.9 1041.2L2457.7 1040.0L2450.5 1038.8L2443.3 1037.5L2436.2 1036.2L2429.1 1034.8L2422.0 1033.3L2415.0 1031.8L2408.0 1030.2L2401.1 1028.6L2394.2 1026.9L2387.3 1025.1L2380.5 1023.3L2373.7 1021.4L2367.0 1019.5L2360.3 1017.5L2353.6 1015.4L2347.0 1013.3L2340.5 1011.1L2334.0 1008.9L2327.5 1006.6L2321.1 1004.3L2314.8 1001.9L2308.5 999.5L2302.3 997.0L2296.2 994.4L2290.1 991.8L2284.0 989.1L2278.1 986.4L2272.1 983.7L2266.3 980.8L2260.5 978.0L2254.8 975.1L2249.2 972.1L2243.6 969.1L2238.1 966.0L2198.0 943.3L2172.7 908.6L2086.2 769.7L2084.0 766.2L2082.0 762.8L2080.0 759.3L2078.2 755.8L2076.4 752.3L2074.7 748.7L2073.1 745.2L2071.6 741.7L2070.2 738.1L2068.8 734.5L2067.6 731.0L2066.4 727.4L2065.4 723.8L2064.4 720.2L2063.5 716.6L2062.8 713.0L2062.1 709.4L2061.5 705.8L2061.0 702.1L2060.5 698.5L2060.2 694.9L2060.0 691.3L2059.8 687.6Z" fill="url(#gw)"/><path d="M2059.0 684.0a535.0 277.0 0 1 0 1070.0 0a535.0 277.0 0 1 0 -1070.0 0Z" fill="url(#gr)"/><g clip-path="url(#ciw)"><path d="M2105.5 681.5a488.5 258.0 0 1 0 977.0 0a488.5 258.0 0 1 0 -977.0 0Z" fill="url(#gi)"/></g><g clip-path="url(#c2)"><path d="M2136.0 785.0a458.0 274.0 0 1 0 916.0 0a458.0 274.0 0 1 0 -916.0 0Z" fill="url(#gfl)"/></g><g clip-path="url(#cup)"><path d="M2275.0 733.0a319.0 184.0 0 1 0 638.0 0a319.0 184.0 0 1 0 -638.0 0ZM2278.0 735.0a316.0 177.0 0 1 0 632.0 0a316.0 177.0 0 1 0 -632.0 0Z" fill="#397e7a" fill-rule="evenodd"/></g><g clip-path="url(#clo)"><path d="M2255.5 765.0a338.5 168.0 0 1 0 677.0 0a338.5 168.0 0 1 0 -677.0 0ZM2260.5 759.0a333.5 173.0 0 1 0 667.0 0a333.5 173.0 0 1 0 -667.0 0Z" fill="#2f716c" fill-rule="evenodd"/></g></svg><svg width="3456" height="1995" viewBox="0 0 3456 1995" style="position:absolute;left:0;top:0"><path d="M1892 1028L1976 1077L1892 1124.3L1808 1077ZM1808 1077L1892 1124.3L1892 1221.2L1808 1174.2ZM1892 1124.3L1976 1077L1976 1174.2L1892 1221.2Z" fill="#5eaea6" stroke="#2b514d" stroke-width="1.4" stroke-linejoin="round"/><g transform="matrix(0.8400 0.4900 -0.8400 0.4900 1892 1028)"><text x="50" y="57" text-anchor="middle" font-family="Liberation Sans" font-size="14" fill="#1d3d3b">TOP</text></g><g transform="matrix(0.8400 0.4730 0.0000 0.9720 1808 1077)"><text x="50" y="60" text-anchor="middle" font-family="Liberation Sans" font-size="14" fill="#1d3d3b">LEFT</text></g><g transform="matrix(0.8400 -0.4730 0.0000 0.9690 1892 1124.3)"><text x="50" y="60" text-anchor="middle" font-family="Liberation Sans" font-size="14" fill="#1d3d3b">FRONT</text></g></svg></div></body></html>
